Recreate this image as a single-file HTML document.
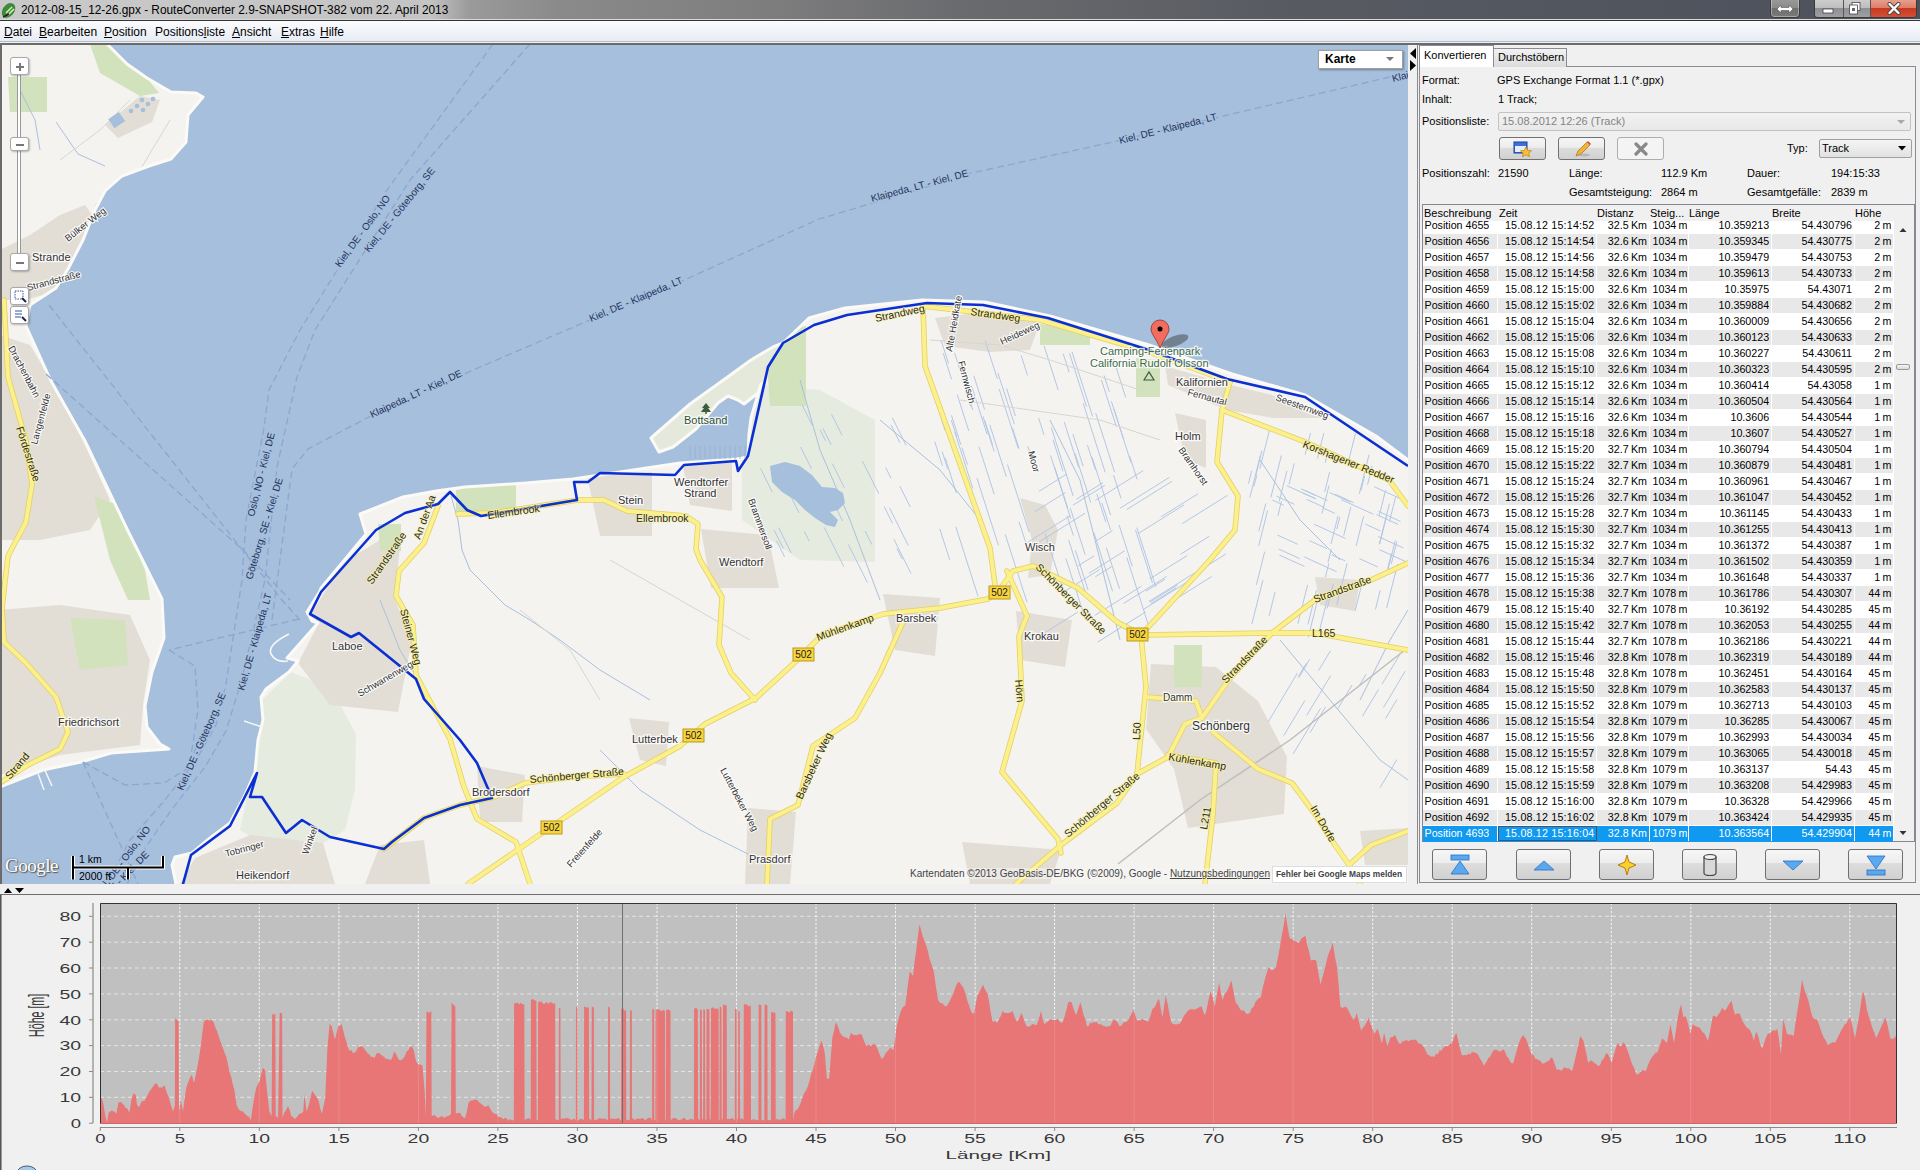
<!DOCTYPE html><html><head><meta charset="utf-8"><title>RouteConverter</title><style>
*{margin:0;padding:0;box-sizing:border-box}
html,body{width:1920px;height:1170px;overflow:hidden;background:#f0f0f0;font-family:"Liberation Sans",sans-serif;font-size:12px;color:#000}
.abs{position:absolute}
.tick{font-family:"Liberation Sans",sans-serif;font-size:13px;fill:#383838}
.axl{font-family:"Liberation Sans",sans-serif;font-size:11.5px;fill:#383838}
.ayl{font-family:"Liberation Sans",sans-serif;font-size:21.5px;fill:#383838}
</style></head><body>
<div class="abs" style="left:0;top:0;width:1920px;height:21px;background:linear-gradient(90deg,#c9c9c9 0px,#c4c4c4 430px,#9a9a9a 470px,#8a8a8a 560px,#7e7e7f 760px,#6a6b6e 960px,#575a61 1300px,#4c515c 1920px)"></div>
<div class="abs" style="left:21px;top:3px;font-size:11.85px;color:#000">2012-08-15_12-26.gpx - RouteConverter 2.9-SNAPSHOT-382 vom 22. April 2013</div>
<div class="abs" style="left:0;top:21px;width:1920px;height:21px;background:linear-gradient(#fbfcfe,#e6ebf4)"></div>
<div class="abs" style="left:0;top:41px;width:1920px;height:1px;background:#b6bcc6"></div>
<div class="abs" style="left:0;top:43px;width:1920px;height:2px;background:#6b6b6b"></div>
<div class="abs" style="left:4px;top:25px;font-size:12px;color:#000"><u>D</u>atei</div>
<div class="abs" style="left:39px;top:25px;font-size:12px;color:#000"><u>B</u>earbeiten</div>
<div class="abs" style="left:104px;top:25px;font-size:12px;color:#000"><u>P</u>osition</div>
<div class="abs" style="left:155px;top:25px;font-size:12px;color:#000">Positions<u>l</u>iste</div>
<div class="abs" style="left:232px;top:25px;font-size:12px;color:#000"><u>A</u>nsicht</div>
<div class="abs" style="left:281px;top:25px;font-size:12px;color:#000"><u>E</u>xtras</div>
<div class="abs" style="left:320px;top:25px;font-size:12px;color:#000"><u>H</u>ilfe</div>
<svg class="abs" style="left:0;top:1px" width="18" height="19"><path d="M2,14 C1,8 5,3 10,2 C14,2 16,5 15,9 C14,13 10,17 5,17Z" fill="#3f8a3a"/><path d="M6,12 L12,6 M8,14 L14,8" stroke="#d8f0c0" stroke-width="1.5"/><path d="M3,16 L9,13" stroke="#222" stroke-width="1.5"/></svg>
<div class="abs" style="left:1770px;top:-2px;width:30px;height:20px;border:1px solid #3a3a3a;border-radius:0 0 4px 4px;background:linear-gradient(#9a9a9a,#8a8a8a 50%,#6e6e6e 51%,#7a7a7a);box-shadow:inset 0 0 0 1px rgba(255,255,255,0.35)"></div>
<svg class="abs" style="left:1776px;top:3px" width="18" height="12"><path d="M1,6 L5,2 V4.5 H13 V2 L17,6 L13,10 V7.5 H5 V10Z" fill="#fff" stroke="#555" stroke-width="0.6"/></svg>
<div class="abs" style="left:1814px;top:-2px;width:103px;height:20px;border:1px solid #3a3a3a;border-radius:0 0 4px 4px;overflow:hidden;box-shadow:inset 0 0 0 1px rgba(255,255,255,0.35)"><div class="abs" style="left:0;top:0;width:28px;height:20px;background:linear-gradient(#cfcfcf,#bdbdbd 45%,#8d8f93 46%,#a2a4a8)"></div><div class="abs" style="left:28px;top:0;width:1px;height:20px;background:#555"></div><div class="abs" style="left:29px;top:0;width:26px;height:20px;background:linear-gradient(#cfcfcf,#bdbdbd 45%,#8d8f93 46%,#a2a4a8)"></div><div class="abs" style="left:55px;top:0;width:1px;height:20px;background:#555"></div><div class="abs" style="left:56px;top:0;width:47px;height:20px;background:linear-gradient(#e8a392,#dc7d66 45%,#c9381f 46%,#d6553a)"></div></div>
<svg class="abs" style="left:1822px;top:6px" width="12" height="8"><rect x="1" y="3" width="10" height="4" fill="#fff" stroke="#444" stroke-width="0.8"/></svg>
<svg class="abs" style="left:1848px;top:1px" width="14" height="15"><rect x="4" y="1.5" width="8" height="8" fill="#fff" stroke="#444" stroke-width="0.8"/><rect x="1.5" y="4" width="8" height="9" fill="#fff" stroke="#444" stroke-width="0.8"/><rect x="4" y="7" width="3" height="3" fill="#666"/></svg>
<svg class="abs" style="left:1887px;top:2px" width="14" height="13"><path d="M2.5,2 L11.5,11 M11.5,2 L2.5,11" stroke="#444" stroke-width="4" stroke-linecap="round"/><path d="M2.5,2 L11.5,11 M11.5,2 L2.5,11" stroke="#fff" stroke-width="2.4" stroke-linecap="round"/></svg>
<div class="abs" style="left:0;top:19px;width:1920px;height:1px;background:#d8d8d8"></div>
<div class="abs" style="left:0;top:20px;width:1920px;height:1px;background:#333"></div>
<div class="abs" style="left:2px;top:45px;width:1406px;height:839px;overflow:hidden"><div class="abs" style="left:-2px;top:-45px"><svg style="position:absolute;left:0;top:0" width="1408" height="884" viewBox="0 0 1408 884">
<rect x="0" y="0" width="1408" height="884" fill="#f4f3ef"/>
<path d="M262,700 L291,672 L331,688 L356,734 L355,790 L345,830 L320,845 L265,845 L240,830 L256,755Z" fill="#e6ebdf"/>
<path d="M742,383 L820,390 L875,420 L875,562 L800,560 L742,520Z" fill="#e6ebdf"/>
<path d="M0,250 L30,235 L60,215 L85,205 L92,215 L80,250 L68,275 L55,292 L24,300 L0,300Z" fill="#e2ded6"/>
<path d="M105,125 L140,96 L160,100 L152,122 L118,138Z" fill="#e2ded6"/>
<path d="M0,335 L30,345 L60,395 L85,445 L110,500 L90,530 L40,540 L0,540Z" fill="#e2ded6"/>
<path d="M0,610 L60,605 L130,615 L150,660 L143,705 L140,745 L60,755 L0,775Z" fill="#e2ded6"/>
<path d="M312,613 L342,563 L380,540 L400,545 L395,600 L412,640 L398,712 L330,705 L298,663 L318,625Z" fill="#e2ded6"/>
<path d="M180,884 L195,858 L250,835 L323,843 L335,884Z" fill="#e2ded6"/>
<path d="M365,884 L380,845 L424,840 L430,884Z" fill="#e2ded6"/>
<path d="M477,766 L525,775 L522,822 L480,822Z" fill="#e2ded6"/>
<path d="M629,718 L669,722 L666,766 L640,760Z" fill="#e2ded6"/>
<path d="M587,476 L652,472 L652,536 L600,536Z" fill="#e2ded6"/>
<path d="M683,466 L732,462 L732,511 L690,505Z" fill="#e2ded6"/>
<path d="M701,529 L768,535 L779,588 L711,588Z" fill="#e2ded6"/>
<path d="M935,318 L985,312 L1040,322 L1030,350 L990,352 L945,346Z" fill="#e2ded6"/>
<path d="M1165,366 L1227,384 L1272,395 L1326,418 L1274,418 L1227,410 L1168,385Z" fill="#e2ded6"/>
<path d="M1175,413 L1206,420 L1206,468 L1185,460Z" fill="#e2ded6"/>
<path d="M1020,498 L1045,505 L1058,530 L1050,575 L1028,578 L1032,540Z" fill="#e2ded6"/>
<path d="M1151,664 L1216,667 L1258,701 L1287,757 L1284,814 L1188,828 L1174,769 L1146,729Z" fill="#e2ded6"/>
<path d="M1016,611 L1072,620 L1065,667 L1020,660Z" fill="#e2ded6"/>
<path d="M883,594 L940,598 L935,656 L895,650Z" fill="#e2ded6"/>
<path d="M748,808 L796,812 L790,884 L745,884Z" fill="#e2ded6"/>
<path d="M962,842 L1061,850 L1050,884 L970,884Z" fill="#e2ded6"/>
<path d="M1315,577 L1360,580 L1355,611 L1320,605Z" fill="#e2ded6"/>
<path d="M1360,831 L1408,828 L1408,865 L1365,865Z" fill="#e2ded6"/>
<path d="M90,44 L107,44 L127,64 L147,78 L159,93 L140,96 L100,73Z" fill="#d2e2bd"/>
<path d="M8,77 L47,77 L47,112 L10,112Z" fill="#d2e2bd"/>
<path d="M94,496 L118,505 L145,570 L150,600 L128,600 L110,560Z" fill="#d2e2bd"/>
<path d="M70,618 L125,620 L128,665 L80,670Z" fill="#d2e2bd"/>
<path d="M458,485 L516,484 L516,514 L462,514Z" fill="#d2e2bd"/>
<path d="M378,524 L401,524 L401,551 L380,551Z" fill="#d2e2bd"/>
<path d="M765,334 L806,326 L806,406 L770,406Z" fill="#d2e2bd"/>
<path d="M732,438 L745,438 L745,459 L732,459Z" fill="#d2e2bd"/>
<path d="M1040,324 L1090,330 L1090,345 L1040,345Z" fill="#d2e2bd"/>
<path d="M1136,358 L1160,360 L1160,397 L1136,397Z" fill="#d2e2bd"/>
<path d="M1174,645 L1202,645 L1202,687 L1174,687Z" fill="#d2e2bd"/>
<path d="M456,490 L480,488 L480,513 L456,513Z" fill="#d2e2bd"/>
<path d="M783,343 L773,347 L751,360 L729,376 L690,404 L651,438 L659,452 L673,447 L682,440 L696,429 L718,403 L728,396 L738,400 L744,404 L758,393 L761,384 L770,360Z" fill="#e4e9dc"/>
<line x1="998.0" y1="373.2" x2="1014.3" y2="424.0" stroke="#b3c7e6" stroke-width="1"/>
<line x1="945.2" y1="457.9" x2="956.4" y2="493.0" stroke="#b3c7e6" stroke-width="1"/>
<line x1="942.2" y1="451.6" x2="947.6" y2="468.7" stroke="#b3c7e6" stroke-width="1"/>
<line x1="1021.1" y1="355.4" x2="1027.5" y2="375.4" stroke="#b3c7e6" stroke-width="1"/>
<line x1="1019.1" y1="521.9" x2="1026.1" y2="543.7" stroke="#b3c7e6" stroke-width="1"/>
<line x1="976.9" y1="478.0" x2="998.4" y2="545.2" stroke="#b3c7e6" stroke-width="1"/>
<line x1="1051.2" y1="427.3" x2="1073.2" y2="496.0" stroke="#b3c7e6" stroke-width="1"/>
<line x1="939.8" y1="528.9" x2="949.7" y2="559.8" stroke="#b3c7e6" stroke-width="1"/>
<line x1="960.3" y1="365.9" x2="970.5" y2="397.9" stroke="#b3c7e6" stroke-width="1"/>
<line x1="1101.4" y1="379.8" x2="1116.4" y2="426.7" stroke="#b3c7e6" stroke-width="1"/>
<line x1="1064.2" y1="421.9" x2="1078.6" y2="467.1" stroke="#b3c7e6" stroke-width="1"/>
<line x1="943.2" y1="353.1" x2="951.6" y2="379.4" stroke="#b3c7e6" stroke-width="1"/>
<line x1="1072.9" y1="434.1" x2="1083.2" y2="466.3" stroke="#b3c7e6" stroke-width="1"/>
<line x1="1053.0" y1="439.7" x2="1063.0" y2="471.2" stroke="#b3c7e6" stroke-width="1"/>
<line x1="1096.8" y1="493.8" x2="1105.9" y2="522.2" stroke="#b3c7e6" stroke-width="1"/>
<line x1="1050.6" y1="455.5" x2="1070.8" y2="518.7" stroke="#b3c7e6" stroke-width="1"/>
<line x1="1083.2" y1="403.3" x2="1105.2" y2="472.3" stroke="#b3c7e6" stroke-width="1"/>
<line x1="954.8" y1="432.0" x2="972.9" y2="488.6" stroke="#b3c7e6" stroke-width="1"/>
<line x1="961.9" y1="447.6" x2="967.4" y2="464.7" stroke="#b3c7e6" stroke-width="1"/>
<line x1="1070.3" y1="508.2" x2="1085.2" y2="554.7" stroke="#b3c7e6" stroke-width="1"/>
<line x1="1113.9" y1="409.0" x2="1130.9" y2="462.3" stroke="#b3c7e6" stroke-width="1"/>
<line x1="1054.8" y1="467.6" x2="1067.6" y2="507.7" stroke="#b3c7e6" stroke-width="1"/>
<line x1="1106.4" y1="547.8" x2="1119.5" y2="588.9" stroke="#b3c7e6" stroke-width="1"/>
<line x1="1069.5" y1="353.3" x2="1086.6" y2="406.9" stroke="#b3c7e6" stroke-width="1"/>
<line x1="1065.9" y1="558.5" x2="1085.2" y2="618.7" stroke="#b3c7e6" stroke-width="1"/>
<line x1="989.8" y1="424.9" x2="1006.3" y2="476.7" stroke="#b3c7e6" stroke-width="1"/>
<line x1="934.7" y1="441.6" x2="942.5" y2="465.8" stroke="#b3c7e6" stroke-width="1"/>
<line x1="954.6" y1="353.0" x2="972.9" y2="410.2" stroke="#b3c7e6" stroke-width="1"/>
<line x1="957.2" y1="394.5" x2="968.8" y2="431.0" stroke="#b3c7e6" stroke-width="1"/>
<line x1="1113.0" y1="357.7" x2="1125.7" y2="397.4" stroke="#b3c7e6" stroke-width="1"/>
<line x1="1045.4" y1="534.3" x2="1064.6" y2="594.4" stroke="#b3c7e6" stroke-width="1"/>
<line x1="1111.4" y1="401.3" x2="1123.5" y2="439.1" stroke="#b3c7e6" stroke-width="1"/>
<line x1="1005.3" y1="534.5" x2="1027.0" y2="602.2" stroke="#b3c7e6" stroke-width="1"/>
<line x1="961.7" y1="378.8" x2="970.6" y2="406.5" stroke="#b3c7e6" stroke-width="1"/>
<line x1="979.0" y1="446.7" x2="994.2" y2="494.1" stroke="#b3c7e6" stroke-width="1"/>
<line x1="985.2" y1="340.9" x2="997.4" y2="378.9" stroke="#b3c7e6" stroke-width="1"/>
<line x1="1007.5" y1="464.6" x2="1029.1" y2="532.0" stroke="#b3c7e6" stroke-width="1"/>
<line x1="1075.0" y1="453.4" x2="1090.7" y2="502.4" stroke="#b3c7e6" stroke-width="1"/>
<line x1="1072.0" y1="351.9" x2="1092.6" y2="416.4" stroke="#b3c7e6" stroke-width="1"/>
<line x1="1093.8" y1="532.4" x2="1112.6" y2="591.3" stroke="#b3c7e6" stroke-width="1"/>
<line x1="1012.4" y1="427.8" x2="1019.0" y2="448.5" stroke="#b3c7e6" stroke-width="1"/>
<line x1="1063.2" y1="353.7" x2="1069.2" y2="372.4" stroke="#b3c7e6" stroke-width="1"/>
<line x1="973.8" y1="375.7" x2="984.6" y2="409.4" stroke="#b3c7e6" stroke-width="1"/>
<line x1="941.0" y1="340.1" x2="948.5" y2="363.4" stroke="#b3c7e6" stroke-width="1"/>
<line x1="951.3" y1="420.0" x2="956.6" y2="436.4" stroke="#b3c7e6" stroke-width="1"/>
<line x1="1113.6" y1="475.1" x2="1121.0" y2="498.3" stroke="#b3c7e6" stroke-width="1"/>
<line x1="983.0" y1="416.4" x2="994.2" y2="451.5" stroke="#b3c7e6" stroke-width="1"/>
<line x1="955.8" y1="526.8" x2="978.1" y2="596.4" stroke="#b3c7e6" stroke-width="1"/>
<line x1="1027.9" y1="446.4" x2="1034.2" y2="466.2" stroke="#b3c7e6" stroke-width="1"/>
<line x1="951.5" y1="415.4" x2="960.9" y2="444.9" stroke="#b3c7e6" stroke-width="1"/>
<line x1="1104.1" y1="375.5" x2="1109.3" y2="391.8" stroke="#b3c7e6" stroke-width="1"/>
<line x1="1129.7" y1="456.2" x2="1137.1" y2="479.3" stroke="#b3c7e6" stroke-width="1"/>
<line x1="1044.1" y1="345.9" x2="1058.2" y2="390.0" stroke="#b3c7e6" stroke-width="1"/>
<line x1="1135.5" y1="529.9" x2="1152.5" y2="583.2" stroke="#b3c7e6" stroke-width="1"/>
<line x1="984.8" y1="420.7" x2="992.6" y2="444.9" stroke="#b3c7e6" stroke-width="1"/>
<line x1="1092.1" y1="457.2" x2="1110.6" y2="515.0" stroke="#b3c7e6" stroke-width="1"/>
<line x1="999.2" y1="389.1" x2="1018.3" y2="448.7" stroke="#b3c7e6" stroke-width="1"/>
<line x1="1136.8" y1="527.6" x2="1155.8" y2="586.9" stroke="#b3c7e6" stroke-width="1"/>
<line x1="1101.8" y1="502.8" x2="1110.6" y2="530.2" stroke="#b3c7e6" stroke-width="1"/>
<line x1="1038.7" y1="418.2" x2="1044.0" y2="434.8" stroke="#b3c7e6" stroke-width="1"/>
<line x1="935.9" y1="401.5" x2="945.2" y2="430.7" stroke="#b3c7e6" stroke-width="1"/>
<line x1="1075.4" y1="550.4" x2="1088.1" y2="590.0" stroke="#b3c7e6" stroke-width="1"/>
<line x1="1126.8" y1="557.4" x2="1148.4" y2="624.9" stroke="#b3c7e6" stroke-width="1"/>
<line x1="1006.6" y1="388.5" x2="1015.4" y2="416.0" stroke="#b3c7e6" stroke-width="1"/>
<line x1="971.3" y1="385.0" x2="987.1" y2="434.3" stroke="#b3c7e6" stroke-width="1"/>
<line x1="1119.1" y1="524.9" x2="1132.3" y2="566.3" stroke="#b3c7e6" stroke-width="1"/>
<line x1="1067.1" y1="515.9" x2="1073.4" y2="535.6" stroke="#b3c7e6" stroke-width="1"/>
<line x1="1068.7" y1="540.2" x2="1087.3" y2="598.2" stroke="#b3c7e6" stroke-width="1"/>
<line x1="1087.5" y1="445.2" x2="1095.5" y2="470.0" stroke="#b3c7e6" stroke-width="1"/>
<line x1="1095.7" y1="413.2" x2="1114.6" y2="472.2" stroke="#b3c7e6" stroke-width="1"/>
<line x1="1395.5" y1="497.3" x2="1389.5" y2="521.3" stroke="#b3c7e6" stroke-width="1"/>
<line x1="1391.5" y1="553.2" x2="1387.5" y2="569.2" stroke="#b3c7e6" stroke-width="1"/>
<line x1="1260.3" y1="455.7" x2="1249.9" y2="497.4" stroke="#b3c7e6" stroke-width="1"/>
<line x1="1369.0" y1="454.8" x2="1359.3" y2="493.8" stroke="#b3c7e6" stroke-width="1"/>
<line x1="1396.8" y1="541.7" x2="1391.3" y2="564.0" stroke="#b3c7e6" stroke-width="1"/>
<line x1="1327.8" y1="452.3" x2="1325.2" y2="462.8" stroke="#b3c7e6" stroke-width="1"/>
<line x1="1395.3" y1="540.4" x2="1388.2" y2="568.9" stroke="#b3c7e6" stroke-width="1"/>
<line x1="1389.4" y1="503.7" x2="1379.3" y2="544.3" stroke="#b3c7e6" stroke-width="1"/>
<line x1="1372.2" y1="465.9" x2="1367.5" y2="484.7" stroke="#b3c7e6" stroke-width="1"/>
<line x1="1286.9" y1="470.9" x2="1279.2" y2="501.4" stroke="#b3c7e6" stroke-width="1"/>
<line x1="1281.5" y1="501.2" x2="1277.9" y2="515.8" stroke="#b3c7e6" stroke-width="1"/>
<line x1="1385.6" y1="490.1" x2="1379.1" y2="516.2" stroke="#b3c7e6" stroke-width="1"/>
<line x1="1333.3" y1="583.7" x2="1327.2" y2="608.5" stroke="#b3c7e6" stroke-width="1"/>
<line x1="1386.8" y1="515.3" x2="1379.7" y2="543.9" stroke="#b3c7e6" stroke-width="1"/>
<line x1="1323.8" y1="433.2" x2="1317.4" y2="458.6" stroke="#b3c7e6" stroke-width="1"/>
<line x1="1269.3" y1="430.7" x2="1259.8" y2="468.6" stroke="#b3c7e6" stroke-width="1"/>
<line x1="1267.6" y1="510.5" x2="1258.7" y2="545.9" stroke="#b3c7e6" stroke-width="1"/>
<line x1="1329.0" y1="485.4" x2="1322.0" y2="513.6" stroke="#b3c7e6" stroke-width="1"/>
<line x1="1328.9" y1="563.3" x2="1325.4" y2="577.0" stroke="#b3c7e6" stroke-width="1"/>
<line x1="1329.6" y1="472.2" x2="1324.7" y2="491.9" stroke="#b3c7e6" stroke-width="1"/>
<line x1="1363.6" y1="516.3" x2="1356.1" y2="546.0" stroke="#b3c7e6" stroke-width="1"/>
<line x1="1361.6" y1="585.1" x2="1355.2" y2="610.6" stroke="#b3c7e6" stroke-width="1"/>
<line x1="1338.0" y1="515.9" x2="1331.0" y2="543.9" stroke="#b3c7e6" stroke-width="1"/>
<line x1="1350.8" y1="506.9" x2="1343.7" y2="535.6" stroke="#b3c7e6" stroke-width="1"/>
<line x1="1316.5" y1="590.1" x2="1307.9" y2="624.5" stroke="#b3c7e6" stroke-width="1"/>
<line x1="1380.2" y1="590.2" x2="1375.5" y2="609.3" stroke="#b3c7e6" stroke-width="1"/>
<line x1="1329.5" y1="590.4" x2="1319.7" y2="629.8" stroke="#b3c7e6" stroke-width="1"/>
<line x1="1261.9" y1="450.7" x2="1255.6" y2="476.1" stroke="#b3c7e6" stroke-width="1"/>
<line x1="1251.6" y1="470.9" x2="1248.5" y2="483.5" stroke="#b3c7e6" stroke-width="1"/>
<line x1="1347.1" y1="563.3" x2="1336.8" y2="604.7" stroke="#b3c7e6" stroke-width="1"/>
<line x1="1264.7" y1="551.7" x2="1256.4" y2="584.8" stroke="#b3c7e6" stroke-width="1"/>
<line x1="1262.9" y1="580.1" x2="1251.9" y2="623.9" stroke="#b3c7e6" stroke-width="1"/>
<line x1="1275.1" y1="591.9" x2="1269.1" y2="615.9" stroke="#b3c7e6" stroke-width="1"/>
<line x1="1318.0" y1="598.3" x2="1308.2" y2="637.4" stroke="#b3c7e6" stroke-width="1"/>
<line x1="1265.8" y1="503.4" x2="1258.8" y2="531.4" stroke="#b3c7e6" stroke-width="1"/>
<line x1="1294.3" y1="463.3" x2="1289.0" y2="484.4" stroke="#b3c7e6" stroke-width="1"/>
<line x1="1355.5" y1="433.3" x2="1348.2" y2="462.7" stroke="#b3c7e6" stroke-width="1"/>
<line x1="1310.5" y1="433.1" x2="1305.1" y2="454.7" stroke="#b3c7e6" stroke-width="1"/>
<line x1="1339.8" y1="517.1" x2="1336.8" y2="529.3" stroke="#b3c7e6" stroke-width="1"/>
<line x1="1397.6" y1="564.0" x2="1386.6" y2="608.0" stroke="#b3c7e6" stroke-width="1"/>
<line x1="1256.8" y1="475.1" x2="1253.9" y2="486.5" stroke="#b3c7e6" stroke-width="1"/>
<line x1="1364.6" y1="476.0" x2="1361.0" y2="490.5" stroke="#b3c7e6" stroke-width="1"/>
<line x1="1307.6" y1="584.9" x2="1297.9" y2="623.6" stroke="#b3c7e6" stroke-width="1"/>
<line x1="1281.4" y1="455.4" x2="1270.8" y2="497.6" stroke="#b3c7e6" stroke-width="1"/>
<line x1="1331.3" y1="549.1" x2="1328.0" y2="562.2" stroke="#b3c7e6" stroke-width="1"/>
<line x1="1277.5" y1="535.1" x2="1297.8" y2="544.3" stroke="#b3c7e6" stroke-width="1"/>
<line x1="1279.4" y1="555.1" x2="1304.4" y2="566.4" stroke="#b3c7e6" stroke-width="1"/>
<line x1="1374.2" y1="486.7" x2="1404.0" y2="500.3" stroke="#b3c7e6" stroke-width="1"/>
<line x1="1278.7" y1="549.0" x2="1299.6" y2="558.6" stroke="#b3c7e6" stroke-width="1"/>
<line x1="1314.1" y1="524.2" x2="1345.5" y2="538.5" stroke="#b3c7e6" stroke-width="1"/>
<line x1="1304.8" y1="490.3" x2="1327.4" y2="500.6" stroke="#b3c7e6" stroke-width="1"/>
<line x1="1301.0" y1="488.8" x2="1315.5" y2="495.4" stroke="#b3c7e6" stroke-width="1"/>
<line x1="1276.5" y1="496.1" x2="1294.4" y2="504.3" stroke="#b3c7e6" stroke-width="1"/>
<line x1="1309.7" y1="540.8" x2="1327.0" y2="548.7" stroke="#b3c7e6" stroke-width="1"/>
<line x1="1335.0" y1="494.2" x2="1353.6" y2="502.7" stroke="#b3c7e6" stroke-width="1"/>
<line x1="1272.4" y1="500.0" x2="1283.7" y2="505.2" stroke="#b3c7e6" stroke-width="1"/>
<line x1="1365.3" y1="524.1" x2="1380.5" y2="531.0" stroke="#b3c7e6" stroke-width="1"/>
<line x1="1331.7" y1="554.8" x2="1345.1" y2="560.8" stroke="#b3c7e6" stroke-width="1"/>
<line x1="1376.5" y1="514.6" x2="1398.3" y2="524.5" stroke="#b3c7e6" stroke-width="1"/>
<line x1="1378.5" y1="511.4" x2="1400.6" y2="521.5" stroke="#b3c7e6" stroke-width="1"/>
<line x1="1359.4" y1="558.6" x2="1377.9" y2="567.0" stroke="#b3c7e6" stroke-width="1"/>
<line x1="1378.2" y1="536.5" x2="1403.2" y2="547.9" stroke="#b3c7e6" stroke-width="1"/>
<line x1="1322.6" y1="507.8" x2="1334.8" y2="513.3" stroke="#b3c7e6" stroke-width="1"/>
<line x1="1286.9" y1="485.7" x2="1314.2" y2="498.1" stroke="#b3c7e6" stroke-width="1"/>
<line x1="1303.2" y1="493.1" x2="1316.1" y2="498.9" stroke="#b3c7e6" stroke-width="1"/>
<line x1="1379.4" y1="549.6" x2="1405.1" y2="561.3" stroke="#b3c7e6" stroke-width="1"/>
<line x1="1306.7" y1="499.4" x2="1324.1" y2="507.3" stroke="#b3c7e6" stroke-width="1"/>
<line x1="1329.7" y1="492.6" x2="1350.5" y2="502.1" stroke="#b3c7e6" stroke-width="1"/>
<line x1="1304.2" y1="556.9" x2="1336.6" y2="571.7" stroke="#b3c7e6" stroke-width="1"/>
<line x1="1341.1" y1="499.6" x2="1373.4" y2="514.2" stroke="#b3c7e6" stroke-width="1"/>
<line x1="1112.6" y1="530.6" x2="1096.6" y2="540.6" stroke="#b3c7e6" stroke-width="1"/>
<line x1="1124.9" y1="550.7" x2="1088.8" y2="573.3" stroke="#b3c7e6" stroke-width="1"/>
<line x1="1094.2" y1="555.8" x2="1078.0" y2="565.9" stroke="#b3c7e6" stroke-width="1"/>
<line x1="1104.9" y1="485.3" x2="1072.9" y2="505.2" stroke="#b3c7e6" stroke-width="1"/>
<line x1="1067.1" y1="473.8" x2="1038.9" y2="491.4" stroke="#b3c7e6" stroke-width="1"/>
<line x1="1099.6" y1="569.5" x2="1062.4" y2="592.8" stroke="#b3c7e6" stroke-width="1"/>
<line x1="1187.6" y1="581.8" x2="1143.0" y2="609.7" stroke="#b3c7e6" stroke-width="1"/>
<line x1="1209.4" y1="536.2" x2="1180.4" y2="554.4" stroke="#b3c7e6" stroke-width="1"/>
<line x1="1227.4" y1="495.4" x2="1182.4" y2="523.5" stroke="#b3c7e6" stroke-width="1"/>
<line x1="1169.3" y1="477.4" x2="1119.9" y2="508.3" stroke="#b3c7e6" stroke-width="1"/>
<line x1="1211.6" y1="576.6" x2="1166.3" y2="605.0" stroke="#b3c7e6" stroke-width="1"/>
<line x1="1198.1" y1="493.7" x2="1161.1" y2="516.8" stroke="#b3c7e6" stroke-width="1"/>
<line x1="1145.7" y1="611.9" x2="1097.6" y2="642.1" stroke="#b3c7e6" stroke-width="1"/>
<line x1="1200.5" y1="569.3" x2="1148.8" y2="601.6" stroke="#b3c7e6" stroke-width="1"/>
<line x1="1176.1" y1="587.9" x2="1150.9" y2="603.6" stroke="#b3c7e6" stroke-width="1"/>
<line x1="1065.3" y1="492.6" x2="1034.9" y2="511.6" stroke="#b3c7e6" stroke-width="1"/>
<line x1="1077.8" y1="612.1" x2="1039.5" y2="636.1" stroke="#b3c7e6" stroke-width="1"/>
<line x1="1166.7" y1="576.5" x2="1123.5" y2="603.5" stroke="#b3c7e6" stroke-width="1"/>
<line x1="1143.2" y1="470.6" x2="1095.3" y2="500.5" stroke="#b3c7e6" stroke-width="1"/>
<line x1="1187.2" y1="555.5" x2="1149.8" y2="578.9" stroke="#b3c7e6" stroke-width="1"/>
<line x1="1172.1" y1="481.2" x2="1126.6" y2="509.6" stroke="#b3c7e6" stroke-width="1"/>
<line x1="1102.9" y1="482.7" x2="1076.3" y2="499.3" stroke="#b3c7e6" stroke-width="1"/>
<line x1="1184.0" y1="504.9" x2="1138.4" y2="533.4" stroke="#b3c7e6" stroke-width="1"/>
<line x1="1225.9" y1="554.0" x2="1194.6" y2="573.5" stroke="#b3c7e6" stroke-width="1"/>
<line x1="1141.4" y1="586.2" x2="1094.8" y2="615.4" stroke="#b3c7e6" stroke-width="1"/>
<line x1="1164.9" y1="579.3" x2="1145.8" y2="591.2" stroke="#b3c7e6" stroke-width="1"/>
<line x1="1085.1" y1="513.2" x2="1039.3" y2="541.8" stroke="#b3c7e6" stroke-width="1"/>
<line x1="1111.8" y1="566.5" x2="1095.3" y2="576.8" stroke="#b3c7e6" stroke-width="1"/>
<line x1="1070.3" y1="515.7" x2="1027.4" y2="542.5" stroke="#b3c7e6" stroke-width="1"/>
<line x1="1177.7" y1="584.9" x2="1150.0" y2="602.1" stroke="#b3c7e6" stroke-width="1"/>
<line x1="832.3" y1="463.6" x2="844.3" y2="487.6" stroke="#b3c7e6" stroke-width="1"/>
<line x1="776.6" y1="540.9" x2="784.6" y2="556.8" stroke="#b3c7e6" stroke-width="1"/>
<line x1="896.9" y1="548.5" x2="902.2" y2="559.1" stroke="#b3c7e6" stroke-width="1"/>
<line x1="824.3" y1="527.6" x2="843.8" y2="566.6" stroke="#b3c7e6" stroke-width="1"/>
<line x1="822.9" y1="428.4" x2="831.1" y2="444.7" stroke="#b3c7e6" stroke-width="1"/>
<line x1="892.4" y1="417.9" x2="906.1" y2="445.4" stroke="#b3c7e6" stroke-width="1"/>
<line x1="779.8" y1="474.3" x2="799.1" y2="512.9" stroke="#b3c7e6" stroke-width="1"/>
<line x1="778.6" y1="527.6" x2="791.2" y2="552.9" stroke="#b3c7e6" stroke-width="1"/>
<line x1="884.2" y1="506.6" x2="892.6" y2="523.5" stroke="#b3c7e6" stroke-width="1"/>
<line x1="885.7" y1="467.5" x2="891.1" y2="478.3" stroke="#b3c7e6" stroke-width="1"/>
<line x1="760.5" y1="468.5" x2="772.3" y2="492.0" stroke="#b3c7e6" stroke-width="1"/>
<line x1="802.3" y1="405.3" x2="812.4" y2="425.6" stroke="#b3c7e6" stroke-width="1"/>
<line x1="804.3" y1="531.2" x2="809.3" y2="541.3" stroke="#b3c7e6" stroke-width="1"/>
<line x1="865.1" y1="531.0" x2="871.9" y2="544.6" stroke="#b3c7e6" stroke-width="1"/>
<line x1="889.7" y1="508.3" x2="908.2" y2="545.4" stroke="#b3c7e6" stroke-width="1"/>
<line x1="800.6" y1="447.0" x2="811.5" y2="468.8" stroke="#b3c7e6" stroke-width="1"/>
<line x1="899.8" y1="486.1" x2="910.2" y2="506.9" stroke="#b3c7e6" stroke-width="1"/>
<line x1="819.9" y1="429.5" x2="825.7" y2="441.0" stroke="#b3c7e6" stroke-width="1"/>
<line x1="774.2" y1="530.2" x2="783.5" y2="548.8" stroke="#b3c7e6" stroke-width="1"/>
<line x1="891.0" y1="424.9" x2="900.0" y2="442.9" stroke="#b3c7e6" stroke-width="1"/>
<line x1="831.5" y1="414.2" x2="842.1" y2="435.4" stroke="#b3c7e6" stroke-width="1"/>
<line x1="893.9" y1="539.2" x2="911.0" y2="573.5" stroke="#b3c7e6" stroke-width="1"/>
<line x1="848.3" y1="544.4" x2="867.4" y2="582.6" stroke="#b3c7e6" stroke-width="1"/>
<line x1="836.9" y1="509.5" x2="842.6" y2="521.0" stroke="#b3c7e6" stroke-width="1"/>
<line x1="862.5" y1="461.2" x2="878.8" y2="493.7" stroke="#b3c7e6" stroke-width="1"/>
<line x1="1366.0" y1="674.3" x2="1358.9" y2="686.3" stroke="#b3c7e6" stroke-width="1"/>
<line x1="1399.4" y1="655.3" x2="1382.0" y2="684.2" stroke="#b3c7e6" stroke-width="1"/>
<line x1="1330.6" y1="675.7" x2="1306.8" y2="715.3" stroke="#b3c7e6" stroke-width="1"/>
<line x1="1405.2" y1="671.2" x2="1383.5" y2="707.5" stroke="#b3c7e6" stroke-width="1"/>
<line x1="1325.5" y1="706.9" x2="1310.0" y2="732.7" stroke="#b3c7e6" stroke-width="1"/>
<line x1="1309.7" y1="659.4" x2="1298.8" y2="677.7" stroke="#b3c7e6" stroke-width="1"/>
<line x1="1396.9" y1="699.6" x2="1385.6" y2="718.5" stroke="#b3c7e6" stroke-width="1"/>
<line x1="1396.9" y1="759.6" x2="1380.1" y2="787.6" stroke="#b3c7e6" stroke-width="1"/>
<line x1="1306.5" y1="663.1" x2="1298.3" y2="676.7" stroke="#b3c7e6" stroke-width="1"/>
<line x1="1330.4" y1="650.9" x2="1318.6" y2="670.5" stroke="#b3c7e6" stroke-width="1"/>
<line x1="1320.5" y1="708.4" x2="1293.2" y2="753.8" stroke="#b3c7e6" stroke-width="1"/>
<line x1="1378.5" y1="689.5" x2="1362.5" y2="716.1" stroke="#b3c7e6" stroke-width="1"/>
<line x1="1351.9" y1="685.2" x2="1337.7" y2="708.8" stroke="#b3c7e6" stroke-width="1"/>
<line x1="1297.3" y1="673.3" x2="1268.1" y2="722.0" stroke="#b3c7e6" stroke-width="1"/>
<line x1="1304.9" y1="700.4" x2="1283.7" y2="735.6" stroke="#b3c7e6" stroke-width="1"/>
<path d="M1118,864 L1200,800 L1290,740 L1405,650" fill="none" stroke="#bdbdbd" stroke-width="1.5"/>
<path d="M800,380 L820,450 L850,520 L880,600" fill="none" stroke="#a9c0de" stroke-width="1"/>
<path d="M1050,420 L1080,480 L1100,560 L1120,640" fill="none" stroke="#a9c0de" stroke-width="1"/>
<path d="M1280,640 L1330,700 L1380,760 L1408,780" fill="none" stroke="#a9c0de" stroke-width="1"/>
<path d="M451,496 L458,520 L462,550 L470,570 L490,590 L505,605 L530,620 L560,640 L600,670 L650,700" fill="none" stroke="#a9c0de" stroke-width="1"/>
<path d="M380,600 L400,650 L430,700" fill="none" stroke="#a9c0de" stroke-width="1"/>
<path d="M600,750 L640,790 L700,830 L760,860" fill="none" stroke="#a9c0de" stroke-width="1"/>
<path d="M880,420 L940,470 L980,520" fill="none" stroke="#a9c0de" stroke-width="1"/>
<path d="M1260,460 L1300,520 L1340,560" fill="none" stroke="#a9c0de" stroke-width="1"/>
<path d="M1360,700 L1390,640 L1408,610" fill="none" stroke="#a9c0de" stroke-width="1"/>
<path d="M56,122 L78,154 L105,166" fill="none" stroke="#a9c0de" stroke-width="1"/>
<path d="M20,90 L35,120 L40,150" fill="none" stroke="#a9c0de" stroke-width="1"/>
<path d="M95,205 L140,170 L170,120" fill="none" stroke="#d8d6d0" stroke-width="1"/>
<path d="M60,160 L100,130 L130,100" fill="none" stroke="#d8d6d0" stroke-width="1"/>
<path d="M930,340 L1000,345 L1050,360 L1140,390" fill="none" stroke="#d8d6d0" stroke-width="1"/>
<path d="M960,400 L1100,420 L1160,440" fill="none" stroke="#d8d6d0" stroke-width="1"/>
<path d="M610,560 L680,600 L750,640" fill="none" stroke="#d8d6d0" stroke-width="1"/>
<path d="M520,610 L570,650 L600,700" fill="none" stroke="#d8d6d0" stroke-width="1"/>
<path d="M100,30 L1430,30 L1430,475 L1408,460 L1376,436 L1305,395 L1232,374 L1149,345 L1050,316 L985,302 L922,300 L845,308 L809,318 L783,343 L773,347 L751,360 L729,376 L690,404 L651,438 L659,452 L673,447 L682,440 L696,429 L718,403 L728,396 L738,400 L744,404 L758,393 L761,384 L751,418 L749,434 L748,457 L737,459 L680,463 L573,479 L526,483 L465,487 L436,491 L403,497 L360,514 L366,534 L342,563 L321,588 L320,591 L307,612 L312,621 L318,623 L287,658 L298,661 L289,672 L266,689 L261,697 L263,720 L258,740 L255,772 L245,795 L230,823 L210,838 L192,853 L175,857 L172,865 L176,884 L175,900 L-10,900 L-10,790 L0,787 L43,770 L81,762 L111,753 L169,749 L160,744 L147,727 L145,706 L152,672 L158,655 L164,638 L162,599 L145,565 L128,531 L85,441 L51,381 L26,326 L30,305 L56,288 L68,269 L83,240 L95,210 L105,191 L122,176 L149,166 L171,159 L186,142 L188,115 L203,97 L196,93 L171,92 L147,78 L127,64 L107,44 L100,30Z" fill="#a6bfdd" stroke="#fbfaf6" stroke-width="3" stroke-linejoin="round"/>
<path d="M770,466 L785,462 L800,466 L812,475 L822,487 L835,488 L843,493 L845,503 L838,510 L830,512 L838,520 L835,527 L826,525 L815,518 L805,510 L795,500 L782,492 L772,482Z" fill="#a6bfdd"/>
<path d="M289,634 Q267,645 271,654 Q276,663 288,661" fill="none" stroke="#f6f6f6" stroke-width="1.6"/>
<path d="M244,721 L262,727" stroke="#f6f6f6" stroke-width="1.5"/><path d="M36,768 L44,790 M43,766 L52,786" stroke="#f6f6f6" stroke-width="1.5"/>
<rect x="110" y="115" width="13" height="11" fill="#a6bfdd" transform="rotate(-35 116 120)"/>
<circle cx="142" cy="100" r="2.3" fill="#a6bfdd"/>
<circle cx="148" cy="104" r="2.3" fill="#a6bfdd"/>
<circle cx="153" cy="99" r="2.3" fill="#a6bfdd"/>
<circle cx="137" cy="106" r="2.3" fill="#a6bfdd"/>
<circle cx="143" cy="110" r="2.3" fill="#a6bfdd"/>
<circle cx="131" cy="111" r="2.3" fill="#a6bfdd"/>
<path d="M493,44 L387,190 L300,330 L269,390 L264,428 L246,520 L242,580 L226,684 L216,725 L195,762 L164,801 L130,840 L107,884" fill="none" stroke="#8ca6cf" stroke-width="1.3" stroke-dasharray="7,4"/>
<path d="M530,44 L410,180 L315,330 L297,377 L277,467 L265,580 L242,679 L226,731 L205,767 L172,809 L146,847 L127,884" fill="none" stroke="#8ca6cf" stroke-width="1.3" stroke-dasharray="7,4"/>
<path d="M83,762 L125,785 L164,783 L190,767 L198,740" fill="none" stroke="#8ca6cf" stroke-width="1.3" stroke-dasharray="7,4"/>
<path d="M169,650 L195,666 L198,710 L190,762" fill="none" stroke="#8ca6cf" stroke-width="1.3" stroke-dasharray="7,4"/>
<path d="M299,619 L169,650" fill="none" stroke="#8ca6cf" stroke-width="1.3" stroke-dasharray="7,4"/>
<path d="M83,762 L138,884" fill="none" stroke="#8ca6cf" stroke-width="1.3" stroke-dasharray="7,4"/>
<path d="M272,620 L292,469 L308,449 L367,418 L480,367 L583,323 L680,282 L819,219 L917,190 L967,174 L1113,142 L1219,117 L1394,76 L1408,73" fill="none" stroke="#8ca6cf" stroke-width="1.3" stroke-dasharray="7,4"/>
<path d="M49,305 L282,600 L300,620" fill="none" stroke="#8ca6cf" stroke-width="1.3" stroke-dasharray="7,4"/>
<path d="M46,374 L244,551 L290,600" fill="none" stroke="#8ca6cf" stroke-width="1.3" stroke-dasharray="7,4"/>
<path d="M4,300 L8,377 L26,441 L32,484 L26,522 L8,556 L2,608 L4,642 L26,663 L56,697 L68,732 L60,749 L26,766 L0,783" fill="none" stroke="#e3cf62" stroke-width="5.5" stroke-linejoin="round" stroke-linecap="round"/>
<path d="M438,506 L424,543 L399,571 L396,596 L413,625 L416,675 L450,739 L464,787 L477,819 L516,842 L530,884" fill="none" stroke="#e3cf62" stroke-width="5.5" stroke-linejoin="round" stroke-linecap="round"/>
<path d="M458,514 L493,513 L578,500 L604,500 L627,511 L686,516 L698,524 L696,549 L700,560 L722,597 L719,645 L731,673 L755,700" fill="none" stroke="#e3cf62" stroke-width="5.5" stroke-linejoin="round" stroke-linecap="round"/>
<path d="M384,849 L424,818 L460,805 L494,797 L525,783 L573,777 L624,774" fill="none" stroke="#e3cf62" stroke-width="5.5" stroke-linejoin="round" stroke-linecap="round"/>
<path d="M468,884 L545,831 L624,777 L680,746 L705,724 L756,698 L793,664 L821,636 L883,614 L940,608 L988,599 L998,592 L1013,571 L1033,566 L1078,588 L1117,622 L1141,635 L1272,633 L1315,633 L1408,650" fill="none" stroke="#e3cf62" stroke-width="5.5" stroke-linejoin="round" stroke-linecap="round"/>
<path d="M903,622 L880,673 L855,718 L813,746 L798,805 L770,819 L767,884" fill="none" stroke="#e3cf62" stroke-width="5.5" stroke-linejoin="round" stroke-linecap="round"/>
<path d="M923,306 L925,366 L990,548 L996,592" fill="none" stroke="#e3cf62" stroke-width="5.5" stroke-linejoin="round" stroke-linecap="round"/>
<path d="M923,306 L1040,320 L1149,352 L1230,382" fill="none" stroke="#e3cf62" stroke-width="5.5" stroke-linejoin="round" stroke-linecap="round"/>
<path d="M1230,382 L1222,410 L1217,462 L1238,496 L1235,530 L1210,560 L1141,635" fill="none" stroke="#e3cf62" stroke-width="5.5" stroke-linejoin="round" stroke-linecap="round"/>
<path d="M1222,410 L1303,441 L1389,480 L1408,506" fill="none" stroke="#e3cf62" stroke-width="5.5" stroke-linejoin="round" stroke-linecap="round"/>
<path d="M1007,571 L1027,616 L1019,636 L1022,701 L1002,772 L1058,839 L1061,853" fill="none" stroke="#e3cf62" stroke-width="5.5" stroke-linejoin="round" stroke-linecap="round"/>
<path d="M1141,635 L1146,687 L1137,774 L1117,803 L1061,845 L1016,884" fill="none" stroke="#e3cf62" stroke-width="5.5" stroke-linejoin="round" stroke-linecap="round"/>
<path d="M1137,774 L1168,757 L1185,724 L1202,718 L1230,678 L1272,633 L1315,600 L1371,580 L1408,563" fill="none" stroke="#e3cf62" stroke-width="5.5" stroke-linejoin="round" stroke-linecap="round"/>
<path d="M1146,697 L1196,701 L1202,718" fill="none" stroke="#e3cf62" stroke-width="5.5" stroke-linejoin="round" stroke-linecap="round"/>
<path d="M1168,755 L1216,763 L1213,814 L1205,884" fill="none" stroke="#e3cf62" stroke-width="5.5" stroke-linejoin="round" stroke-linecap="round"/>
<path d="M1213,732 L1258,769 L1292,783 L1315,814 L1335,845 L1349,865 L1360,884" fill="none" stroke="#e3cf62" stroke-width="5.5" stroke-linejoin="round" stroke-linecap="round"/>
<path d="M1349,865 L1371,845 L1408,831" fill="none" stroke="#e3cf62" stroke-width="5.5" stroke-linejoin="round" stroke-linecap="round"/>
<path d="M4,300 L8,377 L26,441 L32,484 L26,522 L8,556 L2,608 L4,642 L26,663 L56,697 L68,732 L60,749 L26,766 L0,783" fill="none" stroke="#fbf08c" stroke-width="4" stroke-linejoin="round" stroke-linecap="round"/>
<path d="M438,506 L424,543 L399,571 L396,596 L413,625 L416,675 L450,739 L464,787 L477,819 L516,842 L530,884" fill="none" stroke="#fbf08c" stroke-width="4" stroke-linejoin="round" stroke-linecap="round"/>
<path d="M458,514 L493,513 L578,500 L604,500 L627,511 L686,516 L698,524 L696,549 L700,560 L722,597 L719,645 L731,673 L755,700" fill="none" stroke="#fbf08c" stroke-width="4" stroke-linejoin="round" stroke-linecap="round"/>
<path d="M384,849 L424,818 L460,805 L494,797 L525,783 L573,777 L624,774" fill="none" stroke="#fbf08c" stroke-width="4" stroke-linejoin="round" stroke-linecap="round"/>
<path d="M468,884 L545,831 L624,777 L680,746 L705,724 L756,698 L793,664 L821,636 L883,614 L940,608 L988,599 L998,592 L1013,571 L1033,566 L1078,588 L1117,622 L1141,635 L1272,633 L1315,633 L1408,650" fill="none" stroke="#fbf08c" stroke-width="4" stroke-linejoin="round" stroke-linecap="round"/>
<path d="M903,622 L880,673 L855,718 L813,746 L798,805 L770,819 L767,884" fill="none" stroke="#fbf08c" stroke-width="4" stroke-linejoin="round" stroke-linecap="round"/>
<path d="M923,306 L925,366 L990,548 L996,592" fill="none" stroke="#fbf08c" stroke-width="4" stroke-linejoin="round" stroke-linecap="round"/>
<path d="M923,306 L1040,320 L1149,352 L1230,382" fill="none" stroke="#fbf08c" stroke-width="4" stroke-linejoin="round" stroke-linecap="round"/>
<path d="M1230,382 L1222,410 L1217,462 L1238,496 L1235,530 L1210,560 L1141,635" fill="none" stroke="#fbf08c" stroke-width="4" stroke-linejoin="round" stroke-linecap="round"/>
<path d="M1222,410 L1303,441 L1389,480 L1408,506" fill="none" stroke="#fbf08c" stroke-width="4" stroke-linejoin="round" stroke-linecap="round"/>
<path d="M1007,571 L1027,616 L1019,636 L1022,701 L1002,772 L1058,839 L1061,853" fill="none" stroke="#fbf08c" stroke-width="4" stroke-linejoin="round" stroke-linecap="round"/>
<path d="M1141,635 L1146,687 L1137,774 L1117,803 L1061,845 L1016,884" fill="none" stroke="#fbf08c" stroke-width="4" stroke-linejoin="round" stroke-linecap="round"/>
<path d="M1137,774 L1168,757 L1185,724 L1202,718 L1230,678 L1272,633 L1315,600 L1371,580 L1408,563" fill="none" stroke="#fbf08c" stroke-width="4" stroke-linejoin="round" stroke-linecap="round"/>
<path d="M1146,697 L1196,701 L1202,718" fill="none" stroke="#fbf08c" stroke-width="4" stroke-linejoin="round" stroke-linecap="round"/>
<path d="M1168,755 L1216,763 L1213,814 L1205,884" fill="none" stroke="#fbf08c" stroke-width="4" stroke-linejoin="round" stroke-linecap="round"/>
<path d="M1213,732 L1258,769 L1292,783 L1315,814 L1335,845 L1349,865 L1360,884" fill="none" stroke="#fbf08c" stroke-width="4" stroke-linejoin="round" stroke-linecap="round"/>
<path d="M1349,865 L1371,845 L1408,831" fill="none" stroke="#fbf08c" stroke-width="4" stroke-linejoin="round" stroke-linecap="round"/>
<path d="M183,884 L191,855 L230,826 L257,773 L250,797 L262,797 L286,833 L302,820 L330,837 L384,849 L392,842 L424,818 L460,805 L492,798 L477,763 L460,740 L424,699 L416,679 L359,633 L351,637 L310,614 L321,592 L376,530 L405,513 L438,504 L450,492 L467,510 L481,516 L577,500 L574,482 L588,482 L600,473 L675,475 L684,465 L736,461 L738,471 L748,456 L768,367 L783,343 L814,325 L847,315 L927,303 L983,305 L1048,318 L1149,350 L1227,379 L1305,397 L1408,466" fill="none" stroke="#0a2fd2" stroke-width="2.6" stroke-linejoin="round"/>
<text x="32" y="261" font-size="11" fill="#333" font-family="Liberation Sans" stroke="#fff" stroke-width="2.5" stroke-opacity="0.8" paint-order="stroke">Strande</text>
<text x="58" y="726" font-size="11" fill="#333" font-family="Liberation Sans" stroke="#fff" stroke-width="2.5" stroke-opacity="0.8" paint-order="stroke">Friedrichsort</text>
<text x="332" y="650" font-size="11" fill="#333" font-family="Liberation Sans" stroke="#fff" stroke-width="2.5" stroke-opacity="0.8" paint-order="stroke">Laboe</text>
<text x="236" y="879" font-size="11" fill="#333" font-family="Liberation Sans" stroke="#fff" stroke-width="2.5" stroke-opacity="0.8" paint-order="stroke">Heikendorf</text>
<text x="472" y="796" font-size="11" fill="#333" font-family="Liberation Sans" stroke="#fff" stroke-width="2.5" stroke-opacity="0.8" paint-order="stroke">Brodersdorf</text>
<text x="632" y="743" font-size="11" fill="#333" font-family="Liberation Sans" stroke="#fff" stroke-width="2.5" stroke-opacity="0.8" paint-order="stroke">Lutterbek</text>
<text x="618" y="504" font-size="11" fill="#333" font-family="Liberation Sans" stroke="#fff" stroke-width="2.5" stroke-opacity="0.8" paint-order="stroke">Stein</text>
<text x="674" y="486" font-size="11" fill="#333" font-family="Liberation Sans" stroke="#fff" stroke-width="2.5" stroke-opacity="0.8" paint-order="stroke">Wendtorfer</text>
<text x="684" y="497" font-size="11" fill="#333" font-family="Liberation Sans" stroke="#fff" stroke-width="2.5" stroke-opacity="0.8" paint-order="stroke">Strand</text>
<text x="719" y="566" font-size="11" fill="#333" font-family="Liberation Sans" stroke="#fff" stroke-width="2.5" stroke-opacity="0.8" paint-order="stroke">Wendtorf</text>
<text x="684" y="424" font-size="11" fill="#2e4f35" font-family="Liberation Sans" stroke="#fff" stroke-width="2.5" stroke-opacity="0.8" paint-order="stroke">Bottsand</text>
<text x="896" y="622" font-size="11" fill="#333" font-family="Liberation Sans" stroke="#fff" stroke-width="2.5" stroke-opacity="0.8" paint-order="stroke">Barsbek</text>
<text x="1024" y="640" font-size="11" fill="#333" font-family="Liberation Sans" stroke="#fff" stroke-width="2.5" stroke-opacity="0.8" paint-order="stroke">Krokau</text>
<text x="1025" y="551" font-size="11" fill="#333" font-family="Liberation Sans" stroke="#fff" stroke-width="2.5" stroke-opacity="0.8" paint-order="stroke">Wisch</text>
<text x="1175" y="440" font-size="11" fill="#333" font-family="Liberation Sans" stroke="#fff" stroke-width="2.5" stroke-opacity="0.8" paint-order="stroke">Holm</text>
<text x="1176" y="386" font-size="11" fill="#333" font-family="Liberation Sans" stroke="#fff" stroke-width="2.5" stroke-opacity="0.8" paint-order="stroke">Kalifornien</text>
<text x="1100" y="355" font-size="11" fill="#3f6b48" font-family="Liberation Sans" stroke="#fff" stroke-width="2.5" stroke-opacity="0.8" paint-order="stroke">Camping-Ferienpark</text>
<text x="1090" y="367" font-size="11" fill="#3f6b48" font-family="Liberation Sans" stroke="#fff" stroke-width="2.5" stroke-opacity="0.8" paint-order="stroke">California Rudolf Olsson</text>
<text x="1192" y="730" font-size="12" fill="#333" font-family="Liberation Sans" stroke="#fff" stroke-width="2.5" stroke-opacity="0.8" paint-order="stroke">Schönberg</text>
<text x="749" y="863" font-size="11" fill="#333" font-family="Liberation Sans" stroke="#fff" stroke-width="2.5" stroke-opacity="0.8" paint-order="stroke">Prasdorf</text>
<text x="1163" y="701" font-size="10" fill="#333" font-family="Liberation Sans" stroke="#fff" stroke-width="2.5" stroke-opacity="0.8" paint-order="stroke">Damm</text>
<text transform="translate(340,268) rotate(-54)" font-size="10" fill="#22325c" font-family="Liberation Sans" stroke="#a6bfdd" stroke-width="3" paint-order="stroke">Kiel, DE - Oslo, NO</text>
<text transform="translate(369,253) rotate(-51)" font-size="10" fill="#22325c" font-family="Liberation Sans" stroke="#a6bfdd" stroke-width="3" paint-order="stroke">Kiel, DE - Göteborg, SE</text>
<text transform="translate(254,517) rotate(-76)" font-size="10" fill="#22325c" font-family="Liberation Sans" stroke="#a6bfdd" stroke-width="3" paint-order="stroke">Oslo, NO - Kiel, DE</text>
<text transform="translate(252,580) rotate(-73)" font-size="10" fill="#22325c" font-family="Liberation Sans" stroke="#a6bfdd" stroke-width="3" paint-order="stroke">Göteborg, SE - Kiel, DE</text>
<text transform="translate(244,691) rotate(-74)" font-size="10" fill="#22325c" font-family="Liberation Sans" stroke="#a6bfdd" stroke-width="3" paint-order="stroke">Kiel, DE - Klaipeda, LT</text>
<text transform="translate(183,791) rotate(-66)" font-size="10" fill="#22325c" font-family="Liberation Sans" stroke="#a6bfdd" stroke-width="3" paint-order="stroke">Kiel, DE - Göteborg, SE</text>
<text transform="translate(372,418) rotate(-25)" font-size="10" fill="#22325c" font-family="Liberation Sans" stroke="#a6bfdd" stroke-width="3" paint-order="stroke">Klaipeda, LT - Kiel, DE</text>
<text transform="translate(591,322) rotate(-23)" font-size="10" fill="#22325c" font-family="Liberation Sans" stroke="#a6bfdd" stroke-width="3" paint-order="stroke">Kiel, DE - Klaipeda, LT</text>
<text transform="translate(872,202) rotate(-15)" font-size="10" fill="#22325c" font-family="Liberation Sans" stroke="#a6bfdd" stroke-width="3" paint-order="stroke">Klaipeda, LT - Kiel, DE</text>
<text transform="translate(1120,144) rotate(-14)" font-size="10" fill="#22325c" font-family="Liberation Sans" stroke="#a6bfdd" stroke-width="3" paint-order="stroke">Kiel, DE - Klaipeda, LT</text>
<text transform="translate(1393,82) rotate(-14)" font-size="10" fill="#22325c" font-family="Liberation Sans" stroke="#a6bfdd" stroke-width="3" paint-order="stroke">Klaipeda, LT - Kiel, DE</text>
<text transform="translate(99,898) rotate(-53)" font-size="10" fill="#22325c" font-family="Liberation Sans" stroke="#a6bfdd" stroke-width="3" paint-order="stroke">Kiel, DE - Oslo, NO</text>
<text transform="translate(80,927) rotate(-46)" font-size="10" fill="#22325c" font-family="Liberation Sans" stroke="#a6bfdd" stroke-width="3" paint-order="stroke">Klaipeda, LT - Kiel, DE</text>
<text transform="translate(68,242) rotate(-38)" font-size="9.5" fill="#333" font-family="Liberation Sans" stroke="#fff" stroke-width="2.2" stroke-opacity="0.85" paint-order="stroke">Bülker Weg</text>
<text transform="translate(16,428) rotate(72)" font-size="10.5" fill="#2a2a2a" font-family="Liberation Sans" stroke="#fbf3a0" stroke-width="2" stroke-opacity="0.6" paint-order="stroke">Fördestraße</text>
<text transform="translate(37,445) rotate(-75)" font-size="9.5" fill="#333" font-family="Liberation Sans" stroke="#fff" stroke-width="2.2" stroke-opacity="0.85" paint-order="stroke">Langenfelde</text>
<text transform="translate(360,697) rotate(-30)" font-size="9.5" fill="#333" font-family="Liberation Sans" stroke="#fff" stroke-width="2.2" stroke-opacity="0.85" paint-order="stroke">Schwanenweg</text>
<text transform="translate(400,610) rotate(75)" font-size="10.5" fill="#2a2a2a" font-family="Liberation Sans" stroke="#fbf3a0" stroke-width="2" stroke-opacity="0.6" paint-order="stroke">Steiner Weg</text>
<text transform="translate(372,585) rotate(-55)" font-size="10.5" fill="#2a2a2a" font-family="Liberation Sans" stroke="#fbf3a0" stroke-width="2" stroke-opacity="0.6" paint-order="stroke">Strandstraße</text>
<text transform="translate(420,540) rotate(-70)" font-size="10.5" fill="#2a2a2a" font-family="Liberation Sans" stroke="#fbf3a0" stroke-width="2" stroke-opacity="0.6" paint-order="stroke">An der Aa</text>
<text transform="translate(488,519) rotate(-8)" font-size="10.5" fill="#2a2a2a" font-family="Liberation Sans" stroke="#fbf3a0" stroke-width="2" stroke-opacity="0.6" paint-order="stroke">Ellembrook</text>
<text transform="translate(636,522) rotate(0)" font-size="10.5" fill="#2a2a2a" font-family="Liberation Sans" stroke="#fbf3a0" stroke-width="2" stroke-opacity="0.6" paint-order="stroke">Ellembrook</text>
<text transform="translate(748,500) rotate(70)" font-size="9.5" fill="#333" font-family="Liberation Sans" stroke="#fff" stroke-width="2.2" stroke-opacity="0.85" paint-order="stroke">Brammersoll</text>
<text transform="translate(530,783) rotate(-5)" font-size="10.5" fill="#2a2a2a" font-family="Liberation Sans" stroke="#fbf3a0" stroke-width="2" stroke-opacity="0.6" paint-order="stroke">Schönberger Straße</text>
<text transform="translate(818,641) rotate(-20)" font-size="10.5" fill="#2a2a2a" font-family="Liberation Sans" stroke="#fbf3a0" stroke-width="2" stroke-opacity="0.6" paint-order="stroke">Mühlenkamp</text>
<text transform="translate(802,800) rotate(-65)" font-size="10.5" fill="#2a2a2a" font-family="Liberation Sans" stroke="#fbf3a0" stroke-width="2" stroke-opacity="0.6" paint-order="stroke">Barsbeker Weg</text>
<text transform="translate(720,770) rotate(62)" font-size="9.5" fill="#333" font-family="Liberation Sans" stroke="#fff" stroke-width="2.2" stroke-opacity="0.85" paint-order="stroke">Lutterbeker Weg</text>
<text transform="translate(970,315) rotate(8)" font-size="10.5" fill="#2a2a2a" font-family="Liberation Sans" stroke="#fbf3a0" stroke-width="2" stroke-opacity="0.6" paint-order="stroke">Strandweg</text>
<text transform="translate(1002,345) rotate(-25)" font-size="9.5" fill="#333" font-family="Liberation Sans" stroke="#fff" stroke-width="2.2" stroke-opacity="0.85" paint-order="stroke">Heideweg</text>
<text transform="translate(1302,447) rotate(22)" font-size="10.5" fill="#2a2a2a" font-family="Liberation Sans" stroke="#fbf3a0" stroke-width="2" stroke-opacity="0.6" paint-order="stroke">Korshagener Redder</text>
<text transform="translate(1035,568) rotate(45)" font-size="10.5" fill="#2a2a2a" font-family="Liberation Sans" stroke="#fbf3a0" stroke-width="2" stroke-opacity="0.6" paint-order="stroke">Schönberger Straße</text>
<text transform="translate(1068,838) rotate(-40)" font-size="10.5" fill="#2a2a2a" font-family="Liberation Sans" stroke="#fbf3a0" stroke-width="2" stroke-opacity="0.6" paint-order="stroke">Schönberger Straße</text>
<text transform="translate(1315,603) rotate(-20)" font-size="10.5" fill="#2a2a2a" font-family="Liberation Sans" stroke="#fbf3a0" stroke-width="2" stroke-opacity="0.6" paint-order="stroke">Strandstraße</text>
<text transform="translate(1226,684) rotate(-46)" font-size="10.5" fill="#2a2a2a" font-family="Liberation Sans" stroke="#fbf3a0" stroke-width="2" stroke-opacity="0.6" paint-order="stroke">Strandstraße</text>
<text transform="translate(1168,760) rotate(10)" font-size="10.5" fill="#2a2a2a" font-family="Liberation Sans" stroke="#fbf3a0" stroke-width="2" stroke-opacity="0.6" paint-order="stroke">Kühlenkamp</text>
<text transform="translate(1310,808) rotate(60)" font-size="10.5" fill="#2a2a2a" font-family="Liberation Sans" stroke="#fbf3a0" stroke-width="2" stroke-opacity="0.6" paint-order="stroke">Im Dorfe</text>
<text transform="translate(1312,637) rotate(0)" font-size="10.5" fill="#2a2a2a" font-family="Liberation Sans" stroke="#fbf3a0" stroke-width="2" stroke-opacity="0.6" paint-order="stroke">L165</text>
<text transform="translate(1140,740) rotate(-88)" font-size="10.5" fill="#2a2a2a" font-family="Liberation Sans" stroke="#fbf3a0" stroke-width="2" stroke-opacity="0.6" paint-order="stroke">L50</text>
<text transform="translate(1207,830) rotate(-80)" font-size="10.5" fill="#2a2a2a" font-family="Liberation Sans" stroke="#fbf3a0" stroke-width="2" stroke-opacity="0.6" paint-order="stroke">L211</text>
<text transform="translate(1015,680) rotate(85)" font-size="10.5" fill="#2a2a2a" font-family="Liberation Sans" stroke="#fbf3a0" stroke-width="2" stroke-opacity="0.6" paint-order="stroke">Hörn</text>
<text transform="translate(1028,452) rotate(75)" font-size="9.5" fill="#333" font-family="Liberation Sans" stroke="#fff" stroke-width="2.2" stroke-opacity="0.85" paint-order="stroke">Moor</text>
<text transform="translate(958,362) rotate(75)" font-size="9.5" fill="#333" font-family="Liberation Sans" stroke="#fff" stroke-width="2.2" stroke-opacity="0.85" paint-order="stroke">Fernwisch</text>
<text transform="translate(1275,400) rotate(20)" font-size="9.5" fill="#333" font-family="Liberation Sans" stroke="#fff" stroke-width="2.2" stroke-opacity="0.85" paint-order="stroke">Seesternweg</text>
<text transform="translate(1187,395) rotate(15)" font-size="9.5" fill="#333" font-family="Liberation Sans" stroke="#fff" stroke-width="2.2" stroke-opacity="0.85" paint-order="stroke">Fernautal</text>
<text transform="translate(1178,450) rotate(55)" font-size="9.5" fill="#333" font-family="Liberation Sans" stroke="#fff" stroke-width="2.2" stroke-opacity="0.85" paint-order="stroke">Bramhorst</text>
<text transform="translate(571,868) rotate(-48)" font-size="9.5" fill="#333" font-family="Liberation Sans" stroke="#fff" stroke-width="2.2" stroke-opacity="0.85" paint-order="stroke">Freienfelde</text>
<text transform="translate(226,857) rotate(-15)" font-size="9.5" fill="#333" font-family="Liberation Sans" stroke="#fff" stroke-width="2.2" stroke-opacity="0.85" paint-order="stroke">Tobringer</text>
<text transform="translate(308,855) rotate(-70)" font-size="9.5" fill="#333" font-family="Liberation Sans" stroke="#fff" stroke-width="2.2" stroke-opacity="0.85" paint-order="stroke">Winkel</text>
<text transform="translate(10,780) rotate(-50)" font-size="10.5" fill="#2a2a2a" font-family="Liberation Sans" stroke="#fbf3a0" stroke-width="2" stroke-opacity="0.6" paint-order="stroke">Strand</text>
<text transform="translate(28,291) rotate(-15)" font-size="9.5" fill="#333" font-family="Liberation Sans" stroke="#fff" stroke-width="2.2" stroke-opacity="0.85" paint-order="stroke">Strandstraße </text>
<text transform="translate(8,348) rotate(62)" font-size="9.5" fill="#333" font-family="Liberation Sans" stroke="#fff" stroke-width="2.2" stroke-opacity="0.85" paint-order="stroke">Drachenbahn</text>
<text transform="translate(952,352) rotate(-80)" font-size="9.5" fill="#333" font-family="Liberation Sans" stroke="#fff" stroke-width="2.2" stroke-opacity="0.85" paint-order="stroke">Alte Heidkate</text>
<text transform="translate(876,322) rotate(-12)" font-size="10.5" fill="#2a2a2a" font-family="Liberation Sans" stroke="#fbf3a0" stroke-width="2" stroke-opacity="0.6" paint-order="stroke">Strandweg</text>
<rect x="989" y="586" width="21" height="13" fill="#f8d33a" stroke="#b89a20" stroke-width="1"/><text x="999.5" y="596" font-size="10" text-anchor="middle" fill="#222" font-family="Liberation Sans">502</text>
<rect x="1127" y="628" width="21" height="13" fill="#f8d33a" stroke="#b89a20" stroke-width="1"/><text x="1137.5" y="638" font-size="10" text-anchor="middle" fill="#222" font-family="Liberation Sans">502</text>
<rect x="793" y="648" width="21" height="13" fill="#f8d33a" stroke="#b89a20" stroke-width="1"/><text x="803.5" y="658" font-size="10" text-anchor="middle" fill="#222" font-family="Liberation Sans">502</text>
<rect x="683" y="729" width="21" height="13" fill="#f8d33a" stroke="#b89a20" stroke-width="1"/><text x="693.5" y="739" font-size="10" text-anchor="middle" fill="#222" font-family="Liberation Sans">502</text>
<rect x="541" y="821" width="21" height="13" fill="#f8d33a" stroke="#b89a20" stroke-width="1"/><text x="551.5" y="831" font-size="10" text-anchor="middle" fill="#222" font-family="Liberation Sans">502</text>
<ellipse cx="1175" cy="341" rx="14" ry="5" fill="#333" opacity="0.45" transform="rotate(-20 1175 341)"/>
<path d="M1160,348 C1156,338 1151,334 1151,329 A9,9 0 1 1 1169,329 C1169,334 1164,338 1160,348Z" fill="#f16d5e" stroke="#9a2e22" stroke-width="0.8"/>
<circle cx="1160" cy="329" r="2.5" fill="#000"/>
<path d="M1144,380 L1149,372 L1154,380Z" fill="none" stroke="#3a5a40" stroke-width="1.2"/>
<path d="M706,403 L702,408 L704,408 L701,412 L711,412 L708,408 L710,408Z" fill="#3c5a3c"/><rect x="705.3" y="412" width="1.4" height="2" fill="#3c5a3c"/>
<line x1="690" y1="446" x2="690" y2="459" stroke="#98b0d0" stroke-width="0.8"/>
<line x1="695" y1="446" x2="695" y2="459" stroke="#98b0d0" stroke-width="0.8"/>
<line x1="700" y1="446" x2="700" y2="459" stroke="#98b0d0" stroke-width="0.8"/>
<line x1="705" y1="446" x2="705" y2="459" stroke="#98b0d0" stroke-width="0.8"/>
<line x1="710" y1="446" x2="710" y2="459" stroke="#98b0d0" stroke-width="0.8"/>
<line x1="715" y1="446" x2="715" y2="459" stroke="#98b0d0" stroke-width="0.8"/>
<line x1="720" y1="446" x2="720" y2="459" stroke="#98b0d0" stroke-width="0.8"/>
<line x1="725" y1="446" x2="725" y2="459" stroke="#98b0d0" stroke-width="0.8"/>
<line x1="730" y1="446" x2="730" y2="459" stroke="#98b0d0" stroke-width="0.8"/>
<line x1="735" y1="446" x2="735" y2="459" stroke="#98b0d0" stroke-width="0.8"/>
<line x1="740" y1="446" x2="740" y2="459" stroke="#98b0d0" stroke-width="0.8"/>
<line x1="745" y1="446" x2="745" y2="459" stroke="#98b0d0" stroke-width="0.8"/>
</svg></div></div>
<div class="abs" style="left:0;top:45px;width:2px;height:839px;background:#6b6b6b"></div>
<div class="abs" style="left:17px;top:74px;width:4px;height:180px;background:#fff;border:1px solid #9a9a9a"></div>
<div class="abs" style="left:10px;top:57px;width:19px;height:18px;background:#fff;border:1px solid #a8a8a8;border-radius:3px;box-shadow:1px 1px 2px rgba(0,0,0,0.25)"><svg class="abs" style="left:3px;top:3px" width="12" height="12"><path d="M6,2 V10 M2,6 H10" stroke="#777" stroke-width="2"/></svg></div>
<div class="abs" style="left:10px;top:137px;width:19px;height:14px;background:#fff;border:1px solid #a8a8a8;border-radius:3px;box-shadow:1px 1px 2px rgba(0,0,0,0.25)"><svg class="abs" style="left:3px;top:1px" width="12" height="12"><path d="M2,6 H10" stroke="#777" stroke-width="2"/></svg></div>
<div class="abs" style="left:10px;top:253px;width:19px;height:18px;background:#fff;border:1px solid #a8a8a8;border-radius:3px;box-shadow:1px 1px 2px rgba(0,0,0,0.25)"><svg class="abs" style="left:3px;top:3px" width="12" height="12"><path d="M2,6 H10" stroke="#777" stroke-width="2"/></svg></div>
<div class="abs" style="left:10px;top:287px;width:19px;height:18px;background:#fff;border:1px solid #a8a8a8;border-radius:3px;box-shadow:1px 1px 2px rgba(0,0,0,0.25)"><svg class="abs" style="left:2px;top:1px" width="15" height="15"><rect x="2" y="2" width="8" height="8" fill="none" stroke="#3355aa" stroke-dasharray="1.5,1"/><path d="M9,9 L13,13" stroke="#224" stroke-width="2"/></svg></div>
<div class="abs" style="left:10px;top:306px;width:19px;height:18px;background:#fff;border:1px solid #a8a8a8;border-radius:3px;box-shadow:1px 1px 2px rgba(0,0,0,0.25)"><svg class="abs" style="left:2px;top:1px" width="15" height="15"><path d="M2,3 H9 M2,6 H9 M2,9 H8" stroke="#3355aa" stroke-width="1.2"/><path d="M9,9 L13,13" stroke="#224" stroke-width="2"/></svg></div>
<div class="abs" style="left:1318px;top:50px;width:85px;height:19px;background:#fff;border:1px solid #a0a0a0;box-shadow:1px 1px 2px rgba(0,0,0,0.35)"></div>
<div class="abs" style="left:1325px;top:52px;font-size:12px;font-weight:bold;color:#000">Karte</div>
<svg class="abs" style="left:1385px;top:56px" width="10" height="6"><path d="M1,1 H9 L5,5Z" fill="#777"/></svg>
<div class="abs" style="left:5px;top:855px;font-family:'Liberation Serif',serif;font-size:19px;color:#fff;text-shadow:0 0 2px #666, 1px 1px 1px #555;letter-spacing:-0.5px">Google</div>
<svg class="abs" style="left:70px;top:850px" width="100" height="34"><path d="M3,6 V17.5 H93 V6" fill="none" stroke="#fff" stroke-width="4"/><path d="M3,17.5 V29.5 M58,17.5 V29.5" fill="none" stroke="#fff" stroke-width="4"/><path d="M3,6 V17.5 H93 V6" fill="none" stroke="#000" stroke-width="2"/><path d="M3,17.5 V29.5 M58,17.5 V29.5" fill="none" stroke="#000" stroke-width="2"/></svg>
<div class="abs" style="left:79px;top:853px;font-size:10.5px;color:#000">1 km</div>
<div class="abs" style="left:79px;top:869.5px;font-size:10.5px;color:#000">2000 ft</div>
<div class="abs" style="left:910px;top:868px;font-size:10px;color:#444;white-space:nowrap;background:rgba(245,245,245,0.5)">Kartendaten ©2013 GeoBasis-DE/BKG (©2009), Google - <u>Nutzungsbedingungen</u></div>
<div class="abs" style="left:1272px;top:866px;width:135px;height:17px;background:#fff;border:1px solid #ddd"></div>
<div class="abs" style="left:1276px;top:869px;font-size:8.4px;font-weight:bold;color:#444;white-space:nowrap">Fehler bei Google Maps melden</div>
<div class="abs" style="left:1408px;top:45px;width:9px;height:839px;background:#f0f0f0"></div>
<svg class="abs" style="left:1408px;top:45px" width="9" height="30"><path d="M8,3 L2,8.5 L8,14Z" fill="#000"/><path d="M2,15 L8,20.5 L2,26Z" fill="#000"/></svg>
<div class="abs" style="left:1417px;top:45px;width:1px;height:839px;background:#8a8a8a"></div>
<div class="abs" style="left:1418px;top:45px;width:502px;height:839px;background:#f0f0f0"></div>
<div class="abs" style="left:1419px;top:65.5px;width:497px;height:817px;border:1px solid #898c95;background:#f0f0f0"></div>
<div class="abs" style="left:1493px;top:48px;width:74px;height:19px;border:1px solid #898c95;border-bottom:none;background:linear-gradient(#f2f2f2,#dcdcdc)"></div>
<div class="abs" style="left:1498px;top:51px;font-size:11px">Durchstöbern</div>
<div class="abs" style="left:1419px;top:45px;width:75px;height:22px;border:1px solid #898c95;border-bottom:none;background:#fff"></div>
<div class="abs" style="left:1424px;top:49px;font-size:11px">Konvertieren</div>
<div class="abs" style="left:1422px;top:74px;font-size:11px;white-space:nowrap;">Format:</div>
<div class="abs" style="left:1497px;top:74px;font-size:11px;white-space:nowrap;">GPS Exchange Format 1.1 (*.gpx)</div>
<div class="abs" style="left:1422px;top:93px;font-size:11px;white-space:nowrap;">Inhalt:</div>
<div class="abs" style="left:1498px;top:93px;font-size:11px;white-space:nowrap;">1 Track;</div>
<div class="abs" style="left:1422px;top:115px;font-size:11px;white-space:nowrap;">Positionsliste:</div>
<div class="abs" style="left:1498px;top:112px;width:413px;height:19px;border:1px solid #c2c2c2;border-radius:2px;background:linear-gradient(#f2f2f2,#e8e8e8)"></div>
<div class="abs" style="left:1502px;top:115px;font-size:11px;white-space:nowrap;color:#838383">15.08.2012 12:26 (Track)</div>
<svg class="abs" style="left:1896px;top:118px" width="10" height="8"><path d="M1,2 L9,2 L5,6Z" fill="#a8a8a8"/></svg>
<div class="abs" style="left:1499px;top:137px;width:47px;height:23px;border:1px solid #707070;border-radius:3px;background:linear-gradient(#f6f6f6 0%,#ededed 45%,#dddddd 46%,#d1d1d1 100%)"><svg class="abs" style="left:13px;top:2px" width="20" height="17"><rect x="1" y="2" width="13" height="11" fill="#3a72d8" stroke="#1c3e9e"/><rect x="2" y="6" width="11" height="6" fill="#e6eefc"/><path d="M13,7 L14.8,10.5 L18.5,10.8 L15.7,13.2 L16.6,16.8 L13,14.8 L9.4,16.8 L10.3,13.2 L7.5,10.8 L11.2,10.5Z" fill="#f6c232" stroke="#c98a10" stroke-width="0.8"/></svg></div>
<div class="abs" style="left:1558px;top:137px;width:47px;height:23px;border:1px solid #707070;border-radius:3px;background:linear-gradient(#f6f6f6 0%,#ededed 45%,#dddddd 46%,#d1d1d1 100%)"><svg class="abs" style="left:14px;top:2px" width="20" height="17"><path d="M3,16 L5,11 L14,2 L17,5 L8,14Z" fill="#f0b43c" stroke="#b07a20" stroke-width="0.8"/><path d="M14,2 L17,5 L18,4 L15,1Z" fill="#d94a3a"/><ellipse cx="11" cy="15" rx="6" ry="1.5" fill="#9a9a9a" opacity="0.5"/></svg></div>
<div class="abs" style="left:1617px;top:137px;width:47px;height:23px;border:1px solid #adadad;border-radius:3px;background:linear-gradient(#f4f4f4,#f4f4f4)"><svg class="abs" style="left:15px;top:4px" width="16" height="14"><path d="M3,2 L13,12 M13,2 L3,12" stroke="#888" stroke-width="3.2" stroke-linecap="round"/></svg></div>
<div class="abs" style="left:1787px;top:142px;font-size:11px;white-space:nowrap;">Typ:</div>
<div class="abs" style="left:1819px;top:139px;width:93px;height:19px;border:1px solid #a0a0a0;border-radius:2px;background:linear-gradient(#f4f4f4,#e2e2e2)"></div>
<div class="abs" style="left:1822px;top:142px;font-size:11px;white-space:nowrap;">Track</div>
<svg class="abs" style="left:1897px;top:144px" width="10" height="8"><path d="M1,2 L9,2 L5,6.5Z" fill="#000"/></svg>
<div class="abs" style="left:1422px;top:167px;font-size:11px;white-space:nowrap;">Positionszahl:</div>
<div class="abs" style="left:1498px;top:167px;font-size:11px;white-space:nowrap;">21590</div>
<div class="abs" style="left:1569px;top:167px;font-size:11px;white-space:nowrap;">Länge:</div>
<div class="abs" style="left:1661px;top:167px;font-size:11px;white-space:nowrap;">112.9 Km</div>
<div class="abs" style="left:1747px;top:167px;font-size:11px;white-space:nowrap;">Dauer:</div>
<div class="abs" style="left:1831px;top:167px;font-size:11px;white-space:nowrap;">194:15:33</div>
<div class="abs" style="left:1569px;top:186px;font-size:11px;white-space:nowrap;">Gesamtsteigung:</div>
<div class="abs" style="left:1661px;top:186px;font-size:11px;white-space:nowrap;">2864 m</div>
<div class="abs" style="left:1747px;top:186px;font-size:11px;white-space:nowrap;">Gesamtgefälle:</div>
<div class="abs" style="left:1831px;top:186px;font-size:11px;white-space:nowrap;">2839 m</div>
<div class="abs" style="left:1422px;top:204px;width:493px;height:638px;border:1px solid #828790;background:#fff"></div>
<div class="abs" style="left:1423px;top:205px;width:491px;height:16px;background:#f0f0f0"></div>
<div class="abs" style="left:1424px;top:207px;font-size:11px;white-space:nowrap;">Beschreibung</div>
<div class="abs" style="left:1499px;top:207px;font-size:11px;white-space:nowrap;">Zeit</div>
<div class="abs" style="left:1597px;top:207px;font-size:11px;white-space:nowrap;">Distanz</div>
<div class="abs" style="left:1650px;top:207px;font-size:11px;white-space:nowrap;">Steig...</div>
<div class="abs" style="left:1689px;top:207px;font-size:11px;white-space:nowrap;">Länge</div>
<div class="abs" style="left:1772px;top:207px;font-size:11px;white-space:nowrap;">Breite</div>
<div class="abs" style="left:1855px;top:207px;font-size:11px;white-space:nowrap;">Höhe</div>
<div class="abs" style="left:1424.5px;top:219.0px;font-size:10.7px;color:#000;white-space:nowrap;clip-path:inset(2.0px 0 0 0)">Position 4655</div>
<div class="abs" style="right:325.5px;top:219.0px;font-size:10.7px;color:#000;white-space:nowrap;letter-spacing:0.2px;clip-path:inset(2.0px 0 0 0)">15.08.12 15:14:52</div>
<div class="abs" style="right:273.0px;top:219.0px;font-size:10.7px;color:#000;white-space:nowrap;word-spacing:-0.6px;clip-path:inset(2.0px 0 0 0)">32.5 Km</div>
<div class="abs" style="left:1652.5px;top:219.0px;font-size:10.7px;color:#000;white-space:nowrap;word-spacing:-0.8px;clip-path:inset(2.0px 0 0 0)">1034 m</div>
<div class="abs" style="right:150.9000000000001px;top:219.0px;font-size:10.7px;color:#000;white-space:nowrap;clip-path:inset(2.0px 0 0 0)">10.359213</div>
<div class="abs" style="right:68.0px;top:219.0px;font-size:10.7px;color:#000;white-space:nowrap;clip-path:inset(2.0px 0 0 0)">54.430796</div>
<div class="abs" style="right:28.5px;top:219.0px;font-size:10.7px;color:#000;white-space:nowrap;word-spacing:-0.6px;clip-path:inset(2.0px 0 0 0)">2 m</div>
<div class="abs" style="left:1423px;top:233.5px;width:73.5px;height:15.0px;background:#e8e8e8"></div>
<div class="abs" style="left:1498px;top:233.5px;width:98px;height:15.0px;background:#e8e8e8"></div>
<div class="abs" style="left:1597px;top:233.5px;width:51.5px;height:15.0px;background:#e8e8e8"></div>
<div class="abs" style="left:1650px;top:233.5px;width:37.5px;height:15.0px;background:#e8e8e8"></div>
<div class="abs" style="left:1689px;top:233.5px;width:81.59999999999991px;height:15.0px;background:#e8e8e8"></div>
<div class="abs" style="left:1772px;top:233.5px;width:81.5px;height:15.0px;background:#e8e8e8"></div>
<div class="abs" style="left:1854.8px;top:233.5px;width:38.200000000000045px;height:15.0px;background:#e8e8e8"></div>
<div class="abs" style="left:1424.5px;top:235.0px;font-size:10.7px;color:#000;white-space:nowrap;clip-path:inset(0px 0 0 0)">Position 4656</div>
<div class="abs" style="right:325.5px;top:235.0px;font-size:10.7px;color:#000;white-space:nowrap;letter-spacing:0.2px;clip-path:inset(0px 0 0 0)">15.08.12 15:14:54</div>
<div class="abs" style="right:273.0px;top:235.0px;font-size:10.7px;color:#000;white-space:nowrap;word-spacing:-0.6px;clip-path:inset(0px 0 0 0)">32.6 Km</div>
<div class="abs" style="left:1652.5px;top:235.0px;font-size:10.7px;color:#000;white-space:nowrap;word-spacing:-0.8px;clip-path:inset(0px 0 0 0)">1034 m</div>
<div class="abs" style="right:150.9000000000001px;top:235.0px;font-size:10.7px;color:#000;white-space:nowrap;clip-path:inset(0px 0 0 0)">10.359345</div>
<div class="abs" style="right:68.0px;top:235.0px;font-size:10.7px;color:#000;white-space:nowrap;clip-path:inset(0px 0 0 0)">54.430775</div>
<div class="abs" style="right:28.5px;top:235.0px;font-size:10.7px;color:#000;white-space:nowrap;word-spacing:-0.6px;clip-path:inset(0px 0 0 0)">2 m</div>
<div class="abs" style="left:1424.5px;top:251.0px;font-size:10.7px;color:#000;white-space:nowrap;clip-path:inset(0px 0 0 0)">Position 4657</div>
<div class="abs" style="right:325.5px;top:251.0px;font-size:10.7px;color:#000;white-space:nowrap;letter-spacing:0.2px;clip-path:inset(0px 0 0 0)">15.08.12 15:14:56</div>
<div class="abs" style="right:273.0px;top:251.0px;font-size:10.7px;color:#000;white-space:nowrap;word-spacing:-0.6px;clip-path:inset(0px 0 0 0)">32.6 Km</div>
<div class="abs" style="left:1652.5px;top:251.0px;font-size:10.7px;color:#000;white-space:nowrap;word-spacing:-0.8px;clip-path:inset(0px 0 0 0)">1034 m</div>
<div class="abs" style="right:150.9000000000001px;top:251.0px;font-size:10.7px;color:#000;white-space:nowrap;clip-path:inset(0px 0 0 0)">10.359479</div>
<div class="abs" style="right:68.0px;top:251.0px;font-size:10.7px;color:#000;white-space:nowrap;clip-path:inset(0px 0 0 0)">54.430753</div>
<div class="abs" style="right:28.5px;top:251.0px;font-size:10.7px;color:#000;white-space:nowrap;word-spacing:-0.6px;clip-path:inset(0px 0 0 0)">2 m</div>
<div class="abs" style="left:1423px;top:265.5px;width:73.5px;height:15.0px;background:#e8e8e8"></div>
<div class="abs" style="left:1498px;top:265.5px;width:98px;height:15.0px;background:#e8e8e8"></div>
<div class="abs" style="left:1597px;top:265.5px;width:51.5px;height:15.0px;background:#e8e8e8"></div>
<div class="abs" style="left:1650px;top:265.5px;width:37.5px;height:15.0px;background:#e8e8e8"></div>
<div class="abs" style="left:1689px;top:265.5px;width:81.59999999999991px;height:15.0px;background:#e8e8e8"></div>
<div class="abs" style="left:1772px;top:265.5px;width:81.5px;height:15.0px;background:#e8e8e8"></div>
<div class="abs" style="left:1854.8px;top:265.5px;width:38.200000000000045px;height:15.0px;background:#e8e8e8"></div>
<div class="abs" style="left:1424.5px;top:267.0px;font-size:10.7px;color:#000;white-space:nowrap;clip-path:inset(0px 0 0 0)">Position 4658</div>
<div class="abs" style="right:325.5px;top:267.0px;font-size:10.7px;color:#000;white-space:nowrap;letter-spacing:0.2px;clip-path:inset(0px 0 0 0)">15.08.12 15:14:58</div>
<div class="abs" style="right:273.0px;top:267.0px;font-size:10.7px;color:#000;white-space:nowrap;word-spacing:-0.6px;clip-path:inset(0px 0 0 0)">32.6 Km</div>
<div class="abs" style="left:1652.5px;top:267.0px;font-size:10.7px;color:#000;white-space:nowrap;word-spacing:-0.8px;clip-path:inset(0px 0 0 0)">1034 m</div>
<div class="abs" style="right:150.9000000000001px;top:267.0px;font-size:10.7px;color:#000;white-space:nowrap;clip-path:inset(0px 0 0 0)">10.359613</div>
<div class="abs" style="right:68.0px;top:267.0px;font-size:10.7px;color:#000;white-space:nowrap;clip-path:inset(0px 0 0 0)">54.430733</div>
<div class="abs" style="right:28.5px;top:267.0px;font-size:10.7px;color:#000;white-space:nowrap;word-spacing:-0.6px;clip-path:inset(0px 0 0 0)">2 m</div>
<div class="abs" style="left:1424.5px;top:283.0px;font-size:10.7px;color:#000;white-space:nowrap;clip-path:inset(0px 0 0 0)">Position 4659</div>
<div class="abs" style="right:325.5px;top:283.0px;font-size:10.7px;color:#000;white-space:nowrap;letter-spacing:0.2px;clip-path:inset(0px 0 0 0)">15.08.12 15:15:00</div>
<div class="abs" style="right:273.0px;top:283.0px;font-size:10.7px;color:#000;white-space:nowrap;word-spacing:-0.6px;clip-path:inset(0px 0 0 0)">32.6 Km</div>
<div class="abs" style="left:1652.5px;top:283.0px;font-size:10.7px;color:#000;white-space:nowrap;word-spacing:-0.8px;clip-path:inset(0px 0 0 0)">1034 m</div>
<div class="abs" style="right:150.9000000000001px;top:283.0px;font-size:10.7px;color:#000;white-space:nowrap;clip-path:inset(0px 0 0 0)">10.35975</div>
<div class="abs" style="right:68.0px;top:283.0px;font-size:10.7px;color:#000;white-space:nowrap;clip-path:inset(0px 0 0 0)">54.43071</div>
<div class="abs" style="right:28.5px;top:283.0px;font-size:10.7px;color:#000;white-space:nowrap;word-spacing:-0.6px;clip-path:inset(0px 0 0 0)">2 m</div>
<div class="abs" style="left:1423px;top:297.5px;width:73.5px;height:15.0px;background:#e8e8e8"></div>
<div class="abs" style="left:1498px;top:297.5px;width:98px;height:15.0px;background:#e8e8e8"></div>
<div class="abs" style="left:1597px;top:297.5px;width:51.5px;height:15.0px;background:#e8e8e8"></div>
<div class="abs" style="left:1650px;top:297.5px;width:37.5px;height:15.0px;background:#e8e8e8"></div>
<div class="abs" style="left:1689px;top:297.5px;width:81.59999999999991px;height:15.0px;background:#e8e8e8"></div>
<div class="abs" style="left:1772px;top:297.5px;width:81.5px;height:15.0px;background:#e8e8e8"></div>
<div class="abs" style="left:1854.8px;top:297.5px;width:38.200000000000045px;height:15.0px;background:#e8e8e8"></div>
<div class="abs" style="left:1424.5px;top:299.0px;font-size:10.7px;color:#000;white-space:nowrap;clip-path:inset(0px 0 0 0)">Position 4660</div>
<div class="abs" style="right:325.5px;top:299.0px;font-size:10.7px;color:#000;white-space:nowrap;letter-spacing:0.2px;clip-path:inset(0px 0 0 0)">15.08.12 15:15:02</div>
<div class="abs" style="right:273.0px;top:299.0px;font-size:10.7px;color:#000;white-space:nowrap;word-spacing:-0.6px;clip-path:inset(0px 0 0 0)">32.6 Km</div>
<div class="abs" style="left:1652.5px;top:299.0px;font-size:10.7px;color:#000;white-space:nowrap;word-spacing:-0.8px;clip-path:inset(0px 0 0 0)">1034 m</div>
<div class="abs" style="right:150.9000000000001px;top:299.0px;font-size:10.7px;color:#000;white-space:nowrap;clip-path:inset(0px 0 0 0)">10.359884</div>
<div class="abs" style="right:68.0px;top:299.0px;font-size:10.7px;color:#000;white-space:nowrap;clip-path:inset(0px 0 0 0)">54.430682</div>
<div class="abs" style="right:28.5px;top:299.0px;font-size:10.7px;color:#000;white-space:nowrap;word-spacing:-0.6px;clip-path:inset(0px 0 0 0)">2 m</div>
<div class="abs" style="left:1424.5px;top:315.0px;font-size:10.7px;color:#000;white-space:nowrap;clip-path:inset(0px 0 0 0)">Position 4661</div>
<div class="abs" style="right:325.5px;top:315.0px;font-size:10.7px;color:#000;white-space:nowrap;letter-spacing:0.2px;clip-path:inset(0px 0 0 0)">15.08.12 15:15:04</div>
<div class="abs" style="right:273.0px;top:315.0px;font-size:10.7px;color:#000;white-space:nowrap;word-spacing:-0.6px;clip-path:inset(0px 0 0 0)">32.6 Km</div>
<div class="abs" style="left:1652.5px;top:315.0px;font-size:10.7px;color:#000;white-space:nowrap;word-spacing:-0.8px;clip-path:inset(0px 0 0 0)">1034 m</div>
<div class="abs" style="right:150.9000000000001px;top:315.0px;font-size:10.7px;color:#000;white-space:nowrap;clip-path:inset(0px 0 0 0)">10.360009</div>
<div class="abs" style="right:68.0px;top:315.0px;font-size:10.7px;color:#000;white-space:nowrap;clip-path:inset(0px 0 0 0)">54.430656</div>
<div class="abs" style="right:28.5px;top:315.0px;font-size:10.7px;color:#000;white-space:nowrap;word-spacing:-0.6px;clip-path:inset(0px 0 0 0)">2 m</div>
<div class="abs" style="left:1423px;top:329.5px;width:73.5px;height:15.0px;background:#e8e8e8"></div>
<div class="abs" style="left:1498px;top:329.5px;width:98px;height:15.0px;background:#e8e8e8"></div>
<div class="abs" style="left:1597px;top:329.5px;width:51.5px;height:15.0px;background:#e8e8e8"></div>
<div class="abs" style="left:1650px;top:329.5px;width:37.5px;height:15.0px;background:#e8e8e8"></div>
<div class="abs" style="left:1689px;top:329.5px;width:81.59999999999991px;height:15.0px;background:#e8e8e8"></div>
<div class="abs" style="left:1772px;top:329.5px;width:81.5px;height:15.0px;background:#e8e8e8"></div>
<div class="abs" style="left:1854.8px;top:329.5px;width:38.200000000000045px;height:15.0px;background:#e8e8e8"></div>
<div class="abs" style="left:1424.5px;top:331.0px;font-size:10.7px;color:#000;white-space:nowrap;clip-path:inset(0px 0 0 0)">Position 4662</div>
<div class="abs" style="right:325.5px;top:331.0px;font-size:10.7px;color:#000;white-space:nowrap;letter-spacing:0.2px;clip-path:inset(0px 0 0 0)">15.08.12 15:15:06</div>
<div class="abs" style="right:273.0px;top:331.0px;font-size:10.7px;color:#000;white-space:nowrap;word-spacing:-0.6px;clip-path:inset(0px 0 0 0)">32.6 Km</div>
<div class="abs" style="left:1652.5px;top:331.0px;font-size:10.7px;color:#000;white-space:nowrap;word-spacing:-0.8px;clip-path:inset(0px 0 0 0)">1034 m</div>
<div class="abs" style="right:150.9000000000001px;top:331.0px;font-size:10.7px;color:#000;white-space:nowrap;clip-path:inset(0px 0 0 0)">10.360123</div>
<div class="abs" style="right:68.0px;top:331.0px;font-size:10.7px;color:#000;white-space:nowrap;clip-path:inset(0px 0 0 0)">54.430633</div>
<div class="abs" style="right:28.5px;top:331.0px;font-size:10.7px;color:#000;white-space:nowrap;word-spacing:-0.6px;clip-path:inset(0px 0 0 0)">2 m</div>
<div class="abs" style="left:1424.5px;top:347.0px;font-size:10.7px;color:#000;white-space:nowrap;clip-path:inset(0px 0 0 0)">Position 4663</div>
<div class="abs" style="right:325.5px;top:347.0px;font-size:10.7px;color:#000;white-space:nowrap;letter-spacing:0.2px;clip-path:inset(0px 0 0 0)">15.08.12 15:15:08</div>
<div class="abs" style="right:273.0px;top:347.0px;font-size:10.7px;color:#000;white-space:nowrap;word-spacing:-0.6px;clip-path:inset(0px 0 0 0)">32.6 Km</div>
<div class="abs" style="left:1652.5px;top:347.0px;font-size:10.7px;color:#000;white-space:nowrap;word-spacing:-0.8px;clip-path:inset(0px 0 0 0)">1034 m</div>
<div class="abs" style="right:150.9000000000001px;top:347.0px;font-size:10.7px;color:#000;white-space:nowrap;clip-path:inset(0px 0 0 0)">10.360227</div>
<div class="abs" style="right:68.0px;top:347.0px;font-size:10.7px;color:#000;white-space:nowrap;clip-path:inset(0px 0 0 0)">54.430611</div>
<div class="abs" style="right:28.5px;top:347.0px;font-size:10.7px;color:#000;white-space:nowrap;word-spacing:-0.6px;clip-path:inset(0px 0 0 0)">2 m</div>
<div class="abs" style="left:1423px;top:361.5px;width:73.5px;height:15.0px;background:#e8e8e8"></div>
<div class="abs" style="left:1498px;top:361.5px;width:98px;height:15.0px;background:#e8e8e8"></div>
<div class="abs" style="left:1597px;top:361.5px;width:51.5px;height:15.0px;background:#e8e8e8"></div>
<div class="abs" style="left:1650px;top:361.5px;width:37.5px;height:15.0px;background:#e8e8e8"></div>
<div class="abs" style="left:1689px;top:361.5px;width:81.59999999999991px;height:15.0px;background:#e8e8e8"></div>
<div class="abs" style="left:1772px;top:361.5px;width:81.5px;height:15.0px;background:#e8e8e8"></div>
<div class="abs" style="left:1854.8px;top:361.5px;width:38.200000000000045px;height:15.0px;background:#e8e8e8"></div>
<div class="abs" style="left:1424.5px;top:363.0px;font-size:10.7px;color:#000;white-space:nowrap;clip-path:inset(0px 0 0 0)">Position 4664</div>
<div class="abs" style="right:325.5px;top:363.0px;font-size:10.7px;color:#000;white-space:nowrap;letter-spacing:0.2px;clip-path:inset(0px 0 0 0)">15.08.12 15:15:10</div>
<div class="abs" style="right:273.0px;top:363.0px;font-size:10.7px;color:#000;white-space:nowrap;word-spacing:-0.6px;clip-path:inset(0px 0 0 0)">32.6 Km</div>
<div class="abs" style="left:1652.5px;top:363.0px;font-size:10.7px;color:#000;white-space:nowrap;word-spacing:-0.8px;clip-path:inset(0px 0 0 0)">1034 m</div>
<div class="abs" style="right:150.9000000000001px;top:363.0px;font-size:10.7px;color:#000;white-space:nowrap;clip-path:inset(0px 0 0 0)">10.360323</div>
<div class="abs" style="right:68.0px;top:363.0px;font-size:10.7px;color:#000;white-space:nowrap;clip-path:inset(0px 0 0 0)">54.430595</div>
<div class="abs" style="right:28.5px;top:363.0px;font-size:10.7px;color:#000;white-space:nowrap;word-spacing:-0.6px;clip-path:inset(0px 0 0 0)">2 m</div>
<div class="abs" style="left:1424.5px;top:379.0px;font-size:10.7px;color:#000;white-space:nowrap;clip-path:inset(0px 0 0 0)">Position 4665</div>
<div class="abs" style="right:325.5px;top:379.0px;font-size:10.7px;color:#000;white-space:nowrap;letter-spacing:0.2px;clip-path:inset(0px 0 0 0)">15.08.12 15:15:12</div>
<div class="abs" style="right:273.0px;top:379.0px;font-size:10.7px;color:#000;white-space:nowrap;word-spacing:-0.6px;clip-path:inset(0px 0 0 0)">32.6 Km</div>
<div class="abs" style="left:1652.5px;top:379.0px;font-size:10.7px;color:#000;white-space:nowrap;word-spacing:-0.8px;clip-path:inset(0px 0 0 0)">1034 m</div>
<div class="abs" style="right:150.9000000000001px;top:379.0px;font-size:10.7px;color:#000;white-space:nowrap;clip-path:inset(0px 0 0 0)">10.360414</div>
<div class="abs" style="right:68.0px;top:379.0px;font-size:10.7px;color:#000;white-space:nowrap;clip-path:inset(0px 0 0 0)">54.43058</div>
<div class="abs" style="right:28.5px;top:379.0px;font-size:10.7px;color:#000;white-space:nowrap;word-spacing:-0.6px;clip-path:inset(0px 0 0 0)">1 m</div>
<div class="abs" style="left:1423px;top:393.5px;width:73.5px;height:15.0px;background:#e8e8e8"></div>
<div class="abs" style="left:1498px;top:393.5px;width:98px;height:15.0px;background:#e8e8e8"></div>
<div class="abs" style="left:1597px;top:393.5px;width:51.5px;height:15.0px;background:#e8e8e8"></div>
<div class="abs" style="left:1650px;top:393.5px;width:37.5px;height:15.0px;background:#e8e8e8"></div>
<div class="abs" style="left:1689px;top:393.5px;width:81.59999999999991px;height:15.0px;background:#e8e8e8"></div>
<div class="abs" style="left:1772px;top:393.5px;width:81.5px;height:15.0px;background:#e8e8e8"></div>
<div class="abs" style="left:1854.8px;top:393.5px;width:38.200000000000045px;height:15.0px;background:#e8e8e8"></div>
<div class="abs" style="left:1424.5px;top:395.0px;font-size:10.7px;color:#000;white-space:nowrap;clip-path:inset(0px 0 0 0)">Position 4666</div>
<div class="abs" style="right:325.5px;top:395.0px;font-size:10.7px;color:#000;white-space:nowrap;letter-spacing:0.2px;clip-path:inset(0px 0 0 0)">15.08.12 15:15:14</div>
<div class="abs" style="right:273.0px;top:395.0px;font-size:10.7px;color:#000;white-space:nowrap;word-spacing:-0.6px;clip-path:inset(0px 0 0 0)">32.6 Km</div>
<div class="abs" style="left:1652.5px;top:395.0px;font-size:10.7px;color:#000;white-space:nowrap;word-spacing:-0.8px;clip-path:inset(0px 0 0 0)">1034 m</div>
<div class="abs" style="right:150.9000000000001px;top:395.0px;font-size:10.7px;color:#000;white-space:nowrap;clip-path:inset(0px 0 0 0)">10.360504</div>
<div class="abs" style="right:68.0px;top:395.0px;font-size:10.7px;color:#000;white-space:nowrap;clip-path:inset(0px 0 0 0)">54.430564</div>
<div class="abs" style="right:28.5px;top:395.0px;font-size:10.7px;color:#000;white-space:nowrap;word-spacing:-0.6px;clip-path:inset(0px 0 0 0)">1 m</div>
<div class="abs" style="left:1424.5px;top:411.0px;font-size:10.7px;color:#000;white-space:nowrap;clip-path:inset(0px 0 0 0)">Position 4667</div>
<div class="abs" style="right:325.5px;top:411.0px;font-size:10.7px;color:#000;white-space:nowrap;letter-spacing:0.2px;clip-path:inset(0px 0 0 0)">15.08.12 15:15:16</div>
<div class="abs" style="right:273.0px;top:411.0px;font-size:10.7px;color:#000;white-space:nowrap;word-spacing:-0.6px;clip-path:inset(0px 0 0 0)">32.6 Km</div>
<div class="abs" style="left:1652.5px;top:411.0px;font-size:10.7px;color:#000;white-space:nowrap;word-spacing:-0.8px;clip-path:inset(0px 0 0 0)">1034 m</div>
<div class="abs" style="right:150.9000000000001px;top:411.0px;font-size:10.7px;color:#000;white-space:nowrap;clip-path:inset(0px 0 0 0)">10.3606</div>
<div class="abs" style="right:68.0px;top:411.0px;font-size:10.7px;color:#000;white-space:nowrap;clip-path:inset(0px 0 0 0)">54.430544</div>
<div class="abs" style="right:28.5px;top:411.0px;font-size:10.7px;color:#000;white-space:nowrap;word-spacing:-0.6px;clip-path:inset(0px 0 0 0)">1 m</div>
<div class="abs" style="left:1423px;top:425.5px;width:73.5px;height:15.0px;background:#e8e8e8"></div>
<div class="abs" style="left:1498px;top:425.5px;width:98px;height:15.0px;background:#e8e8e8"></div>
<div class="abs" style="left:1597px;top:425.5px;width:51.5px;height:15.0px;background:#e8e8e8"></div>
<div class="abs" style="left:1650px;top:425.5px;width:37.5px;height:15.0px;background:#e8e8e8"></div>
<div class="abs" style="left:1689px;top:425.5px;width:81.59999999999991px;height:15.0px;background:#e8e8e8"></div>
<div class="abs" style="left:1772px;top:425.5px;width:81.5px;height:15.0px;background:#e8e8e8"></div>
<div class="abs" style="left:1854.8px;top:425.5px;width:38.200000000000045px;height:15.0px;background:#e8e8e8"></div>
<div class="abs" style="left:1424.5px;top:427.0px;font-size:10.7px;color:#000;white-space:nowrap;clip-path:inset(0px 0 0 0)">Position 4668</div>
<div class="abs" style="right:325.5px;top:427.0px;font-size:10.7px;color:#000;white-space:nowrap;letter-spacing:0.2px;clip-path:inset(0px 0 0 0)">15.08.12 15:15:18</div>
<div class="abs" style="right:273.0px;top:427.0px;font-size:10.7px;color:#000;white-space:nowrap;word-spacing:-0.6px;clip-path:inset(0px 0 0 0)">32.6 Km</div>
<div class="abs" style="left:1652.5px;top:427.0px;font-size:10.7px;color:#000;white-space:nowrap;word-spacing:-0.8px;clip-path:inset(0px 0 0 0)">1034 m</div>
<div class="abs" style="right:150.9000000000001px;top:427.0px;font-size:10.7px;color:#000;white-space:nowrap;clip-path:inset(0px 0 0 0)">10.3607</div>
<div class="abs" style="right:68.0px;top:427.0px;font-size:10.7px;color:#000;white-space:nowrap;clip-path:inset(0px 0 0 0)">54.430527</div>
<div class="abs" style="right:28.5px;top:427.0px;font-size:10.7px;color:#000;white-space:nowrap;word-spacing:-0.6px;clip-path:inset(0px 0 0 0)">1 m</div>
<div class="abs" style="left:1424.5px;top:443.0px;font-size:10.7px;color:#000;white-space:nowrap;clip-path:inset(0px 0 0 0)">Position 4669</div>
<div class="abs" style="right:325.5px;top:443.0px;font-size:10.7px;color:#000;white-space:nowrap;letter-spacing:0.2px;clip-path:inset(0px 0 0 0)">15.08.12 15:15:20</div>
<div class="abs" style="right:273.0px;top:443.0px;font-size:10.7px;color:#000;white-space:nowrap;word-spacing:-0.6px;clip-path:inset(0px 0 0 0)">32.7 Km</div>
<div class="abs" style="left:1652.5px;top:443.0px;font-size:10.7px;color:#000;white-space:nowrap;word-spacing:-0.8px;clip-path:inset(0px 0 0 0)">1034 m</div>
<div class="abs" style="right:150.9000000000001px;top:443.0px;font-size:10.7px;color:#000;white-space:nowrap;clip-path:inset(0px 0 0 0)">10.360794</div>
<div class="abs" style="right:68.0px;top:443.0px;font-size:10.7px;color:#000;white-space:nowrap;clip-path:inset(0px 0 0 0)">54.430504</div>
<div class="abs" style="right:28.5px;top:443.0px;font-size:10.7px;color:#000;white-space:nowrap;word-spacing:-0.6px;clip-path:inset(0px 0 0 0)">1 m</div>
<div class="abs" style="left:1423px;top:457.5px;width:73.5px;height:15.0px;background:#e8e8e8"></div>
<div class="abs" style="left:1498px;top:457.5px;width:98px;height:15.0px;background:#e8e8e8"></div>
<div class="abs" style="left:1597px;top:457.5px;width:51.5px;height:15.0px;background:#e8e8e8"></div>
<div class="abs" style="left:1650px;top:457.5px;width:37.5px;height:15.0px;background:#e8e8e8"></div>
<div class="abs" style="left:1689px;top:457.5px;width:81.59999999999991px;height:15.0px;background:#e8e8e8"></div>
<div class="abs" style="left:1772px;top:457.5px;width:81.5px;height:15.0px;background:#e8e8e8"></div>
<div class="abs" style="left:1854.8px;top:457.5px;width:38.200000000000045px;height:15.0px;background:#e8e8e8"></div>
<div class="abs" style="left:1424.5px;top:459.0px;font-size:10.7px;color:#000;white-space:nowrap;clip-path:inset(0px 0 0 0)">Position 4670</div>
<div class="abs" style="right:325.5px;top:459.0px;font-size:10.7px;color:#000;white-space:nowrap;letter-spacing:0.2px;clip-path:inset(0px 0 0 0)">15.08.12 15:15:22</div>
<div class="abs" style="right:273.0px;top:459.0px;font-size:10.7px;color:#000;white-space:nowrap;word-spacing:-0.6px;clip-path:inset(0px 0 0 0)">32.7 Km</div>
<div class="abs" style="left:1652.5px;top:459.0px;font-size:10.7px;color:#000;white-space:nowrap;word-spacing:-0.8px;clip-path:inset(0px 0 0 0)">1034 m</div>
<div class="abs" style="right:150.9000000000001px;top:459.0px;font-size:10.7px;color:#000;white-space:nowrap;clip-path:inset(0px 0 0 0)">10.360879</div>
<div class="abs" style="right:68.0px;top:459.0px;font-size:10.7px;color:#000;white-space:nowrap;clip-path:inset(0px 0 0 0)">54.430481</div>
<div class="abs" style="right:28.5px;top:459.0px;font-size:10.7px;color:#000;white-space:nowrap;word-spacing:-0.6px;clip-path:inset(0px 0 0 0)">1 m</div>
<div class="abs" style="left:1424.5px;top:475.0px;font-size:10.7px;color:#000;white-space:nowrap;clip-path:inset(0px 0 0 0)">Position 4671</div>
<div class="abs" style="right:325.5px;top:475.0px;font-size:10.7px;color:#000;white-space:nowrap;letter-spacing:0.2px;clip-path:inset(0px 0 0 0)">15.08.12 15:15:24</div>
<div class="abs" style="right:273.0px;top:475.0px;font-size:10.7px;color:#000;white-space:nowrap;word-spacing:-0.6px;clip-path:inset(0px 0 0 0)">32.7 Km</div>
<div class="abs" style="left:1652.5px;top:475.0px;font-size:10.7px;color:#000;white-space:nowrap;word-spacing:-0.8px;clip-path:inset(0px 0 0 0)">1034 m</div>
<div class="abs" style="right:150.9000000000001px;top:475.0px;font-size:10.7px;color:#000;white-space:nowrap;clip-path:inset(0px 0 0 0)">10.360961</div>
<div class="abs" style="right:68.0px;top:475.0px;font-size:10.7px;color:#000;white-space:nowrap;clip-path:inset(0px 0 0 0)">54.430467</div>
<div class="abs" style="right:28.5px;top:475.0px;font-size:10.7px;color:#000;white-space:nowrap;word-spacing:-0.6px;clip-path:inset(0px 0 0 0)">1 m</div>
<div class="abs" style="left:1423px;top:489.5px;width:73.5px;height:15.0px;background:#e8e8e8"></div>
<div class="abs" style="left:1498px;top:489.5px;width:98px;height:15.0px;background:#e8e8e8"></div>
<div class="abs" style="left:1597px;top:489.5px;width:51.5px;height:15.0px;background:#e8e8e8"></div>
<div class="abs" style="left:1650px;top:489.5px;width:37.5px;height:15.0px;background:#e8e8e8"></div>
<div class="abs" style="left:1689px;top:489.5px;width:81.59999999999991px;height:15.0px;background:#e8e8e8"></div>
<div class="abs" style="left:1772px;top:489.5px;width:81.5px;height:15.0px;background:#e8e8e8"></div>
<div class="abs" style="left:1854.8px;top:489.5px;width:38.200000000000045px;height:15.0px;background:#e8e8e8"></div>
<div class="abs" style="left:1424.5px;top:491.0px;font-size:10.7px;color:#000;white-space:nowrap;clip-path:inset(0px 0 0 0)">Position 4672</div>
<div class="abs" style="right:325.5px;top:491.0px;font-size:10.7px;color:#000;white-space:nowrap;letter-spacing:0.2px;clip-path:inset(0px 0 0 0)">15.08.12 15:15:26</div>
<div class="abs" style="right:273.0px;top:491.0px;font-size:10.7px;color:#000;white-space:nowrap;word-spacing:-0.6px;clip-path:inset(0px 0 0 0)">32.7 Km</div>
<div class="abs" style="left:1652.5px;top:491.0px;font-size:10.7px;color:#000;white-space:nowrap;word-spacing:-0.8px;clip-path:inset(0px 0 0 0)">1034 m</div>
<div class="abs" style="right:150.9000000000001px;top:491.0px;font-size:10.7px;color:#000;white-space:nowrap;clip-path:inset(0px 0 0 0)">10.361047</div>
<div class="abs" style="right:68.0px;top:491.0px;font-size:10.7px;color:#000;white-space:nowrap;clip-path:inset(0px 0 0 0)">54.430452</div>
<div class="abs" style="right:28.5px;top:491.0px;font-size:10.7px;color:#000;white-space:nowrap;word-spacing:-0.6px;clip-path:inset(0px 0 0 0)">1 m</div>
<div class="abs" style="left:1424.5px;top:507.0px;font-size:10.7px;color:#000;white-space:nowrap;clip-path:inset(0px 0 0 0)">Position 4673</div>
<div class="abs" style="right:325.5px;top:507.0px;font-size:10.7px;color:#000;white-space:nowrap;letter-spacing:0.2px;clip-path:inset(0px 0 0 0)">15.08.12 15:15:28</div>
<div class="abs" style="right:273.0px;top:507.0px;font-size:10.7px;color:#000;white-space:nowrap;word-spacing:-0.6px;clip-path:inset(0px 0 0 0)">32.7 Km</div>
<div class="abs" style="left:1652.5px;top:507.0px;font-size:10.7px;color:#000;white-space:nowrap;word-spacing:-0.8px;clip-path:inset(0px 0 0 0)">1034 m</div>
<div class="abs" style="right:150.9000000000001px;top:507.0px;font-size:10.7px;color:#000;white-space:nowrap;clip-path:inset(0px 0 0 0)">10.361145</div>
<div class="abs" style="right:68.0px;top:507.0px;font-size:10.7px;color:#000;white-space:nowrap;clip-path:inset(0px 0 0 0)">54.430433</div>
<div class="abs" style="right:28.5px;top:507.0px;font-size:10.7px;color:#000;white-space:nowrap;word-spacing:-0.6px;clip-path:inset(0px 0 0 0)">1 m</div>
<div class="abs" style="left:1423px;top:521.5px;width:73.5px;height:15.0px;background:#e8e8e8"></div>
<div class="abs" style="left:1498px;top:521.5px;width:98px;height:15.0px;background:#e8e8e8"></div>
<div class="abs" style="left:1597px;top:521.5px;width:51.5px;height:15.0px;background:#e8e8e8"></div>
<div class="abs" style="left:1650px;top:521.5px;width:37.5px;height:15.0px;background:#e8e8e8"></div>
<div class="abs" style="left:1689px;top:521.5px;width:81.59999999999991px;height:15.0px;background:#e8e8e8"></div>
<div class="abs" style="left:1772px;top:521.5px;width:81.5px;height:15.0px;background:#e8e8e8"></div>
<div class="abs" style="left:1854.8px;top:521.5px;width:38.200000000000045px;height:15.0px;background:#e8e8e8"></div>
<div class="abs" style="left:1424.5px;top:523.0px;font-size:10.7px;color:#000;white-space:nowrap;clip-path:inset(0px 0 0 0)">Position 4674</div>
<div class="abs" style="right:325.5px;top:523.0px;font-size:10.7px;color:#000;white-space:nowrap;letter-spacing:0.2px;clip-path:inset(0px 0 0 0)">15.08.12 15:15:30</div>
<div class="abs" style="right:273.0px;top:523.0px;font-size:10.7px;color:#000;white-space:nowrap;word-spacing:-0.6px;clip-path:inset(0px 0 0 0)">32.7 Km</div>
<div class="abs" style="left:1652.5px;top:523.0px;font-size:10.7px;color:#000;white-space:nowrap;word-spacing:-0.8px;clip-path:inset(0px 0 0 0)">1034 m</div>
<div class="abs" style="right:150.9000000000001px;top:523.0px;font-size:10.7px;color:#000;white-space:nowrap;clip-path:inset(0px 0 0 0)">10.361255</div>
<div class="abs" style="right:68.0px;top:523.0px;font-size:10.7px;color:#000;white-space:nowrap;clip-path:inset(0px 0 0 0)">54.430413</div>
<div class="abs" style="right:28.5px;top:523.0px;font-size:10.7px;color:#000;white-space:nowrap;word-spacing:-0.6px;clip-path:inset(0px 0 0 0)">1 m</div>
<div class="abs" style="left:1424.5px;top:539.0px;font-size:10.7px;color:#000;white-space:nowrap;clip-path:inset(0px 0 0 0)">Position 4675</div>
<div class="abs" style="right:325.5px;top:539.0px;font-size:10.7px;color:#000;white-space:nowrap;letter-spacing:0.2px;clip-path:inset(0px 0 0 0)">15.08.12 15:15:32</div>
<div class="abs" style="right:273.0px;top:539.0px;font-size:10.7px;color:#000;white-space:nowrap;word-spacing:-0.6px;clip-path:inset(0px 0 0 0)">32.7 Km</div>
<div class="abs" style="left:1652.5px;top:539.0px;font-size:10.7px;color:#000;white-space:nowrap;word-spacing:-0.8px;clip-path:inset(0px 0 0 0)">1034 m</div>
<div class="abs" style="right:150.9000000000001px;top:539.0px;font-size:10.7px;color:#000;white-space:nowrap;clip-path:inset(0px 0 0 0)">10.361372</div>
<div class="abs" style="right:68.0px;top:539.0px;font-size:10.7px;color:#000;white-space:nowrap;clip-path:inset(0px 0 0 0)">54.430387</div>
<div class="abs" style="right:28.5px;top:539.0px;font-size:10.7px;color:#000;white-space:nowrap;word-spacing:-0.6px;clip-path:inset(0px 0 0 0)">1 m</div>
<div class="abs" style="left:1423px;top:553.5px;width:73.5px;height:15.0px;background:#e8e8e8"></div>
<div class="abs" style="left:1498px;top:553.5px;width:98px;height:15.0px;background:#e8e8e8"></div>
<div class="abs" style="left:1597px;top:553.5px;width:51.5px;height:15.0px;background:#e8e8e8"></div>
<div class="abs" style="left:1650px;top:553.5px;width:37.5px;height:15.0px;background:#e8e8e8"></div>
<div class="abs" style="left:1689px;top:553.5px;width:81.59999999999991px;height:15.0px;background:#e8e8e8"></div>
<div class="abs" style="left:1772px;top:553.5px;width:81.5px;height:15.0px;background:#e8e8e8"></div>
<div class="abs" style="left:1854.8px;top:553.5px;width:38.200000000000045px;height:15.0px;background:#e8e8e8"></div>
<div class="abs" style="left:1424.5px;top:555.0px;font-size:10.7px;color:#000;white-space:nowrap;clip-path:inset(0px 0 0 0)">Position 4676</div>
<div class="abs" style="right:325.5px;top:555.0px;font-size:10.7px;color:#000;white-space:nowrap;letter-spacing:0.2px;clip-path:inset(0px 0 0 0)">15.08.12 15:15:34</div>
<div class="abs" style="right:273.0px;top:555.0px;font-size:10.7px;color:#000;white-space:nowrap;word-spacing:-0.6px;clip-path:inset(0px 0 0 0)">32.7 Km</div>
<div class="abs" style="left:1652.5px;top:555.0px;font-size:10.7px;color:#000;white-space:nowrap;word-spacing:-0.8px;clip-path:inset(0px 0 0 0)">1034 m</div>
<div class="abs" style="right:150.9000000000001px;top:555.0px;font-size:10.7px;color:#000;white-space:nowrap;clip-path:inset(0px 0 0 0)">10.361502</div>
<div class="abs" style="right:68.0px;top:555.0px;font-size:10.7px;color:#000;white-space:nowrap;clip-path:inset(0px 0 0 0)">54.430359</div>
<div class="abs" style="right:28.5px;top:555.0px;font-size:10.7px;color:#000;white-space:nowrap;word-spacing:-0.6px;clip-path:inset(0px 0 0 0)">1 m</div>
<div class="abs" style="left:1424.5px;top:571.0px;font-size:10.7px;color:#000;white-space:nowrap;clip-path:inset(0px 0 0 0)">Position 4677</div>
<div class="abs" style="right:325.5px;top:571.0px;font-size:10.7px;color:#000;white-space:nowrap;letter-spacing:0.2px;clip-path:inset(0px 0 0 0)">15.08.12 15:15:36</div>
<div class="abs" style="right:273.0px;top:571.0px;font-size:10.7px;color:#000;white-space:nowrap;word-spacing:-0.6px;clip-path:inset(0px 0 0 0)">32.7 Km</div>
<div class="abs" style="left:1652.5px;top:571.0px;font-size:10.7px;color:#000;white-space:nowrap;word-spacing:-0.8px;clip-path:inset(0px 0 0 0)">1034 m</div>
<div class="abs" style="right:150.9000000000001px;top:571.0px;font-size:10.7px;color:#000;white-space:nowrap;clip-path:inset(0px 0 0 0)">10.361648</div>
<div class="abs" style="right:68.0px;top:571.0px;font-size:10.7px;color:#000;white-space:nowrap;clip-path:inset(0px 0 0 0)">54.430337</div>
<div class="abs" style="right:28.5px;top:571.0px;font-size:10.7px;color:#000;white-space:nowrap;word-spacing:-0.6px;clip-path:inset(0px 0 0 0)">1 m</div>
<div class="abs" style="left:1423px;top:585.5px;width:73.5px;height:15.0px;background:#e8e8e8"></div>
<div class="abs" style="left:1498px;top:585.5px;width:98px;height:15.0px;background:#e8e8e8"></div>
<div class="abs" style="left:1597px;top:585.5px;width:51.5px;height:15.0px;background:#e8e8e8"></div>
<div class="abs" style="left:1650px;top:585.5px;width:37.5px;height:15.0px;background:#e8e8e8"></div>
<div class="abs" style="left:1689px;top:585.5px;width:81.59999999999991px;height:15.0px;background:#e8e8e8"></div>
<div class="abs" style="left:1772px;top:585.5px;width:81.5px;height:15.0px;background:#e8e8e8"></div>
<div class="abs" style="left:1854.8px;top:585.5px;width:38.200000000000045px;height:15.0px;background:#e8e8e8"></div>
<div class="abs" style="left:1424.5px;top:587.0px;font-size:10.7px;color:#000;white-space:nowrap;clip-path:inset(0px 0 0 0)">Position 4678</div>
<div class="abs" style="right:325.5px;top:587.0px;font-size:10.7px;color:#000;white-space:nowrap;letter-spacing:0.2px;clip-path:inset(0px 0 0 0)">15.08.12 15:15:38</div>
<div class="abs" style="right:273.0px;top:587.0px;font-size:10.7px;color:#000;white-space:nowrap;word-spacing:-0.6px;clip-path:inset(0px 0 0 0)">32.7 Km</div>
<div class="abs" style="left:1652.5px;top:587.0px;font-size:10.7px;color:#000;white-space:nowrap;word-spacing:-0.8px;clip-path:inset(0px 0 0 0)">1078 m</div>
<div class="abs" style="right:150.9000000000001px;top:587.0px;font-size:10.7px;color:#000;white-space:nowrap;clip-path:inset(0px 0 0 0)">10.361786</div>
<div class="abs" style="right:68.0px;top:587.0px;font-size:10.7px;color:#000;white-space:nowrap;clip-path:inset(0px 0 0 0)">54.430307</div>
<div class="abs" style="right:28.5px;top:587.0px;font-size:10.7px;color:#000;white-space:nowrap;word-spacing:-0.6px;clip-path:inset(0px 0 0 0)">44 m</div>
<div class="abs" style="left:1424.5px;top:603.0px;font-size:10.7px;color:#000;white-space:nowrap;clip-path:inset(0px 0 0 0)">Position 4679</div>
<div class="abs" style="right:325.5px;top:603.0px;font-size:10.7px;color:#000;white-space:nowrap;letter-spacing:0.2px;clip-path:inset(0px 0 0 0)">15.08.12 15:15:40</div>
<div class="abs" style="right:273.0px;top:603.0px;font-size:10.7px;color:#000;white-space:nowrap;word-spacing:-0.6px;clip-path:inset(0px 0 0 0)">32.7 Km</div>
<div class="abs" style="left:1652.5px;top:603.0px;font-size:10.7px;color:#000;white-space:nowrap;word-spacing:-0.8px;clip-path:inset(0px 0 0 0)">1078 m</div>
<div class="abs" style="right:150.9000000000001px;top:603.0px;font-size:10.7px;color:#000;white-space:nowrap;clip-path:inset(0px 0 0 0)">10.36192</div>
<div class="abs" style="right:68.0px;top:603.0px;font-size:10.7px;color:#000;white-space:nowrap;clip-path:inset(0px 0 0 0)">54.430285</div>
<div class="abs" style="right:28.5px;top:603.0px;font-size:10.7px;color:#000;white-space:nowrap;word-spacing:-0.6px;clip-path:inset(0px 0 0 0)">45 m</div>
<div class="abs" style="left:1423px;top:617.5px;width:73.5px;height:15.0px;background:#e8e8e8"></div>
<div class="abs" style="left:1498px;top:617.5px;width:98px;height:15.0px;background:#e8e8e8"></div>
<div class="abs" style="left:1597px;top:617.5px;width:51.5px;height:15.0px;background:#e8e8e8"></div>
<div class="abs" style="left:1650px;top:617.5px;width:37.5px;height:15.0px;background:#e8e8e8"></div>
<div class="abs" style="left:1689px;top:617.5px;width:81.59999999999991px;height:15.0px;background:#e8e8e8"></div>
<div class="abs" style="left:1772px;top:617.5px;width:81.5px;height:15.0px;background:#e8e8e8"></div>
<div class="abs" style="left:1854.8px;top:617.5px;width:38.200000000000045px;height:15.0px;background:#e8e8e8"></div>
<div class="abs" style="left:1424.5px;top:619.0px;font-size:10.7px;color:#000;white-space:nowrap;clip-path:inset(0px 0 0 0)">Position 4680</div>
<div class="abs" style="right:325.5px;top:619.0px;font-size:10.7px;color:#000;white-space:nowrap;letter-spacing:0.2px;clip-path:inset(0px 0 0 0)">15.08.12 15:15:42</div>
<div class="abs" style="right:273.0px;top:619.0px;font-size:10.7px;color:#000;white-space:nowrap;word-spacing:-0.6px;clip-path:inset(0px 0 0 0)">32.7 Km</div>
<div class="abs" style="left:1652.5px;top:619.0px;font-size:10.7px;color:#000;white-space:nowrap;word-spacing:-0.8px;clip-path:inset(0px 0 0 0)">1078 m</div>
<div class="abs" style="right:150.9000000000001px;top:619.0px;font-size:10.7px;color:#000;white-space:nowrap;clip-path:inset(0px 0 0 0)">10.362053</div>
<div class="abs" style="right:68.0px;top:619.0px;font-size:10.7px;color:#000;white-space:nowrap;clip-path:inset(0px 0 0 0)">54.430255</div>
<div class="abs" style="right:28.5px;top:619.0px;font-size:10.7px;color:#000;white-space:nowrap;word-spacing:-0.6px;clip-path:inset(0px 0 0 0)">44 m</div>
<div class="abs" style="left:1424.5px;top:635.0px;font-size:10.7px;color:#000;white-space:nowrap;clip-path:inset(0px 0 0 0)">Position 4681</div>
<div class="abs" style="right:325.5px;top:635.0px;font-size:10.7px;color:#000;white-space:nowrap;letter-spacing:0.2px;clip-path:inset(0px 0 0 0)">15.08.12 15:15:44</div>
<div class="abs" style="right:273.0px;top:635.0px;font-size:10.7px;color:#000;white-space:nowrap;word-spacing:-0.6px;clip-path:inset(0px 0 0 0)">32.7 Km</div>
<div class="abs" style="left:1652.5px;top:635.0px;font-size:10.7px;color:#000;white-space:nowrap;word-spacing:-0.8px;clip-path:inset(0px 0 0 0)">1078 m</div>
<div class="abs" style="right:150.9000000000001px;top:635.0px;font-size:10.7px;color:#000;white-space:nowrap;clip-path:inset(0px 0 0 0)">10.362186</div>
<div class="abs" style="right:68.0px;top:635.0px;font-size:10.7px;color:#000;white-space:nowrap;clip-path:inset(0px 0 0 0)">54.430221</div>
<div class="abs" style="right:28.5px;top:635.0px;font-size:10.7px;color:#000;white-space:nowrap;word-spacing:-0.6px;clip-path:inset(0px 0 0 0)">44 m</div>
<div class="abs" style="left:1423px;top:649.5px;width:73.5px;height:15.0px;background:#e8e8e8"></div>
<div class="abs" style="left:1498px;top:649.5px;width:98px;height:15.0px;background:#e8e8e8"></div>
<div class="abs" style="left:1597px;top:649.5px;width:51.5px;height:15.0px;background:#e8e8e8"></div>
<div class="abs" style="left:1650px;top:649.5px;width:37.5px;height:15.0px;background:#e8e8e8"></div>
<div class="abs" style="left:1689px;top:649.5px;width:81.59999999999991px;height:15.0px;background:#e8e8e8"></div>
<div class="abs" style="left:1772px;top:649.5px;width:81.5px;height:15.0px;background:#e8e8e8"></div>
<div class="abs" style="left:1854.8px;top:649.5px;width:38.200000000000045px;height:15.0px;background:#e8e8e8"></div>
<div class="abs" style="left:1424.5px;top:651.0px;font-size:10.7px;color:#000;white-space:nowrap;clip-path:inset(0px 0 0 0)">Position 4682</div>
<div class="abs" style="right:325.5px;top:651.0px;font-size:10.7px;color:#000;white-space:nowrap;letter-spacing:0.2px;clip-path:inset(0px 0 0 0)">15.08.12 15:15:46</div>
<div class="abs" style="right:273.0px;top:651.0px;font-size:10.7px;color:#000;white-space:nowrap;word-spacing:-0.6px;clip-path:inset(0px 0 0 0)">32.8 Km</div>
<div class="abs" style="left:1652.5px;top:651.0px;font-size:10.7px;color:#000;white-space:nowrap;word-spacing:-0.8px;clip-path:inset(0px 0 0 0)">1078 m</div>
<div class="abs" style="right:150.9000000000001px;top:651.0px;font-size:10.7px;color:#000;white-space:nowrap;clip-path:inset(0px 0 0 0)">10.362319</div>
<div class="abs" style="right:68.0px;top:651.0px;font-size:10.7px;color:#000;white-space:nowrap;clip-path:inset(0px 0 0 0)">54.430189</div>
<div class="abs" style="right:28.5px;top:651.0px;font-size:10.7px;color:#000;white-space:nowrap;word-spacing:-0.6px;clip-path:inset(0px 0 0 0)">44 m</div>
<div class="abs" style="left:1424.5px;top:667.0px;font-size:10.7px;color:#000;white-space:nowrap;clip-path:inset(0px 0 0 0)">Position 4683</div>
<div class="abs" style="right:325.5px;top:667.0px;font-size:10.7px;color:#000;white-space:nowrap;letter-spacing:0.2px;clip-path:inset(0px 0 0 0)">15.08.12 15:15:48</div>
<div class="abs" style="right:273.0px;top:667.0px;font-size:10.7px;color:#000;white-space:nowrap;word-spacing:-0.6px;clip-path:inset(0px 0 0 0)">32.8 Km</div>
<div class="abs" style="left:1652.5px;top:667.0px;font-size:10.7px;color:#000;white-space:nowrap;word-spacing:-0.8px;clip-path:inset(0px 0 0 0)">1078 m</div>
<div class="abs" style="right:150.9000000000001px;top:667.0px;font-size:10.7px;color:#000;white-space:nowrap;clip-path:inset(0px 0 0 0)">10.362451</div>
<div class="abs" style="right:68.0px;top:667.0px;font-size:10.7px;color:#000;white-space:nowrap;clip-path:inset(0px 0 0 0)">54.430164</div>
<div class="abs" style="right:28.5px;top:667.0px;font-size:10.7px;color:#000;white-space:nowrap;word-spacing:-0.6px;clip-path:inset(0px 0 0 0)">45 m</div>
<div class="abs" style="left:1423px;top:681.5px;width:73.5px;height:15.0px;background:#e8e8e8"></div>
<div class="abs" style="left:1498px;top:681.5px;width:98px;height:15.0px;background:#e8e8e8"></div>
<div class="abs" style="left:1597px;top:681.5px;width:51.5px;height:15.0px;background:#e8e8e8"></div>
<div class="abs" style="left:1650px;top:681.5px;width:37.5px;height:15.0px;background:#e8e8e8"></div>
<div class="abs" style="left:1689px;top:681.5px;width:81.59999999999991px;height:15.0px;background:#e8e8e8"></div>
<div class="abs" style="left:1772px;top:681.5px;width:81.5px;height:15.0px;background:#e8e8e8"></div>
<div class="abs" style="left:1854.8px;top:681.5px;width:38.200000000000045px;height:15.0px;background:#e8e8e8"></div>
<div class="abs" style="left:1424.5px;top:683.0px;font-size:10.7px;color:#000;white-space:nowrap;clip-path:inset(0px 0 0 0)">Position 4684</div>
<div class="abs" style="right:325.5px;top:683.0px;font-size:10.7px;color:#000;white-space:nowrap;letter-spacing:0.2px;clip-path:inset(0px 0 0 0)">15.08.12 15:15:50</div>
<div class="abs" style="right:273.0px;top:683.0px;font-size:10.7px;color:#000;white-space:nowrap;word-spacing:-0.6px;clip-path:inset(0px 0 0 0)">32.8 Km</div>
<div class="abs" style="left:1652.5px;top:683.0px;font-size:10.7px;color:#000;white-space:nowrap;word-spacing:-0.8px;clip-path:inset(0px 0 0 0)">1079 m</div>
<div class="abs" style="right:150.9000000000001px;top:683.0px;font-size:10.7px;color:#000;white-space:nowrap;clip-path:inset(0px 0 0 0)">10.362583</div>
<div class="abs" style="right:68.0px;top:683.0px;font-size:10.7px;color:#000;white-space:nowrap;clip-path:inset(0px 0 0 0)">54.430137</div>
<div class="abs" style="right:28.5px;top:683.0px;font-size:10.7px;color:#000;white-space:nowrap;word-spacing:-0.6px;clip-path:inset(0px 0 0 0)">45 m</div>
<div class="abs" style="left:1424.5px;top:699.0px;font-size:10.7px;color:#000;white-space:nowrap;clip-path:inset(0px 0 0 0)">Position 4685</div>
<div class="abs" style="right:325.5px;top:699.0px;font-size:10.7px;color:#000;white-space:nowrap;letter-spacing:0.2px;clip-path:inset(0px 0 0 0)">15.08.12 15:15:52</div>
<div class="abs" style="right:273.0px;top:699.0px;font-size:10.7px;color:#000;white-space:nowrap;word-spacing:-0.6px;clip-path:inset(0px 0 0 0)">32.8 Km</div>
<div class="abs" style="left:1652.5px;top:699.0px;font-size:10.7px;color:#000;white-space:nowrap;word-spacing:-0.8px;clip-path:inset(0px 0 0 0)">1079 m</div>
<div class="abs" style="right:150.9000000000001px;top:699.0px;font-size:10.7px;color:#000;white-space:nowrap;clip-path:inset(0px 0 0 0)">10.362713</div>
<div class="abs" style="right:68.0px;top:699.0px;font-size:10.7px;color:#000;white-space:nowrap;clip-path:inset(0px 0 0 0)">54.430103</div>
<div class="abs" style="right:28.5px;top:699.0px;font-size:10.7px;color:#000;white-space:nowrap;word-spacing:-0.6px;clip-path:inset(0px 0 0 0)">45 m</div>
<div class="abs" style="left:1423px;top:713.5px;width:73.5px;height:15.0px;background:#e8e8e8"></div>
<div class="abs" style="left:1498px;top:713.5px;width:98px;height:15.0px;background:#e8e8e8"></div>
<div class="abs" style="left:1597px;top:713.5px;width:51.5px;height:15.0px;background:#e8e8e8"></div>
<div class="abs" style="left:1650px;top:713.5px;width:37.5px;height:15.0px;background:#e8e8e8"></div>
<div class="abs" style="left:1689px;top:713.5px;width:81.59999999999991px;height:15.0px;background:#e8e8e8"></div>
<div class="abs" style="left:1772px;top:713.5px;width:81.5px;height:15.0px;background:#e8e8e8"></div>
<div class="abs" style="left:1854.8px;top:713.5px;width:38.200000000000045px;height:15.0px;background:#e8e8e8"></div>
<div class="abs" style="left:1424.5px;top:715.0px;font-size:10.7px;color:#000;white-space:nowrap;clip-path:inset(0px 0 0 0)">Position 4686</div>
<div class="abs" style="right:325.5px;top:715.0px;font-size:10.7px;color:#000;white-space:nowrap;letter-spacing:0.2px;clip-path:inset(0px 0 0 0)">15.08.12 15:15:54</div>
<div class="abs" style="right:273.0px;top:715.0px;font-size:10.7px;color:#000;white-space:nowrap;word-spacing:-0.6px;clip-path:inset(0px 0 0 0)">32.8 Km</div>
<div class="abs" style="left:1652.5px;top:715.0px;font-size:10.7px;color:#000;white-space:nowrap;word-spacing:-0.8px;clip-path:inset(0px 0 0 0)">1079 m</div>
<div class="abs" style="right:150.9000000000001px;top:715.0px;font-size:10.7px;color:#000;white-space:nowrap;clip-path:inset(0px 0 0 0)">10.36285</div>
<div class="abs" style="right:68.0px;top:715.0px;font-size:10.7px;color:#000;white-space:nowrap;clip-path:inset(0px 0 0 0)">54.430067</div>
<div class="abs" style="right:28.5px;top:715.0px;font-size:10.7px;color:#000;white-space:nowrap;word-spacing:-0.6px;clip-path:inset(0px 0 0 0)">45 m</div>
<div class="abs" style="left:1424.5px;top:731.0px;font-size:10.7px;color:#000;white-space:nowrap;clip-path:inset(0px 0 0 0)">Position 4687</div>
<div class="abs" style="right:325.5px;top:731.0px;font-size:10.7px;color:#000;white-space:nowrap;letter-spacing:0.2px;clip-path:inset(0px 0 0 0)">15.08.12 15:15:56</div>
<div class="abs" style="right:273.0px;top:731.0px;font-size:10.7px;color:#000;white-space:nowrap;word-spacing:-0.6px;clip-path:inset(0px 0 0 0)">32.8 Km</div>
<div class="abs" style="left:1652.5px;top:731.0px;font-size:10.7px;color:#000;white-space:nowrap;word-spacing:-0.8px;clip-path:inset(0px 0 0 0)">1079 m</div>
<div class="abs" style="right:150.9000000000001px;top:731.0px;font-size:10.7px;color:#000;white-space:nowrap;clip-path:inset(0px 0 0 0)">10.362993</div>
<div class="abs" style="right:68.0px;top:731.0px;font-size:10.7px;color:#000;white-space:nowrap;clip-path:inset(0px 0 0 0)">54.430034</div>
<div class="abs" style="right:28.5px;top:731.0px;font-size:10.7px;color:#000;white-space:nowrap;word-spacing:-0.6px;clip-path:inset(0px 0 0 0)">45 m</div>
<div class="abs" style="left:1423px;top:745.5px;width:73.5px;height:15.0px;background:#e8e8e8"></div>
<div class="abs" style="left:1498px;top:745.5px;width:98px;height:15.0px;background:#e8e8e8"></div>
<div class="abs" style="left:1597px;top:745.5px;width:51.5px;height:15.0px;background:#e8e8e8"></div>
<div class="abs" style="left:1650px;top:745.5px;width:37.5px;height:15.0px;background:#e8e8e8"></div>
<div class="abs" style="left:1689px;top:745.5px;width:81.59999999999991px;height:15.0px;background:#e8e8e8"></div>
<div class="abs" style="left:1772px;top:745.5px;width:81.5px;height:15.0px;background:#e8e8e8"></div>
<div class="abs" style="left:1854.8px;top:745.5px;width:38.200000000000045px;height:15.0px;background:#e8e8e8"></div>
<div class="abs" style="left:1424.5px;top:747.0px;font-size:10.7px;color:#000;white-space:nowrap;clip-path:inset(0px 0 0 0)">Position 4688</div>
<div class="abs" style="right:325.5px;top:747.0px;font-size:10.7px;color:#000;white-space:nowrap;letter-spacing:0.2px;clip-path:inset(0px 0 0 0)">15.08.12 15:15:57</div>
<div class="abs" style="right:273.0px;top:747.0px;font-size:10.7px;color:#000;white-space:nowrap;word-spacing:-0.6px;clip-path:inset(0px 0 0 0)">32.8 Km</div>
<div class="abs" style="left:1652.5px;top:747.0px;font-size:10.7px;color:#000;white-space:nowrap;word-spacing:-0.8px;clip-path:inset(0px 0 0 0)">1079 m</div>
<div class="abs" style="right:150.9000000000001px;top:747.0px;font-size:10.7px;color:#000;white-space:nowrap;clip-path:inset(0px 0 0 0)">10.363065</div>
<div class="abs" style="right:68.0px;top:747.0px;font-size:10.7px;color:#000;white-space:nowrap;clip-path:inset(0px 0 0 0)">54.430018</div>
<div class="abs" style="right:28.5px;top:747.0px;font-size:10.7px;color:#000;white-space:nowrap;word-spacing:-0.6px;clip-path:inset(0px 0 0 0)">45 m</div>
<div class="abs" style="left:1424.5px;top:763.0px;font-size:10.7px;color:#000;white-space:nowrap;clip-path:inset(0px 0 0 0)">Position 4689</div>
<div class="abs" style="right:325.5px;top:763.0px;font-size:10.7px;color:#000;white-space:nowrap;letter-spacing:0.2px;clip-path:inset(0px 0 0 0)">15.08.12 15:15:58</div>
<div class="abs" style="right:273.0px;top:763.0px;font-size:10.7px;color:#000;white-space:nowrap;word-spacing:-0.6px;clip-path:inset(0px 0 0 0)">32.8 Km</div>
<div class="abs" style="left:1652.5px;top:763.0px;font-size:10.7px;color:#000;white-space:nowrap;word-spacing:-0.8px;clip-path:inset(0px 0 0 0)">1079 m</div>
<div class="abs" style="right:150.9000000000001px;top:763.0px;font-size:10.7px;color:#000;white-space:nowrap;clip-path:inset(0px 0 0 0)">10.363137</div>
<div class="abs" style="right:68.0px;top:763.0px;font-size:10.7px;color:#000;white-space:nowrap;clip-path:inset(0px 0 0 0)">54.43</div>
<div class="abs" style="right:28.5px;top:763.0px;font-size:10.7px;color:#000;white-space:nowrap;word-spacing:-0.6px;clip-path:inset(0px 0 0 0)">45 m</div>
<div class="abs" style="left:1423px;top:777.5px;width:73.5px;height:15.0px;background:#e8e8e8"></div>
<div class="abs" style="left:1498px;top:777.5px;width:98px;height:15.0px;background:#e8e8e8"></div>
<div class="abs" style="left:1597px;top:777.5px;width:51.5px;height:15.0px;background:#e8e8e8"></div>
<div class="abs" style="left:1650px;top:777.5px;width:37.5px;height:15.0px;background:#e8e8e8"></div>
<div class="abs" style="left:1689px;top:777.5px;width:81.59999999999991px;height:15.0px;background:#e8e8e8"></div>
<div class="abs" style="left:1772px;top:777.5px;width:81.5px;height:15.0px;background:#e8e8e8"></div>
<div class="abs" style="left:1854.8px;top:777.5px;width:38.200000000000045px;height:15.0px;background:#e8e8e8"></div>
<div class="abs" style="left:1424.5px;top:779.0px;font-size:10.7px;color:#000;white-space:nowrap;clip-path:inset(0px 0 0 0)">Position 4690</div>
<div class="abs" style="right:325.5px;top:779.0px;font-size:10.7px;color:#000;white-space:nowrap;letter-spacing:0.2px;clip-path:inset(0px 0 0 0)">15.08.12 15:15:59</div>
<div class="abs" style="right:273.0px;top:779.0px;font-size:10.7px;color:#000;white-space:nowrap;word-spacing:-0.6px;clip-path:inset(0px 0 0 0)">32.8 Km</div>
<div class="abs" style="left:1652.5px;top:779.0px;font-size:10.7px;color:#000;white-space:nowrap;word-spacing:-0.8px;clip-path:inset(0px 0 0 0)">1079 m</div>
<div class="abs" style="right:150.9000000000001px;top:779.0px;font-size:10.7px;color:#000;white-space:nowrap;clip-path:inset(0px 0 0 0)">10.363208</div>
<div class="abs" style="right:68.0px;top:779.0px;font-size:10.7px;color:#000;white-space:nowrap;clip-path:inset(0px 0 0 0)">54.429983</div>
<div class="abs" style="right:28.5px;top:779.0px;font-size:10.7px;color:#000;white-space:nowrap;word-spacing:-0.6px;clip-path:inset(0px 0 0 0)">45 m</div>
<div class="abs" style="left:1424.5px;top:795.0px;font-size:10.7px;color:#000;white-space:nowrap;clip-path:inset(0px 0 0 0)">Position 4691</div>
<div class="abs" style="right:325.5px;top:795.0px;font-size:10.7px;color:#000;white-space:nowrap;letter-spacing:0.2px;clip-path:inset(0px 0 0 0)">15.08.12 15:16:00</div>
<div class="abs" style="right:273.0px;top:795.0px;font-size:10.7px;color:#000;white-space:nowrap;word-spacing:-0.6px;clip-path:inset(0px 0 0 0)">32.8 Km</div>
<div class="abs" style="left:1652.5px;top:795.0px;font-size:10.7px;color:#000;white-space:nowrap;word-spacing:-0.8px;clip-path:inset(0px 0 0 0)">1079 m</div>
<div class="abs" style="right:150.9000000000001px;top:795.0px;font-size:10.7px;color:#000;white-space:nowrap;clip-path:inset(0px 0 0 0)">10.36328</div>
<div class="abs" style="right:68.0px;top:795.0px;font-size:10.7px;color:#000;white-space:nowrap;clip-path:inset(0px 0 0 0)">54.429966</div>
<div class="abs" style="right:28.5px;top:795.0px;font-size:10.7px;color:#000;white-space:nowrap;word-spacing:-0.6px;clip-path:inset(0px 0 0 0)">45 m</div>
<div class="abs" style="left:1423px;top:809.5px;width:73.5px;height:15.0px;background:#e8e8e8"></div>
<div class="abs" style="left:1498px;top:809.5px;width:98px;height:15.0px;background:#e8e8e8"></div>
<div class="abs" style="left:1597px;top:809.5px;width:51.5px;height:15.0px;background:#e8e8e8"></div>
<div class="abs" style="left:1650px;top:809.5px;width:37.5px;height:15.0px;background:#e8e8e8"></div>
<div class="abs" style="left:1689px;top:809.5px;width:81.59999999999991px;height:15.0px;background:#e8e8e8"></div>
<div class="abs" style="left:1772px;top:809.5px;width:81.5px;height:15.0px;background:#e8e8e8"></div>
<div class="abs" style="left:1854.8px;top:809.5px;width:38.200000000000045px;height:15.0px;background:#e8e8e8"></div>
<div class="abs" style="left:1424.5px;top:811.0px;font-size:10.7px;color:#000;white-space:nowrap;clip-path:inset(0px 0 0 0)">Position 4692</div>
<div class="abs" style="right:325.5px;top:811.0px;font-size:10.7px;color:#000;white-space:nowrap;letter-spacing:0.2px;clip-path:inset(0px 0 0 0)">15.08.12 15:16:02</div>
<div class="abs" style="right:273.0px;top:811.0px;font-size:10.7px;color:#000;white-space:nowrap;word-spacing:-0.6px;clip-path:inset(0px 0 0 0)">32.8 Km</div>
<div class="abs" style="left:1652.5px;top:811.0px;font-size:10.7px;color:#000;white-space:nowrap;word-spacing:-0.8px;clip-path:inset(0px 0 0 0)">1079 m</div>
<div class="abs" style="right:150.9000000000001px;top:811.0px;font-size:10.7px;color:#000;white-space:nowrap;clip-path:inset(0px 0 0 0)">10.363424</div>
<div class="abs" style="right:68.0px;top:811.0px;font-size:10.7px;color:#000;white-space:nowrap;clip-path:inset(0px 0 0 0)">54.429935</div>
<div class="abs" style="right:28.5px;top:811.0px;font-size:10.7px;color:#000;white-space:nowrap;word-spacing:-0.6px;clip-path:inset(0px 0 0 0)">45 m</div>
<div class="abs" style="left:1423px;top:825.5px;width:73.5px;height:16.0px;background:#0f99f0"></div>
<div class="abs" style="left:1498px;top:825.5px;width:98px;height:16.0px;background:#0f99f0"></div>
<div class="abs" style="left:1597px;top:825.5px;width:51.5px;height:16.0px;background:#0f99f0"></div>
<div class="abs" style="left:1650px;top:825.5px;width:37.5px;height:16.0px;background:#0f99f0"></div>
<div class="abs" style="left:1689px;top:825.5px;width:81.59999999999991px;height:16.0px;background:#0f99f0"></div>
<div class="abs" style="left:1772px;top:825.5px;width:81.5px;height:16.0px;background:#0f99f0"></div>
<div class="abs" style="left:1854.8px;top:825.5px;width:38.200000000000045px;height:16.0px;background:#0f99f0"></div>
<div class="abs" style="left:1497.5px;top:826.0px;width:99px;height:15px;border:1px solid #44546a"></div>
<div class="abs" style="left:1424.5px;top:827.0px;font-size:10.7px;color:#fff;white-space:nowrap;clip-path:inset(0px 0 0 0)">Position 4693</div>
<div class="abs" style="right:325.5px;top:827.0px;font-size:10.7px;color:#fff;white-space:nowrap;letter-spacing:0.2px;clip-path:inset(0px 0 0 0)">15.08.12 15:16:04</div>
<div class="abs" style="right:273.0px;top:827.0px;font-size:10.7px;color:#fff;white-space:nowrap;word-spacing:-0.6px;clip-path:inset(0px 0 0 0)">32.8 Km</div>
<div class="abs" style="left:1652.5px;top:827.0px;font-size:10.7px;color:#fff;white-space:nowrap;word-spacing:-0.8px;clip-path:inset(0px 0 0 0)">1079 m</div>
<div class="abs" style="right:150.9000000000001px;top:827.0px;font-size:10.7px;color:#fff;white-space:nowrap;clip-path:inset(0px 0 0 0)">10.363564</div>
<div class="abs" style="right:68.0px;top:827.0px;font-size:10.7px;color:#fff;white-space:nowrap;clip-path:inset(0px 0 0 0)">54.429904</div>
<div class="abs" style="right:28.5px;top:827.0px;font-size:10.7px;color:#fff;white-space:nowrap;word-spacing:-0.6px;clip-path:inset(0px 0 0 0)">44 m</div>
<div class="abs" style="left:1423px;top:205px;width:491px;height:16px;background:#f0f0f0"></div>
<div class="abs" style="left:1424px;top:207px;font-size:11px;white-space:nowrap;">Beschreibung</div>
<div class="abs" style="left:1499px;top:207px;font-size:11px;white-space:nowrap;">Zeit</div>
<div class="abs" style="left:1597px;top:207px;font-size:11px;white-space:nowrap;">Distanz</div>
<div class="abs" style="left:1650px;top:207px;font-size:11px;white-space:nowrap;">Steig...</div>
<div class="abs" style="left:1689px;top:207px;font-size:11px;white-space:nowrap;">Länge</div>
<div class="abs" style="left:1772px;top:207px;font-size:11px;white-space:nowrap;">Breite</div>
<div class="abs" style="left:1855px;top:207px;font-size:11px;white-space:nowrap;">Höhe</div>
<div class="abs" style="left:1894px;top:221px;width:20px;height:620px;background:#f0f0f0"></div>
<svg class="abs" style="left:1898px;top:226px" width="10" height="8"><path d="M1.5,6 L8.5,6 L5,2Z" fill="#333"/></svg>
<svg class="abs" style="left:1898px;top:829px" width="10" height="8"><path d="M1.5,2 L8.5,2 L5,6Z" fill="#333"/></svg>
<div class="abs" style="left:1896px;top:364px;width:14px;height:6px;border:1px solid #9a9a9a;border-radius:2px;background:linear-gradient(#f6f6f6,#d8d8d8)"></div>
<div class="abs" style="left:1432px;top:849px;width:55px;height:31px;border:1px solid #707070;border-radius:3px;background:linear-gradient(#f6f6f6 0%,#ededed 45%,#dddddd 46%,#d1d1d1 100%)"><svg class="abs" style="left:15px;top:3px" width="24" height="24"><rect x="3" y="2" width="18" height="5" fill="#5aa8f0" stroke="#2a6fc0" stroke-width="0.8"/><path d="M12,8 L21,21 L3,21Z" fill="#5aa8f0" stroke="#2a6fc0" stroke-width="0.8"/></svg></div>
<div class="abs" style="left:1516px;top:849px;width:55px;height:31px;border:1px solid #707070;border-radius:3px;background:linear-gradient(#f6f6f6 0%,#ededed 45%,#dddddd 46%,#d1d1d1 100%)"><svg class="abs" style="left:15px;top:3px" width="24" height="24"><path d="M12,8 L22,17 L2,17Z" fill="#5aa8f0" stroke="#2a6fc0" stroke-width="0.8"/></svg></div>
<div class="abs" style="left:1599px;top:849px;width:55px;height:31px;border:1px solid #707070;border-radius:3px;background:linear-gradient(#f6f6f6 0%,#ededed 45%,#dddddd 46%,#d1d1d1 100%)"><svg class="abs" style="left:15px;top:3px" width="24" height="24"><path d="M12,2 L14,9 L21,12 L14,15 L12,22 L10,15 L3,12 L10,9Z" fill="#f7d22a" stroke="#c07a10" stroke-width="1"/></svg></div>
<div class="abs" style="left:1682px;top:849px;width:55px;height:31px;border:1px solid #707070;border-radius:3px;background:linear-gradient(#f6f6f6 0%,#ededed 45%,#dddddd 46%,#d1d1d1 100%)"><svg class="abs" style="left:17px;top:2px" width="20" height="26"><path d="M4,5 L4,21 A6,2.5 0 0 0 16,21 L16,5Z" fill="#d8d8d8" stroke="#444" stroke-width="1.2"/><ellipse cx="10" cy="5" rx="6" ry="2.5" fill="#f2f2f2" stroke="#444" stroke-width="1.2"/></svg></div>
<div class="abs" style="left:1765px;top:849px;width:55px;height:31px;border:1px solid #707070;border-radius:3px;background:linear-gradient(#f6f6f6 0%,#ededed 45%,#dddddd 46%,#d1d1d1 100%)"><svg class="abs" style="left:15px;top:3px" width="24" height="24"><path d="M2,8 L22,8 L12,17Z" fill="#5aa8f0" stroke="#2a6fc0" stroke-width="0.8"/></svg></div>
<div class="abs" style="left:1848px;top:849px;width:55px;height:31px;border:1px solid #707070;border-radius:3px;background:linear-gradient(#f6f6f6 0%,#ededed 45%,#dddddd 46%,#d1d1d1 100%)"><svg class="abs" style="left:15px;top:3px" width="24" height="24"><path d="M3,3 L21,3 L12,16Z" fill="#5aa8f0" stroke="#2a6fc0" stroke-width="0.8"/><rect x="3" y="17" width="18" height="5" fill="#5aa8f0" stroke="#2a6fc0" stroke-width="0.8"/></svg></div>
<div class="abs" style="left:0;top:884px;width:1920px;height:10px;background:#f0f0f0"></div>
<svg class="abs" style="left:3px;top:886px" width="26" height="8"><path d="M1,7 L5,2 L9,7Z M12,2 L21,2 L16.5,7Z" fill="#000"/></svg>
<div class="abs" style="left:0;top:893.5px;width:1920px;height:1px;background:#6e6e6e"></div>
<div class="abs" style="left:0;top:895px;width:1px;height:275px;background:#555"></div>
<div class="abs" style="left:1px;top:895px;width:1px;height:275px;background:#999"></div>
<svg class="abs" style="left:14px;top:1163px" width="26" height="8"><ellipse cx="13" cy="10" rx="10" ry="7" fill="#a8c8e8" stroke="#44607a" stroke-width="1"/></svg>
<svg style="position:absolute;left:0;top:0" width="1920" height="1170">
<rect x="100" y="903" width="1797" height="220.5" fill="#c0c0c0"/>
<line x1="100" y1="1097.3" x2="1897" y2="1097.3" stroke="#e4e4e4" stroke-width="1" stroke-dasharray="4,3"/>
<line x1="100" y1="1071.5" x2="1897" y2="1071.5" stroke="#e4e4e4" stroke-width="1" stroke-dasharray="4,3"/>
<line x1="100" y1="1045.6" x2="1897" y2="1045.6" stroke="#e4e4e4" stroke-width="1" stroke-dasharray="4,3"/>
<line x1="100" y1="1019.8" x2="1897" y2="1019.8" stroke="#e4e4e4" stroke-width="1" stroke-dasharray="4,3"/>
<line x1="100" y1="993.9" x2="1897" y2="993.9" stroke="#e4e4e4" stroke-width="1" stroke-dasharray="4,3"/>
<line x1="100" y1="968.0" x2="1897" y2="968.0" stroke="#e4e4e4" stroke-width="1" stroke-dasharray="4,3"/>
<line x1="100" y1="942.2" x2="1897" y2="942.2" stroke="#e4e4e4" stroke-width="1" stroke-dasharray="4,3"/>
<line x1="100" y1="916.3" x2="1897" y2="916.3" stroke="#e4e4e4" stroke-width="1" stroke-dasharray="4,3"/>
<line x1="179.8" y1="903" x2="179.8" y2="1123" stroke="#f2f2f2" stroke-width="1" stroke-dasharray="2,2"/>
<line x1="259.3" y1="903" x2="259.3" y2="1123" stroke="#f2f2f2" stroke-width="1" stroke-dasharray="2,2"/>
<line x1="338.9" y1="903" x2="338.9" y2="1123" stroke="#f2f2f2" stroke-width="1" stroke-dasharray="2,2"/>
<line x1="418.4" y1="903" x2="418.4" y2="1123" stroke="#f2f2f2" stroke-width="1" stroke-dasharray="2,2"/>
<line x1="497.9" y1="903" x2="497.9" y2="1123" stroke="#f2f2f2" stroke-width="1" stroke-dasharray="2,2"/>
<line x1="577.4" y1="903" x2="577.4" y2="1123" stroke="#f2f2f2" stroke-width="1" stroke-dasharray="2,2"/>
<line x1="657.0" y1="903" x2="657.0" y2="1123" stroke="#f2f2f2" stroke-width="1" stroke-dasharray="2,2"/>
<line x1="736.5" y1="903" x2="736.5" y2="1123" stroke="#f2f2f2" stroke-width="1" stroke-dasharray="2,2"/>
<line x1="816.0" y1="903" x2="816.0" y2="1123" stroke="#f2f2f2" stroke-width="1" stroke-dasharray="2,2"/>
<line x1="895.5" y1="903" x2="895.5" y2="1123" stroke="#f2f2f2" stroke-width="1" stroke-dasharray="2,2"/>
<line x1="975.1" y1="903" x2="975.1" y2="1123" stroke="#f2f2f2" stroke-width="1" stroke-dasharray="2,2"/>
<line x1="1054.6" y1="903" x2="1054.6" y2="1123" stroke="#f2f2f2" stroke-width="1" stroke-dasharray="2,2"/>
<line x1="1134.1" y1="903" x2="1134.1" y2="1123" stroke="#f2f2f2" stroke-width="1" stroke-dasharray="2,2"/>
<line x1="1213.6" y1="903" x2="1213.6" y2="1123" stroke="#f2f2f2" stroke-width="1" stroke-dasharray="2,2"/>
<line x1="1293.2" y1="903" x2="1293.2" y2="1123" stroke="#f2f2f2" stroke-width="1" stroke-dasharray="2,2"/>
<line x1="1372.7" y1="903" x2="1372.7" y2="1123" stroke="#f2f2f2" stroke-width="1" stroke-dasharray="2,2"/>
<line x1="1452.2" y1="903" x2="1452.2" y2="1123" stroke="#f2f2f2" stroke-width="1" stroke-dasharray="2,2"/>
<line x1="1531.7" y1="903" x2="1531.7" y2="1123" stroke="#f2f2f2" stroke-width="1" stroke-dasharray="2,2"/>
<line x1="1611.3" y1="903" x2="1611.3" y2="1123" stroke="#f2f2f2" stroke-width="1" stroke-dasharray="2,2"/>
<line x1="1690.8" y1="903" x2="1690.8" y2="1123" stroke="#f2f2f2" stroke-width="1" stroke-dasharray="2,2"/>
<line x1="1770.3" y1="903" x2="1770.3" y2="1123" stroke="#f2f2f2" stroke-width="1" stroke-dasharray="2,2"/>
<line x1="1849.8" y1="903" x2="1849.8" y2="1123" stroke="#f2f2f2" stroke-width="1" stroke-dasharray="2,2"/>
<path d="M100.5,1123.3 L100.5,1097.4 L102.0,1098.5 L103.6,1105.0 L105.3,1116.0 L107.1,1122.5 L108.6,1112.7 L110.2,1111.4 L111.9,1110.5 L114.1,1111.6 L116.3,1113.8 L118.4,1102.8 L120.6,1101.7 L122.2,1103.5 L123.9,1105.0 L125.6,1108.0 L127.2,1108.3 L129.4,1112.7 L131.6,1098.5 L133.8,1093.0 L135.9,1095.2 L137.0,1105.0 L139.2,1107.2 L141.4,1101.7 L143.1,1101.0 L144.7,1100.6 L146.9,1096.3 L149.1,1091.9 L150.7,1089.7 L152.3,1087.5 L153.9,1085.6 L155.6,1083.1 L157.2,1084.3 L158.9,1087.5 L160.6,1087.5 L162.2,1087.5 L164.4,1085.3 L166.6,1091.9 L168.8,1097.4 L170.9,1105.0 L173.1,1111.6 L174.9,1105.0 L175.1,1018.6 L177.1,1019.7 L178.6,1021.9 L179.0,1111.6 L180.8,1100.6 L183.0,1111.6 L184.1,1102.8 L186.3,1087.5 L189.5,1078.8 L191.7,1074.4 L193.9,1083.1 L195.6,1075.9 L197.2,1067.8 L198.8,1058.9 L200.5,1048.1 L202.2,1033.7 L203.8,1021.9 L205.9,1019.7 L207.6,1019.6 L209.2,1020.8 L211.4,1020.0 L213.6,1021.9 L215.2,1027.2 L216.9,1030.6 L219.1,1037.8 L221.3,1043.8 L224.5,1052.5 L226.2,1056.5 L227.8,1063.5 L229.4,1071.6 L231.1,1076.6 L232.8,1084.6 L234.4,1089.7 L236.6,1105.0 L238.8,1109.4 L240.9,1111.0 L243.1,1111.6 L245.3,1114.2 L247.5,1116.0 L249.2,1117.1 L250.8,1120.3 L253.0,1105.0 L254.7,1094.7 L256.3,1087.5 L259.5,1081.0 L261.1,1074.5 L262.8,1067.8 L265.0,1070.0 L267.2,1091.9 L269.4,1111.6 L271.6,1116.0 L272.2,1014.2 L275.3,1014.2 L275.7,1116.0 L278.1,1118.1 L279.7,1013.1 L282.1,1013.1 L282.5,1118.1 L284.1,1112.9 L285.8,1110.5 L288.0,1106.1 L289.6,1110.1 L291.3,1116.0 L293.0,1116.8 L294.6,1119.2 L297.8,1116.0 L299.5,1113.4 L301.1,1113.8 L303.3,1111.6 L304.4,1094.1 L306.6,1111.6 L308.8,1105.0 L310.5,1097.8 L312.1,1090.8 L315.3,1095.2 L317.0,1097.7 L318.6,1100.6 L320.2,1108.3 L321.9,1113.8 L323.5,1106.2 L325.2,1098.5 L327.4,1048.1 L329.6,1024.1 L331.7,1026.3 L333.4,1033.3 L335.0,1039.4 L336.6,1032.8 L338.3,1026.3 L340.0,1025.7 L341.6,1024.1 L343.2,1030.5 L344.9,1037.2 L346.5,1041.9 L348.1,1048.1 L349.8,1050.8 L351.4,1050.3 L353.0,1053.0 L354.7,1052.5 L356.4,1050.8 L358.0,1047.0 L359.6,1047.2 L361.3,1046.0 L363.0,1047.0 L364.6,1049.2 L367.8,1053.6 L369.5,1054.4 L371.1,1056.9 L372.8,1056.8 L374.4,1058.0 L376.6,1053.6 L378.8,1052.8 L381.0,1054.7 L384.2,1056.9 L385.9,1058.9 L387.5,1059.1 L389.1,1059.3 L390.8,1060.2 L392.5,1056.9 L394.1,1051.4 L395.8,1053.8 L397.4,1056.9 L399.0,1060.0 L400.7,1060.2 L402.9,1059.1 L405.0,1055.8 L406.6,1051.5 L408.3,1050.3 L410.0,1047.2 L411.6,1046.0 L413.8,1050.3 L416.0,1061.3 L418.1,1064.2 L420.3,1064.5 L422.5,1065.6 L424.7,1091.9 L425.8,1116.0 L426.5,1010.9 L429.1,1013.1 L431.3,1010.9 L431.7,1116.0 L434.6,1114.9 L437.8,1118.1 L440.0,1117.0 L442.2,1116.0 L443.9,1118.1 L445.5,1117.1 L447.1,1116.2 L448.8,1116.0 L451.0,1113.8 L451.6,1002.2 L453.2,1004.4 L455.3,1006.6 L455.8,1113.8 L458.6,1112.7 L460.2,1113.0 L461.9,1116.0 L463.5,1117.5 L465.2,1118.1 L466.9,1111.3 L468.5,1102.8 L470.1,1101.0 L471.8,1100.6 L475.0,1099.6 L477.2,1099.9 L479.4,1102.8 L481.6,1103.9 L483.8,1106.1 L486.0,1107.0 L488.2,1105.0 L489.9,1108.3 L490.0,1108.3 L492.2,1111.9 L494.4,1113.8 L496.6,1114.2 L498.8,1117.1 L501.0,1117.3 L503.1,1119.2 L504.9,1118.1 L506.6,1118.2 L508.4,1120.7 L510.1,1118.9 L511.9,1120.3 L513.6,1120.3 L513.8,1120.3 L514.1,1003.3 L515.8,1003.3 L517.5,1002.6 L519.2,1004.5 L520.9,1002.7 L522.6,1004.5 L524.3,1004.2 L524.6,1120.3 L524.8,1119.7 L527.4,1118.4 L530.0,1118.6 L530.7,1120.3 L530.9,1000.0 L532.7,999.1 L534.6,1000.3 L536.4,1000.9 L536.6,1120.3 L536.8,1119.9 L537.9,1120.3 L538.1,1002.2 L539.8,1001.4 L541.5,1001.6 L543.2,1004.0 L544.9,1003.5 L546.7,1002.0 L548.4,1004.0 L550.1,1001.9 L551.8,1002.6 L553.5,1004.1 L555.2,1003.1 L555.4,1120.3 L555.6,1119.2 L558.7,1120.3 L558.9,1007.7 L560.4,1008.5 L560.7,1120.3 L560.9,1118.4 L563.5,1118.8 L566.1,1118.1 L568.8,1118.4 L571.4,1120.1 L574.0,1118.4 L575.8,1120.3 L576.0,1006.6 L577.5,1007.4 L577.7,1120.3 L577.9,1120.3 L580.6,1118.8 L583.2,1119.5 L583.9,1120.3 L584.1,1006.6 L586.5,1007.5 L588.9,1007.4 L589.1,1120.3 L589.3,1118.6 L591.5,1120.3 L591.7,1006.6 L593.9,1007.4 L594.1,1120.3 L594.4,1119.7 L597.0,1119.7 L599.6,1117.9 L602.2,1118.8 L604.9,1118.6 L607.9,1120.3 L608.1,1006.6 L609.9,1007.4 L610.1,1120.3 L610.3,1118.6 L612.9,1118.8 L615.6,1119.0 L618.2,1118.1 L621.0,1120.3 L621.3,1008.8 L622.9,1007.8 L624.5,1010.9 L626.1,1009.6 L626.3,1120.3 L626.5,1119.9 L629.1,1119.7 L629.8,1120.3 L630.0,1009.9 L631.8,1010.7 L632.0,1120.3 L632.2,1118.1 L634.8,1119.9 L637.5,1118.6 L640.1,1119.0 L642.7,1117.9 L645.3,1120.3 L648.0,1118.1 L650.6,1117.7 L652.1,1120.3 L652.3,1008.8 L654.1,1009.6 L654.3,1120.3 L654.5,1120.1 L655.4,1120.3 L655.6,1009.9 L657.5,1009.1 L659.4,1009.4 L661.2,1011.3 L663.1,1010.0 L665.0,1010.7 L665.2,1120.3 L665.9,1120.3 L666.1,1009.9 L668.3,1009.6 L670.5,1010.7 L670.7,1120.3 L670.9,1119.9 L673.5,1117.7 L676.2,1118.4 L678.8,1120.3 L681.4,1119.5 L684.0,1117.7 L686.7,1120.3 L689.3,1119.5 L691.9,1118.8 L693.9,1120.3 L694.1,1008.8 L696.0,1007.8 L697.8,1009.6 L698.1,1120.3 L698.3,1118.4 L699.8,1120.3 L700.0,1009.2 L701.8,1010.1 L702.0,1120.3 L702.2,1117.9 L703.1,1120.3 L703.3,1009.2 L705.1,1010.1 L705.3,1120.3 L705.5,1119.0 L706.4,1120.3 L706.6,1008.8 L709.4,1009.6 L709.6,1120.3 L709.9,1117.9 L710.7,1120.3 L711.0,1008.3 L712.9,1007.2 L714.8,1009.0 L716.7,1008.2 L718.6,1009.2 L718.8,1120.3 L719.5,1120.3 L719.7,1006.6 L721.5,1007.4 L721.7,1120.3 L721.9,1117.7 L722.8,1120.3 L723.0,1004.4 L724.9,1005.2 L726.7,1005.3 L726.9,1120.3 L727.1,1119.0 L729.8,1119.0 L732.4,1117.9 L734.8,1120.3 L735.0,1008.8 L736.8,1009.6 L737.0,1120.3 L737.2,1117.7 L738.1,1120.3 L738.3,1010.9 L739.8,1011.8 L740.1,1120.3 L740.3,1118.4 L742.9,1118.8 L743.6,1120.3 L743.8,1004.4 L745.5,1004.2 L747.3,1004.7 L749.0,1006.5 L750.8,1005.3 L751.0,1120.3 L751.2,1119.9 L753.8,1119.2 L756.5,1120.1 L758.4,1120.3 L758.7,1004.4 L761.3,1005.3 L761.5,1120.3 L761.7,1120.3 L764.3,1120.3 L764.6,1004.4 L767.4,1005.3 L767.6,1120.3 L767.8,1119.9 L770.9,1120.3 L771.1,1012.0 L773.3,1012.4 L775.5,1012.9 L775.7,1120.3 L775.9,1118.8 L778.6,1119.7 L781.2,1119.5 L783.8,1118.1 L785.6,1120.3 L785.8,1010.9 L787.6,1011.4 L789.4,1012.5 L791.2,1010.6 L793.0,1011.8 L793.2,1120.3 L794.1,1113.8 L795.8,1109.9 L797.4,1109.6 L799.1,1106.6 L800.7,1102.8 L802.4,1097.6 L804.2,1093.1 L805.9,1090.5 L807.7,1086.8 L809.4,1081.0 L811.0,1074.0 L812.7,1070.4 L814.4,1064.1 L816.0,1056.9 L817.8,1051.8 L819.6,1045.7 L821.4,1040.5 L823.0,1045.2 L824.7,1052.5 L826.9,1078.8 L829.1,1078.8 L830.8,1056.5 L832.4,1037.2 L834.0,1031.0 L835.7,1021.9 L837.9,1026.5 L840.0,1032.8 L842.2,1035.7 L844.4,1037.2 L846.6,1037.5 L848.8,1039.4 L851.0,1032.8 L853.1,1034.9 L855.3,1035.0 L856.9,1035.3 L858.6,1034.3 L860.2,1034.0 L861.9,1035.0 L864.1,1041.2 L866.3,1046.0 L868.5,1044.6 L870.7,1046.0 L873.9,1043.8 L875.5,1045.1 L877.2,1048.1 L879.4,1053.8 L881.6,1059.1 L883.8,1056.9 L886.0,1052.5 L888.0,1050.7 L890.0,1048.1 L891.6,1048.5 L893.3,1050.3 L895.0,1039.6 L896.6,1026.3 L898.8,1017.7 L900.9,1010.9 L903.1,1006.7 L905.3,1005.5 L907.5,987.8 L909.7,971.6 L911.4,973.6 L913.0,975.9 L914.6,961.4 L916.3,949.7 L917.9,936.1 L919.5,924.5 L921.1,930.1 L922.8,936.6 L924.5,941.2 L926.1,945.3 L927.8,950.7 L929.4,958.4 L931.6,964.6 L933.8,971.6 L936.0,987.1 L938.1,1000.0 L940.3,1003.2 L942.5,1003.3 L944.1,1005.5 L945.8,1006.6 L947.5,1005.0 L949.1,1002.2 L951.2,998.1 L953.4,993.4 L955.6,986.8 L957.8,982.5 L959.5,982.1 L961.1,984.7 L963.3,987.5 L965.5,993.4 L967.3,1000.5 L969.1,1005.7 L970.9,1010.9 L972.5,1013.5 L974.2,1013.1 L975.9,1002.8 L977.5,995.6 L979.3,992.4 L981.2,988.3 L983.0,984.7 L985.2,989.8 L987.4,993.4 L989.2,1002.3 L991.0,1014.0 L992.8,1021.9 L995.0,1021.1 L997.2,1023.0 L999.0,1019.1 L1000.9,1015.7 L1002.7,1010.9 L1004.5,1012.9 L1006.3,1013.1 L1008.1,1013.1 L1010.3,1012.7 L1012.5,1010.9 L1014.7,1017.3 L1016.9,1021.9 L1019.1,1018.8 L1021.3,1013.1 L1023.1,1017.0 L1024.9,1022.5 L1026.7,1026.3 L1028.5,1026.8 L1030.4,1026.0 L1032.2,1024.1 L1034.4,1024.4 L1036.6,1025.2 L1038.8,1019.0 L1041.0,1010.9 L1042.6,1018.7 L1044.2,1024.1 L1046.0,1022.9 L1047.9,1021.6 L1049.7,1019.7 L1051.3,1019.3 L1053.0,1020.0 L1054.7,1020.0 L1056.3,1019.7 L1057.9,1018.9 L1059.5,1021.2 L1061.2,1022.9 L1062.8,1021.9 L1064.6,1016.5 L1066.5,1009.5 L1068.3,1002.2 L1069.9,1001.8 L1071.6,1002.2 L1073.8,1009.5 L1076.0,1015.3 L1078.2,1009.0 L1080.3,1002.2 L1082.0,1008.0 L1083.6,1015.3 L1085.2,1018.9 L1086.9,1026.3 L1088.6,1026.0 L1090.2,1022.6 L1091.8,1023.3 L1093.5,1021.9 L1095.1,1022.4 L1096.8,1022.1 L1098.4,1024.2 L1100.0,1024.1 L1102.2,1025.2 L1104.4,1026.3 L1106.6,1026.7 L1108.8,1026.3 L1110.4,1026.0 L1112.0,1022.2 L1113.7,1019.8 L1115.3,1019.7 L1117.5,1022.4 L1119.7,1026.3 L1121.3,1025.8 L1123.0,1023.1 L1124.7,1021.9 L1126.3,1021.9 L1128.2,1020.2 L1130.1,1016.4 L1132.0,1012.7 L1133.9,1009.9 L1135.6,1016.6 L1137.2,1020.8 L1138.8,1020.0 L1140.5,1020.8 L1142.2,1019.0 L1143.8,1019.7 L1145.9,1020.6 L1148.1,1021.9 L1150.3,1016.3 L1152.5,1008.8 L1154.2,1007.7 L1155.8,1005.1 L1157.4,1001.0 L1159.1,998.9 L1160.8,1008.5 L1162.4,1017.5 L1164.1,1006.0 L1165.7,995.6 L1167.5,1003.2 L1169.3,1013.1 L1171.1,1021.9 L1172.8,1024.1 L1174.4,1024.1 L1176.1,1024.7 L1177.7,1023.7 L1179.3,1023.9 L1181.0,1021.9 L1182.6,1018.4 L1184.2,1015.3 L1185.9,1013.5 L1187.5,1010.9 L1189.3,1009.8 L1191.0,1009.1 L1192.8,1009.4 L1194.5,1009.6 L1196.3,1008.8 L1198.1,1008.0 L1199.9,1006.7 L1201.7,1006.6 L1203.3,1012.0 L1205.0,1015.3 L1206.8,1008.8 L1208.7,999.1 L1210.5,991.3 L1212.7,997.6 L1214.9,1006.6 L1217.1,993.1 L1219.2,982.5 L1220.8,992.4 L1222.5,1000.0 L1224.7,994.2 L1226.9,991.3 L1229.1,986.5 L1231.3,980.3 L1233.5,991.5 L1235.7,1002.2 L1237.8,1004.9 L1240.0,1008.8 L1241.7,1011.1 L1243.3,1010.0 L1244.9,1011.7 L1246.6,1014.2 L1248.2,1013.5 L1249.9,1013.1 L1251.7,1007.9 L1253.5,1006.9 L1255.3,1002.2 L1257.1,999.9 L1259.0,998.1 L1260.8,997.8 L1263.0,986.5 L1265.2,978.1 L1266.8,973.1 L1268.5,967.2 L1270.2,968.7 L1271.8,970.5 L1273.9,969.3 L1276.1,967.2 L1277.9,957.5 L1279.8,947.8 L1281.6,936.6 L1283.5,926.6 L1285.5,913.6 L1287.4,925.7 L1289.3,936.6 L1289.9,937.7 L1290.0,938.8 L1292.2,938.9 L1294.4,940.9 L1296.6,941.9 L1298.8,943.1 L1300.4,940.2 L1302.0,937.7 L1303.7,937.3 L1305.3,935.5 L1307.1,944.6 L1309.0,951.2 L1310.8,960.6 L1312.6,959.9 L1314.5,960.1 L1316.3,960.6 L1318.4,973.3 L1320.6,984.7 L1322.2,978.2 L1323.9,971.9 L1325.5,965.8 L1327.2,958.4 L1329.0,952.6 L1330.9,948.4 L1332.7,942.0 L1334.8,955.9 L1337.0,967.2 L1338.7,985.6 L1340.3,1006.6 L1342.1,1008.0 L1344.0,1007.3 L1345.8,1006.6 L1347.7,1008.7 L1349.6,1013.0 L1351.5,1016.8 L1353.4,1019.7 L1355.1,1017.7 L1356.7,1013.1 L1358.9,1021.5 L1361.1,1030.6 L1363.0,1027.5 L1364.9,1025.3 L1366.9,1021.7 L1368.8,1017.5 L1370.6,1024.4 L1372.4,1028.3 L1374.2,1033.9 L1375.8,1031.7 L1377.5,1028.5 L1379.7,1035.2 L1381.9,1043.8 L1384.1,1032.8 L1385.8,1040.1 L1387.4,1046.0 L1390.6,1037.2 L1392.8,1037.1 L1395.0,1035.0 L1397.2,1039.9 L1399.4,1043.8 L1401.0,1043.4 L1402.7,1040.7 L1404.3,1041.8 L1405.9,1039.4 L1407.7,1040.9 L1409.4,1040.9 L1411.2,1039.5 L1412.9,1040.3 L1414.7,1039.4 L1416.3,1039.9 L1418.0,1042.9 L1419.7,1043.8 L1421.3,1043.8 L1422.9,1046.0 L1424.5,1047.9 L1426.2,1051.8 L1427.8,1054.7 L1429.5,1055.4 L1431.1,1056.7 L1432.8,1056.3 L1434.4,1056.9 L1436.1,1053.6 L1437.9,1054.4 L1439.6,1050.2 L1441.4,1050.8 L1443.1,1048.1 L1444.9,1046.2 L1446.6,1045.9 L1448.4,1046.4 L1450.1,1043.5 L1451.9,1043.8 L1454.1,1037.2 L1456.3,1032.8 L1458.1,1040.2 L1459.9,1048.1 L1461.7,1054.7 L1463.4,1055.5 L1465.2,1054.7 L1466.9,1055.2 L1468.6,1053.4 L1470.3,1054.6 L1472.1,1051.5 L1473.8,1052.5 L1475.9,1052.7 L1478.1,1054.7 L1479.9,1058.4 L1481.8,1061.3 L1483.6,1065.6 L1485.2,1063.8 L1486.9,1060.9 L1488.5,1058.0 L1490.2,1056.5 L1491.8,1053.0 L1493.5,1050.3 L1495.3,1049.7 L1497.1,1049.9 L1499.0,1051.4 L1500.8,1051.6 L1502.6,1049.4 L1504.4,1050.3 L1506.6,1055.8 L1508.8,1059.1 L1510.9,1062.8 L1513.1,1063.5 L1514.9,1057.0 L1516.8,1050.6 L1518.6,1043.8 L1520.8,1038.4 L1523.0,1035.0 L1524.7,1037.3 L1526.3,1039.4 L1528.1,1044.5 L1529.9,1049.9 L1531.7,1054.7 L1533.5,1054.7 L1535.4,1059.1 L1537.2,1059.1 L1538.8,1060.3 L1540.5,1061.0 L1542.2,1063.4 L1543.8,1063.5 L1545.5,1062.6 L1547.3,1061.3 L1549.0,1060.8 L1550.8,1057.7 L1552.5,1058.0 L1554.7,1064.1 L1556.9,1070.0 L1558.7,1069.3 L1560.4,1070.6 L1562.2,1070.0 L1563.9,1067.5 L1565.7,1067.8 L1567.3,1068.5 L1569.0,1068.3 L1570.6,1070.1 L1572.2,1071.1 L1573.8,1065.0 L1575.5,1056.9 L1577.7,1048.3 L1579.9,1037.2 L1580.0,1036.0 L1581.8,1038.3 L1583.5,1040.7 L1585.8,1051.3 L1588.2,1063.0 L1590.0,1060.8 L1591.7,1060.6 L1594.1,1062.8 L1596.4,1064.2 L1598.2,1066.1 L1600.0,1065.3 L1601.9,1060.2 L1603.9,1058.4 L1605.8,1053.6 L1607.6,1053.8 L1609.4,1057.1 L1611.7,1063.0 L1613.7,1055.4 L1615.6,1048.8 L1617.6,1043.0 L1619.3,1045.4 L1621.1,1046.6 L1623.5,1041.9 L1625.2,1044.8 L1627.0,1048.9 L1628.8,1053.7 L1630.5,1059.5 L1632.5,1064.9 L1634.4,1068.4 L1636.4,1074.7 L1638.8,1073.7 L1641.1,1071.2 L1643.4,1070.0 L1645.8,1071.2 L1647.5,1066.5 L1649.3,1061.8 L1651.7,1057.5 L1654.0,1054.8 L1655.8,1052.6 L1657.5,1052.4 L1659.8,1045.4 L1662.2,1038.3 L1664.6,1040.4 L1666.9,1043.0 L1668.7,1033.2 L1670.5,1024.2 L1672.2,1033.3 L1674.0,1043.0 L1675.8,1031.3 L1677.5,1019.5 L1679.2,1010.8 L1681.0,1004.3 L1683.4,1017.2 L1685.7,1016.0 L1688.1,1023.9 L1690.4,1033.6 L1692.8,1024.2 L1694.5,1025.5 L1696.3,1026.4 L1698.0,1027.0 L1699.8,1027.8 L1702.2,1031.8 L1704.5,1033.6 L1706.3,1037.5 L1708.1,1040.7 L1710.4,1029.5 L1712.8,1016.0 L1714.5,1015.7 L1716.3,1017.2 L1718.3,1014.8 L1720.2,1011.9 L1722.2,1007.8 L1724.0,1010.2 L1725.7,1010.1 L1727.7,1006.4 L1729.6,1003.2 L1731.6,1000.7 L1733.3,1009.1 L1735.1,1014.8 L1737.4,1013.3 L1739.8,1013.7 L1742.2,1020.5 L1744.5,1024.2 L1746.8,1027.8 L1749.2,1028.9 L1751.6,1033.6 L1753.9,1040.7 L1756.2,1031.3 L1758.2,1036.3 L1760.1,1043.8 L1762.1,1048.9 L1764.1,1043.0 L1766.0,1037.4 L1768.0,1033.6 L1769.8,1033.5 L1771.5,1031.3 L1773.5,1030.2 L1775.4,1030.6 L1777.4,1028.9 L1779.2,1040.7 L1780.9,1054.8 L1783.2,1018.4 L1785.0,1025.7 L1786.8,1033.6 L1789.2,1034.8 L1791.5,1034.8 L1793.8,1036.0 L1795.4,1023.2 L1797.1,1012.5 L1798.7,1002.7 L1800.4,992.2 L1802.0,979.6 L1804.3,989.3 L1806.7,996.0 L1808.7,1001.8 L1810.6,1010.2 L1812.6,1017.2 L1814.9,1019.2 L1817.3,1019.5 L1819.7,1026.6 L1822.0,1033.6 L1824.0,1038.1 L1825.9,1040.5 L1827.9,1045.4 L1829.7,1043.4 L1831.4,1042.9 L1833.2,1042.1 L1834.9,1043.0 L1836.7,1039.6 L1838.5,1036.0 L1840.2,1032.6 L1842.0,1028.9 L1844.3,1024.9 L1846.7,1023.1 L1848.5,1019.1 L1850.2,1017.2 L1852.6,1026.8 L1854.9,1038.3 L1856.5,1030.0 L1858.2,1021.1 L1859.8,1011.5 L1861.5,999.4 L1863.1,991.3 L1865.1,998.5 L1867.0,1010.0 L1869.0,1017.2 L1870.8,1022.4 L1872.5,1028.6 L1874.3,1032.5 L1876.1,1038.3 L1878.0,1034.0 L1879.9,1029.9 L1881.7,1025.4 L1883.6,1021.7 L1885.5,1017.2 L1887.8,1026.2 L1890.2,1038.3 L1891.8,1038.7 L1893.5,1038.9 L1895.1,1036.5 L1896.5,1037.2 L1896.5,1123.3Z" fill="#e87676"/>
<line x1="179.8" y1="903" x2="179.8" y2="1123" stroke="#ffffff" stroke-opacity="0.14" stroke-width="1"/>
<line x1="259.3" y1="903" x2="259.3" y2="1123" stroke="#ffffff" stroke-opacity="0.14" stroke-width="1"/>
<line x1="338.9" y1="903" x2="338.9" y2="1123" stroke="#ffffff" stroke-opacity="0.14" stroke-width="1"/>
<line x1="418.4" y1="903" x2="418.4" y2="1123" stroke="#ffffff" stroke-opacity="0.14" stroke-width="1"/>
<line x1="497.9" y1="903" x2="497.9" y2="1123" stroke="#ffffff" stroke-opacity="0.14" stroke-width="1"/>
<line x1="577.4" y1="903" x2="577.4" y2="1123" stroke="#ffffff" stroke-opacity="0.14" stroke-width="1"/>
<line x1="657.0" y1="903" x2="657.0" y2="1123" stroke="#ffffff" stroke-opacity="0.14" stroke-width="1"/>
<line x1="736.5" y1="903" x2="736.5" y2="1123" stroke="#ffffff" stroke-opacity="0.14" stroke-width="1"/>
<line x1="816.0" y1="903" x2="816.0" y2="1123" stroke="#ffffff" stroke-opacity="0.14" stroke-width="1"/>
<line x1="895.5" y1="903" x2="895.5" y2="1123" stroke="#ffffff" stroke-opacity="0.14" stroke-width="1"/>
<line x1="975.1" y1="903" x2="975.1" y2="1123" stroke="#ffffff" stroke-opacity="0.14" stroke-width="1"/>
<line x1="1054.6" y1="903" x2="1054.6" y2="1123" stroke="#ffffff" stroke-opacity="0.14" stroke-width="1"/>
<line x1="1134.1" y1="903" x2="1134.1" y2="1123" stroke="#ffffff" stroke-opacity="0.14" stroke-width="1"/>
<line x1="1213.6" y1="903" x2="1213.6" y2="1123" stroke="#ffffff" stroke-opacity="0.14" stroke-width="1"/>
<line x1="1293.2" y1="903" x2="1293.2" y2="1123" stroke="#ffffff" stroke-opacity="0.14" stroke-width="1"/>
<line x1="1372.7" y1="903" x2="1372.7" y2="1123" stroke="#ffffff" stroke-opacity="0.14" stroke-width="1"/>
<line x1="1452.2" y1="903" x2="1452.2" y2="1123" stroke="#ffffff" stroke-opacity="0.14" stroke-width="1"/>
<line x1="1531.7" y1="903" x2="1531.7" y2="1123" stroke="#ffffff" stroke-opacity="0.14" stroke-width="1"/>
<line x1="1611.3" y1="903" x2="1611.3" y2="1123" stroke="#ffffff" stroke-opacity="0.14" stroke-width="1"/>
<line x1="1690.8" y1="903" x2="1690.8" y2="1123" stroke="#ffffff" stroke-opacity="0.14" stroke-width="1"/>
<line x1="1770.3" y1="903" x2="1770.3" y2="1123" stroke="#ffffff" stroke-opacity="0.14" stroke-width="1"/>
<line x1="1849.8" y1="903" x2="1849.8" y2="1123" stroke="#ffffff" stroke-opacity="0.14" stroke-width="1"/>
<line x1="622.5" y1="903" x2="622.5" y2="1123" stroke="#707070" stroke-width="1"/>
<path d="M100.5,1123.5 V903.5 H1896.5 V1123.5" fill="none" stroke="#333" stroke-width="1"/>
<line x1="100" y1="1123.5" x2="1897" y2="1123.5" stroke="#c96a6a" stroke-width="1"/>
<line x1="93" y1="903" x2="93" y2="1123" stroke="#8a8a8a" stroke-width="1.2"/>
<line x1="89" y1="1123.2" x2="93" y2="1123.2" stroke="#8a8a8a" stroke-width="1"/>
<text x="81" y="1127.9" text-anchor="end" class="tick" textLength="10.3" lengthAdjust="spacingAndGlyphs">0</text>
<line x1="89" y1="1097.3" x2="93" y2="1097.3" stroke="#8a8a8a" stroke-width="1"/>
<text x="81" y="1102.0" text-anchor="end" class="tick" textLength="21.6" lengthAdjust="spacingAndGlyphs">10</text>
<line x1="89" y1="1071.5" x2="93" y2="1071.5" stroke="#8a8a8a" stroke-width="1"/>
<text x="81" y="1076.2" text-anchor="end" class="tick" textLength="21.6" lengthAdjust="spacingAndGlyphs">20</text>
<line x1="89" y1="1045.6" x2="93" y2="1045.6" stroke="#8a8a8a" stroke-width="1"/>
<text x="81" y="1050.3" text-anchor="end" class="tick" textLength="21.6" lengthAdjust="spacingAndGlyphs">30</text>
<line x1="89" y1="1019.8" x2="93" y2="1019.8" stroke="#8a8a8a" stroke-width="1"/>
<text x="81" y="1024.5" text-anchor="end" class="tick" textLength="21.6" lengthAdjust="spacingAndGlyphs">40</text>
<line x1="89" y1="993.9" x2="93" y2="993.9" stroke="#8a8a8a" stroke-width="1"/>
<text x="81" y="998.6" text-anchor="end" class="tick" textLength="21.6" lengthAdjust="spacingAndGlyphs">50</text>
<line x1="89" y1="968.0" x2="93" y2="968.0" stroke="#8a8a8a" stroke-width="1"/>
<text x="81" y="972.7" text-anchor="end" class="tick" textLength="21.6" lengthAdjust="spacingAndGlyphs">60</text>
<line x1="89" y1="942.2" x2="93" y2="942.2" stroke="#8a8a8a" stroke-width="1"/>
<text x="81" y="946.9" text-anchor="end" class="tick" textLength="21.6" lengthAdjust="spacingAndGlyphs">70</text>
<line x1="89" y1="916.3" x2="93" y2="916.3" stroke="#8a8a8a" stroke-width="1"/>
<text x="81" y="921.0" text-anchor="end" class="tick" textLength="21.6" lengthAdjust="spacingAndGlyphs">80</text>
<line x1="100" y1="1127.5" x2="1897" y2="1127.5" stroke="#8a8a8a" stroke-width="1.2"/>
<line x1="100.3" y1="1127" x2="100.3" y2="1131" stroke="#8a8a8a" stroke-width="1"/>
<text x="100.3" y="1142.9" text-anchor="middle" class="tick" textLength="10.3" lengthAdjust="spacingAndGlyphs">0</text>
<line x1="179.8" y1="1127" x2="179.8" y2="1131" stroke="#8a8a8a" stroke-width="1"/>
<text x="179.8" y="1142.9" text-anchor="middle" class="tick" textLength="10.3" lengthAdjust="spacingAndGlyphs">5</text>
<line x1="259.3" y1="1127" x2="259.3" y2="1131" stroke="#8a8a8a" stroke-width="1"/>
<text x="259.3" y="1142.9" text-anchor="middle" class="tick" textLength="21.6" lengthAdjust="spacingAndGlyphs">10</text>
<line x1="338.9" y1="1127" x2="338.9" y2="1131" stroke="#8a8a8a" stroke-width="1"/>
<text x="338.9" y="1142.9" text-anchor="middle" class="tick" textLength="21.6" lengthAdjust="spacingAndGlyphs">15</text>
<line x1="418.4" y1="1127" x2="418.4" y2="1131" stroke="#8a8a8a" stroke-width="1"/>
<text x="418.4" y="1142.9" text-anchor="middle" class="tick" textLength="21.6" lengthAdjust="spacingAndGlyphs">20</text>
<line x1="497.9" y1="1127" x2="497.9" y2="1131" stroke="#8a8a8a" stroke-width="1"/>
<text x="497.9" y="1142.9" text-anchor="middle" class="tick" textLength="21.6" lengthAdjust="spacingAndGlyphs">25</text>
<line x1="577.4" y1="1127" x2="577.4" y2="1131" stroke="#8a8a8a" stroke-width="1"/>
<text x="577.4" y="1142.9" text-anchor="middle" class="tick" textLength="21.6" lengthAdjust="spacingAndGlyphs">30</text>
<line x1="657.0" y1="1127" x2="657.0" y2="1131" stroke="#8a8a8a" stroke-width="1"/>
<text x="657.0" y="1142.9" text-anchor="middle" class="tick" textLength="21.6" lengthAdjust="spacingAndGlyphs">35</text>
<line x1="736.5" y1="1127" x2="736.5" y2="1131" stroke="#8a8a8a" stroke-width="1"/>
<text x="736.5" y="1142.9" text-anchor="middle" class="tick" textLength="21.6" lengthAdjust="spacingAndGlyphs">40</text>
<line x1="816.0" y1="1127" x2="816.0" y2="1131" stroke="#8a8a8a" stroke-width="1"/>
<text x="816.0" y="1142.9" text-anchor="middle" class="tick" textLength="21.6" lengthAdjust="spacingAndGlyphs">45</text>
<line x1="895.5" y1="1127" x2="895.5" y2="1131" stroke="#8a8a8a" stroke-width="1"/>
<text x="895.5" y="1142.9" text-anchor="middle" class="tick" textLength="21.6" lengthAdjust="spacingAndGlyphs">50</text>
<line x1="975.1" y1="1127" x2="975.1" y2="1131" stroke="#8a8a8a" stroke-width="1"/>
<text x="975.1" y="1142.9" text-anchor="middle" class="tick" textLength="21.6" lengthAdjust="spacingAndGlyphs">55</text>
<line x1="1054.6" y1="1127" x2="1054.6" y2="1131" stroke="#8a8a8a" stroke-width="1"/>
<text x="1054.6" y="1142.9" text-anchor="middle" class="tick" textLength="21.6" lengthAdjust="spacingAndGlyphs">60</text>
<line x1="1134.1" y1="1127" x2="1134.1" y2="1131" stroke="#8a8a8a" stroke-width="1"/>
<text x="1134.1" y="1142.9" text-anchor="middle" class="tick" textLength="21.6" lengthAdjust="spacingAndGlyphs">65</text>
<line x1="1213.6" y1="1127" x2="1213.6" y2="1131" stroke="#8a8a8a" stroke-width="1"/>
<text x="1213.6" y="1142.9" text-anchor="middle" class="tick" textLength="21.6" lengthAdjust="spacingAndGlyphs">70</text>
<line x1="1293.2" y1="1127" x2="1293.2" y2="1131" stroke="#8a8a8a" stroke-width="1"/>
<text x="1293.2" y="1142.9" text-anchor="middle" class="tick" textLength="21.6" lengthAdjust="spacingAndGlyphs">75</text>
<line x1="1372.7" y1="1127" x2="1372.7" y2="1131" stroke="#8a8a8a" stroke-width="1"/>
<text x="1372.7" y="1142.9" text-anchor="middle" class="tick" textLength="21.6" lengthAdjust="spacingAndGlyphs">80</text>
<line x1="1452.2" y1="1127" x2="1452.2" y2="1131" stroke="#8a8a8a" stroke-width="1"/>
<text x="1452.2" y="1142.9" text-anchor="middle" class="tick" textLength="21.6" lengthAdjust="spacingAndGlyphs">85</text>
<line x1="1531.7" y1="1127" x2="1531.7" y2="1131" stroke="#8a8a8a" stroke-width="1"/>
<text x="1531.7" y="1142.9" text-anchor="middle" class="tick" textLength="21.6" lengthAdjust="spacingAndGlyphs">90</text>
<line x1="1611.3" y1="1127" x2="1611.3" y2="1131" stroke="#8a8a8a" stroke-width="1"/>
<text x="1611.3" y="1142.9" text-anchor="middle" class="tick" textLength="21.6" lengthAdjust="spacingAndGlyphs">95</text>
<line x1="1690.8" y1="1127" x2="1690.8" y2="1131" stroke="#8a8a8a" stroke-width="1"/>
<text x="1690.8" y="1142.9" text-anchor="middle" class="tick" textLength="32.9" lengthAdjust="spacingAndGlyphs">100</text>
<line x1="1770.3" y1="1127" x2="1770.3" y2="1131" stroke="#8a8a8a" stroke-width="1"/>
<text x="1770.3" y="1142.9" text-anchor="middle" class="tick" textLength="32.9" lengthAdjust="spacingAndGlyphs">105</text>
<line x1="1849.8" y1="1127" x2="1849.8" y2="1131" stroke="#8a8a8a" stroke-width="1"/>
<text x="1849.8" y="1142.9" text-anchor="middle" class="tick" textLength="32.9" lengthAdjust="spacingAndGlyphs">110</text>
<text x="998.3" y="1158.8" text-anchor="middle" class="axl" textLength="105.5" lengthAdjust="spacingAndGlyphs">Länge [Km]</text>
<text transform="translate(44,1015.4) rotate(-90)" text-anchor="middle" class="ayl" textLength="43" lengthAdjust="spacingAndGlyphs">Höhe [m]</text>
</svg>
</body></html>
